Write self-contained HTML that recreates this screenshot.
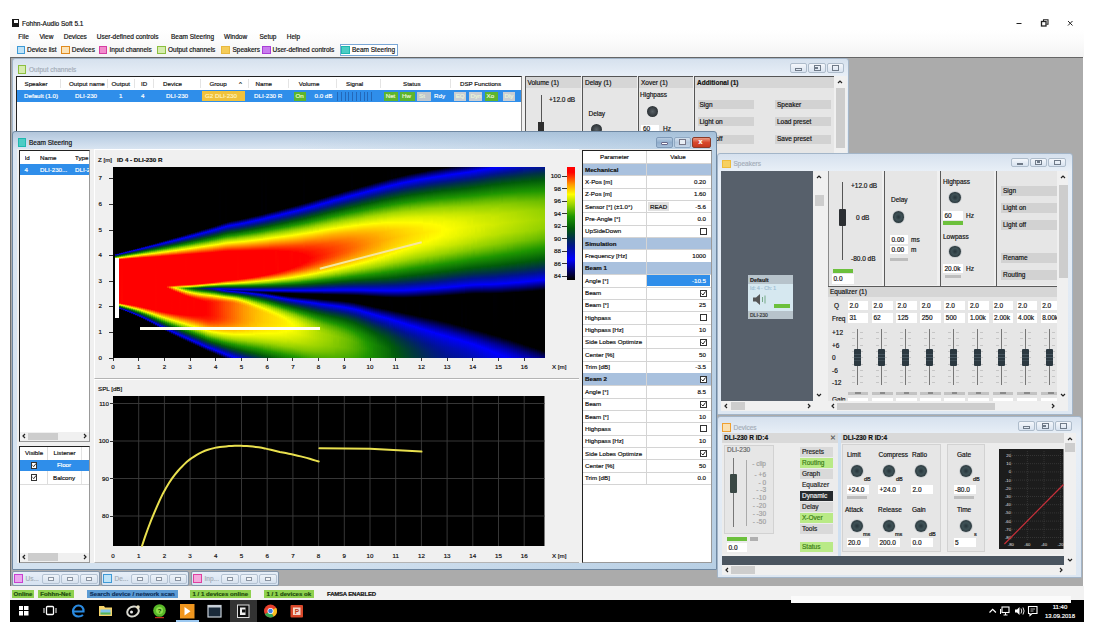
<!DOCTYPE html><html><head><meta charset="utf-8"><title>Fohhn-Audio Soft 5.1</title><style>
html,body{margin:0;padding:0;background:#fff;}
body{width:1099px;height:628px;position:relative;overflow:hidden;font-family:"Liberation Sans",sans-serif;font-size:6.5px;color:#111;-webkit-text-stroke:0.18px;}
div{position:absolute;box-sizing:border-box;}
.t{position:absolute;white-space:nowrap;line-height:10px;height:10px;}
.s{font-size:6.2px;}
.w{color:#fff;}
.g{color:#9aa3ad;}
svg{position:absolute;overflow:visible;}
.hs i{position:absolute;top:0;height:191px;display:block;}
</style></head><body><div style="left:10px;top:12px;width:1074px;height:588px;background:#fff;"></div><div style="left:11.5px;top:18.5px;width:7.5px;height:8.5px;background:#1a1a1a;"></div><div style="left:14px;top:20px;width:3.5px;height:3px;background:#fff;"></div><span class="t" style="left:22px;top:18.5px;color:#111;">Fohhn-Audio Soft 5.1</span><svg style="left:1010px;top:15px" width="70" height="16" viewBox="0 0 70 16"><g stroke="#222" stroke-width="1" fill="none"><path d="M6.5 8.5h5"/><rect x="31.500" y="6.500" width="4.500" height="4.500" stroke-width="1.300"/><path d="M33.500 6V4.800h4.500v4.500h-1.500" stroke-width="1.100"/><path d="M58 6l4.5 4.5M62.500 6l-4.500 4.500"/></g></svg><div style="left:10px;top:30px;width:1074px;height:27px;background:linear-gradient(#fff,#fcfcfc 35%,#f3f3f3);"></div><span class="t" style="left:18.3px;top:31.5px;color:#111;">File</span><span class="t" style="left:39.4px;top:31.5px;color:#111;">View</span><span class="t" style="left:63.7px;top:31.5px;color:#111;">Devices</span><span class="t" style="left:96.7px;top:31.5px;color:#111;">User-defined controls</span><span class="t" style="left:171px;top:31.5px;color:#111;">Beam Steering</span><span class="t" style="left:224px;top:31.5px;color:#111;">Window</span><span class="t" style="left:259.5px;top:31.5px;color:#111;">Setup</span><span class="t" style="left:286.7px;top:31.5px;color:#111;">Help</span><div style="left:339.5px;top:43.5px;width:58px;height:12.5px;border:1px solid #7aa7d6;background:#fff;"></div><div style="left:16.5px;top:45.5px;width:8.5px;height:8.5px;border:1.5px solid #3f9ad6;background:#bfe3f7;"></div><span class="t" style="left:27px;top:44.8px;color:#111;">Device list</span><div style="left:61.4px;top:45.5px;width:8.5px;height:8.5px;border:1.5px solid #e08a1e;background:#fbe3b8;"></div><span class="t" style="left:71.8px;top:44.8px;color:#111;">Devices</span><div style="left:98.5px;top:45.5px;width:8.5px;height:8.5px;border:1.5px solid #d63fa3;background:#f28ccc;"></div><span class="t" style="left:109.5px;top:44.8px;color:#111;">Input channels</span><div style="left:157px;top:45.5px;width:8.5px;height:8.5px;border:1.5px solid #8cbf3f;background:#d6ecae;"></div><span class="t" style="left:168px;top:44.8px;color:#111;">Output channels</span><div style="left:221px;top:45.5px;width:8.5px;height:8.5px;border:1.5px solid #e8b840;background:#f5cc58;"></div><span class="t" style="left:232.5px;top:44.8px;color:#111;">Speakers</span><div style="left:262px;top:45.5px;width:8.5px;height:8.5px;border:1.5px solid #a83fd6;background:#c97cee;"></div><span class="t" style="left:272.5px;top:44.8px;color:#111;">User-defined controls</span><div style="left:341px;top:45.5px;width:8.5px;height:8.5px;border:1.5px solid #1fb8b0;background:#4cccc4;"></div><span class="t" style="left:352px;top:44.8px;color:#111;">Beam Steering</span><div style="left:10px;top:57px;width:1073px;height:528.5px;background:#ababab;border-top:1px solid #666;border-left:1.5px solid #6e6e6e;"></div><div style="left:12px;top:58px;width:837px;height:110px;background:linear-gradient(#d6e1ee,#e8eff7 17px,#dde7f2);border:1px solid #a3b5c8;border-radius:3px 3px 1px 1px;"></div><div style="left:17.5px;top:65px;width:8.5px;height:8.5px;border:1.5px solid #8cbf3f;background:#d6ecae;"></div><span class="t" style="left:29px;top:64.5px;color:#a4adb8;">Output channels</span><div style="left:789.5px;top:63px;width:17.5px;height:9.5px;border:1px solid #aebccb;background:linear-gradient(#f4f7fb,#d8e3f0);border-radius:2px;"></div><div style="left:808px;top:63px;width:17.5px;height:9.5px;border:1px solid #aebccb;background:linear-gradient(#f4f7fb,#d8e3f0);border-radius:2px;"></div><div style="left:826.5px;top:63px;width:17.5px;height:9.5px;border:1px solid #aebccb;background:linear-gradient(#f4f7fb,#d8e3f0);border-radius:2px;"></div><div style="left:795px;top:68px;width:6.5px;height:2.5px;border:1px solid #6f7a88;"></div><div style="left:813.5px;top:65px;width:7px;height:5.5px;border:1px solid #6f7a88;"></div><div style="left:815px;top:66.5px;width:3px;height:2px;border:0.5px solid #6f7a88;"></div><div style="left:832px;top:65px;width:7px;height:5.5px;border:1px solid #6f7a88;"></div><div style="left:15px;top:76px;width:832px;height:90px;background:#f0f0f0;"></div><div style="left:16px;top:76px;width:505.5px;height:80px;background:#fff;border:1px solid #222;border-right-color:#888;"></div><span class="t s" style="left:24.5px;top:78.5px;">Speaker</span><span class="t s" style="left:69px;top:78.5px;">Output name</span><span class="t s" style="left:111.5px;top:78.5px;">Output</span><span class="t s" style="left:141px;top:78.5px;">ID</span><span class="t s" style="left:163px;top:78.5px;">Device</span><span class="t s" style="left:209.5px;top:78.5px;">Group</span><span class="t s" style="left:239px;top:78.5px;">^</span><span class="t s" style="left:255.5px;top:78.5px;">Name</span><span class="t s" style="left:298.7px;top:78.5px;">Volume</span><span class="t s" style="left:346px;top:78.5px;">Signal</span><span class="t s" style="left:403px;top:78.5px;">Status</span><span class="t s" style="left:460px;top:78.5px;">DSP Functions</span><div style="left:60px;top:79px;width:1px;height:9px;background:#e4e4e4;"></div><div style="left:107px;top:79px;width:1px;height:9px;background:#e4e4e4;"></div><div style="left:134px;top:79px;width:1px;height:9px;background:#e4e4e4;"></div><div style="left:153px;top:79px;width:1px;height:9px;background:#e4e4e4;"></div><div style="left:200px;top:79px;width:1px;height:9px;background:#e4e4e4;"></div><div style="left:248px;top:79px;width:1px;height:9px;background:#e4e4e4;"></div><div style="left:288px;top:79px;width:1px;height:9px;background:#e4e4e4;"></div><div style="left:336px;top:79px;width:1px;height:9px;background:#e4e4e4;"></div><div style="left:380px;top:79px;width:1px;height:9px;background:#e4e4e4;"></div><div style="left:450px;top:79px;width:1px;height:9px;background:#e4e4e4;"></div><div style="left:17px;top:90px;width:503.5px;height:12px;background:#2f8eea;"></div><span class="t s w" style="left:24px;top:91px;">Default (1.0)</span><span class="t s w" style="left:75px;top:91px;">DLI-230</span><span class="t s w" style="left:119px;top:91px;">1</span><span class="t s w" style="left:141px;top:91px;">4</span><span class="t s w" style="left:166px;top:91px;">DLI-230</span><span class="t s w" style="left:254px;top:91px;">DLI-230 R</span><span class="t s w" style="left:314.5px;top:91px;">0.0 dB</span><span class="t s w" style="left:434px;top:91px;">Rdy</span><div style="left:202px;top:91px;width:42.5px;height:10px;background:#f0c23c;"></div><span class="t s" style="left:205px;top:91px;color:#fff3c0;">G2 DLI-230</span><div style="left:293.7px;top:91.5px;width:12.5px;height:9.5px;background:#5db52e;"></div><span class="t s" style="left:295.5px;top:91px;color:#eaffc8;">On</span><div style="left:337px;top:92px;width:1px;height:8.5px;background:#2468b8;"></div><div style="left:340.8px;top:92px;width:1px;height:8.5px;background:#2468b8;"></div><div style="left:344.6px;top:92px;width:1px;height:8.5px;background:#2468b8;"></div><div style="left:348.4px;top:92px;width:1px;height:8.5px;background:#2468b8;"></div><div style="left:352.2px;top:92px;width:1px;height:8.5px;background:#2468b8;"></div><div style="left:356px;top:92px;width:1px;height:8.5px;background:#2468b8;"></div><div style="left:359.8px;top:92px;width:1px;height:8.5px;background:#2468b8;"></div><div style="left:363.6px;top:92px;width:1px;height:8.5px;background:#2468b8;"></div><div style="left:367.4px;top:92px;width:1px;height:8.5px;background:#2468b8;"></div><div style="left:371.2px;top:92px;width:1px;height:8.5px;background:#2468b8;"></div><div style="left:383.7px;top:91.5px;width:14px;height:9.5px;background:#5db52e;"></div><span class="t s" style="left:385.7px;top:91px;color:#e8f4d8;">Net</span><div style="left:400px;top:91.5px;width:14.5px;height:9.5px;background:#5db52e;"></div><span class="t s" style="left:402px;top:91px;color:#e8f4d8;">Hw</span><div style="left:417px;top:91.5px;width:14px;height:9.5px;background:#bfc6cc;"></div><span class="t s" style="left:419px;top:91px;color:#e8f4d8;">St</span><div style="left:453.7px;top:91.5px;width:12.5px;height:9.5px;background:#c9ced3;"></div><span class="t s" style="left:455.7px;top:91px;color:#e8f4d8;">EQ</span><div style="left:468.5px;top:91.5px;width:13.5px;height:9.5px;background:#c9ced3;"></div><span class="t s" style="left:470.5px;top:91px;color:#e8f4d8;">Dyn</span><div style="left:484.5px;top:91.5px;width:13px;height:9.5px;background:#5db52e;"></div><span class="t s" style="left:486.5px;top:91px;color:#e8f4d8;">Xo</span><div style="left:502.5px;top:91.5px;width:12.5px;height:9.5px;background:#c9ced3;"></div><span class="t s" style="left:504.5px;top:91px;color:#e8f4d8;">Dly</span><div style="left:525px;top:76px;width:55.5px;height:80px;background:#e6e6e6;"></div><div style="left:525px;top:76px;width:55.5px;height:12px;background:#d6d6d6;"></div><span class="t" style="left:527.5px;top:77.5px;">Volume (1)</span><div style="left:582.5px;top:76px;width:54px;height:80px;background:#e6e6e6;"></div><div style="left:582.5px;top:76px;width:54px;height:12px;background:#d6d6d6;"></div><span class="t" style="left:585px;top:77.5px;">Delay (1)</span><div style="left:638.5px;top:76px;width:54px;height:80px;background:#e6e6e6;"></div><div style="left:638.5px;top:76px;width:54px;height:12px;background:#d6d6d6;"></div><span class="t" style="left:641px;top:77.5px;">Xover (1)</span><div style="left:694.5px;top:76px;width:139px;height:80px;background:#e6e6e6;"></div><div style="left:694.5px;top:76px;width:139px;height:12px;background:#d6d6d6;"></div><span class="t" style="left:697px;top:77.5px;font-weight:bold;">Additional (1)</span><div style="left:524.5px;top:75.5px;width:56px;height:1px;background:#555;"></div><div style="left:524.5px;top:75.5px;width:1px;height:80px;background:#555;"></div><div style="left:581.5px;top:75.5px;width:55px;height:1px;background:#555;"></div><div style="left:581.5px;top:75.5px;width:1px;height:80px;background:#555;"></div><div style="left:637.5px;top:75.5px;width:55px;height:1px;background:#555;"></div><div style="left:637.5px;top:75.5px;width:1px;height:80px;background:#555;"></div><div style="left:693.5px;top:75.5px;width:140px;height:1px;background:#555;"></div><div style="left:693.5px;top:75.5px;width:1px;height:80px;background:#555;"></div><div style="left:540.5px;top:95px;width:1px;height:40px;background:#555;"></div><span class="t" style="left:549px;top:94.5px;">+12.0 dB</span><div style="left:537.5px;top:122px;width:6.5px;height:12px;background:#2e2e2e;"></div><span class="t" style="left:588.5px;top:109px;">Delay</span><div style="left:591px;top:124px;width:11px;height:11px;background:radial-gradient(#5a6268,#2c3236 70%);border-radius:50%;"></div><span class="t" style="left:640px;top:90px;">Highpass</span><div style="left:646.5px;top:105.5px;width:11px;height:11px;background:radial-gradient(#5a6268,#2c3236 70%);border-radius:50%;"></div><div style="left:641px;top:124.5px;width:18px;height:8px;background:#fff;"></div><span class="t" style="left:643px;top:124px;">60</span><span class="t" style="left:663px;top:124px;">Hz</span><div style="left:697.5px;top:99.7px;width:56px;height:9.3px;background:#d2d2d2;"></div><span class="t" style="left:699.5px;top:99.5px;">Sign</span><div style="left:697.5px;top:117px;width:56px;height:9.3px;background:#d2d2d2;"></div><span class="t" style="left:699.5px;top:116.8px;">Light on</span><div style="left:697.5px;top:134.5px;width:56px;height:9.3px;background:#d2d2d2;"></div><span class="t" style="left:699.5px;top:134.3px;">Light off</span><div style="left:775px;top:99.7px;width:56px;height:9.3px;background:#d2d2d2;"></div><span class="t" style="left:777px;top:99.5px;">Speaker</span><div style="left:775px;top:117px;width:56px;height:9.3px;background:#d2d2d2;"></div><span class="t" style="left:777px;top:116.8px;">Load preset</span><div style="left:775px;top:134.5px;width:56px;height:9.3px;background:#d2d2d2;"></div><span class="t" style="left:777px;top:134.3px;">Save preset</span><div style="left:835px;top:76px;width:10.5px;height:80px;background:#f0f0f0;"></div><div style="left:835.5px;top:88px;width:9.5px;height:60px;background:#cdcdcd;"></div><svg style="left:837px;top:79px" width="6" height="6"><path d="M1 4L3 2l2 2" stroke="#222" stroke-width="1.2" fill="none"/></svg><div style="left:716.5px;top:152.5px;width:356.5px;height:262.5px;background:linear-gradient(#d6e1ee,#e8eff7 17px,#dde7f2);border:1px solid #a3b5c8;border-radius:3px 3px 1px 1px;"></div><div style="left:722px;top:159.5px;width:8.5px;height:8.5px;border:1.5px solid #eebc3c;background:#f6d060;"></div><span class="t" style="left:733.5px;top:159px;color:#a4adb8;">Speakers</span><div style="left:1011px;top:157.5px;width:17.5px;height:9.5px;border:1px solid #aebccb;background:linear-gradient(#f4f7fb,#d8e3f0);border-radius:2px;"></div><div style="left:1029.5px;top:157.5px;width:17.5px;height:9.5px;border:1px solid #aebccb;background:linear-gradient(#f4f7fb,#d8e3f0);border-radius:2px;"></div><div style="left:1048px;top:157.5px;width:17.5px;height:9.5px;border:1px solid #aebccb;background:linear-gradient(#f4f7fb,#d8e3f0);border-radius:2px;"></div><div style="left:1016.5px;top:162.5px;width:6.5px;height:2.5px;border:1px solid #6f7a88;"></div><div style="left:1035px;top:159.5px;width:7px;height:5.5px;border:1px solid #6f7a88;"></div><div style="left:1036.5px;top:161px;width:3px;height:2px;border:0.5px solid #6f7a88;"></div><div style="left:1053.5px;top:159.5px;width:7px;height:5.5px;border:1px solid #6f7a88;"></div><div style="left:721px;top:171px;width:347px;height:240px;background:#f0f0f0;"></div><div style="left:721px;top:171px;width:92px;height:229.5px;background:#57606b;"></div><div style="left:748px;top:275px;width:45px;height:44px;background:#d6e8f0;"></div><div style="left:748px;top:275px;width:45px;height:8.5px;background:#b7c3cb;"></div><span class="t" style="left:750px;top:274.5px;font-weight:bold;font-size:5.5px;color:#222;">Default</span><span class="t" style="left:750px;top:283px;font-size:5px;color:#9fc0d4;">Id: 4 - Ch: 1</span><svg style="left:753px;top:293px" width="16" height="13" viewBox="0 0 16 13"><path d="M0 4.500h3l4-3.500v11l-4-3.500h-3z" fill="#555"/><path d="M9.500 4v5M12 2.500v8" stroke="#7a8" stroke-width="1" fill="none"/></svg><div style="left:774px;top:304px;width:16px;height:4px;background:#6cc03c;"></div><div style="left:748px;top:310.5px;width:45px;height:8.5px;background:#b7c3cb;"></div><span class="t" style="left:750px;top:310px;font-size:5px;color:#333;">DLI-230</span><div style="left:721px;top:401px;width:92px;height:10px;background:#f0f0f0;"></div><div style="left:731px;top:402px;width:14px;height:8px;background:#cdcdcd;"></div><svg style="left:723px;top:403px" width="6" height="6"><path d="M4 1L2 3l2 2" stroke="#222" stroke-width="1.2" fill="none"/></svg><svg style="left:806px;top:403px" width="6" height="6"><path d="M2 1l2 2l-2 2" stroke="#222" stroke-width="1.2" fill="none"/></svg><div style="left:814px;top:171px;width:10px;height:229.5px;background:#f0f0f0;"></div><div style="left:814.5px;top:195px;width:9px;height:11px;background:#cdcdcd;"></div><svg style="left:816px;top:174px" width="6" height="6"><path d="M1 4L3 2l2 2" stroke="#222" stroke-width="1.2" fill="none"/></svg><svg style="left:816px;top:392px" width="6" height="6"><path d="M1 2l2 2l2 -2" stroke="#222" stroke-width="1.2" fill="none"/></svg><div style="left:828px;top:171px;width:54px;height:114px;background:#e6e6e6;"></div><div style="left:885px;top:171px;width:52px;height:114px;background:#e6e6e6;"></div><div style="left:940px;top:171px;width:54px;height:114px;background:#e6e6e6;"></div><div style="left:997px;top:171px;width:60px;height:114px;background:#e6e6e6;"></div><div style="left:883.5px;top:171px;width:1px;height:115px;background:#5a5a5a;"></div><div style="left:939.5px;top:171px;width:1px;height:115px;background:#5a5a5a;"></div><div style="left:995.5px;top:171px;width:1px;height:115px;background:#5a5a5a;"></div><div style="left:828px;top:171px;width:1px;height:115px;background:#8a8a8a;"></div><div style="left:828px;top:285.5px;width:229px;height:1px;background:#5a5a5a;"></div><div style="left:842px;top:182px;width:1px;height:78px;background:#555;"></div><div style="left:839px;top:209px;width:7px;height:16.5px;background:#2c2f33;border-radius:1px;"></div><span class="t" style="left:851px;top:180.5px;">+12.0 dB</span><span class="t" style="left:856px;top:212.6px;">0 dB</span><span class="t" style="left:851px;top:254px;">-80.0 dB</span><div style="left:833px;top:268.5px;width:20px;height:4px;background:#6cc03c;"></div><div style="left:832px;top:274px;width:22px;height:9.5px;background:#fff;"></div><span class="t" style="left:833.5px;top:274.05px;">0.0</span><span class="t" style="left:891px;top:195px;">Delay</span><div style="left:892.8px;top:211.3px;width:11.4px;height:11.4px;background:radial-gradient(circle at 50% 50%,#26343a 0,#3f5257 40%,#2b383d 72%);border-radius:50%;box-shadow:0 0 0 0.8px #c4c8cb;"></div><div style="left:890px;top:235px;width:18px;height:8.5px;background:#fff;"></div><span class="t" style="left:891.5px;top:234.55px;">0.00</span><span class="t" style="left:911px;top:234.5px;">ms</span><div style="left:890px;top:245.5px;width:18px;height:8.5px;background:#fff;"></div><span class="t" style="left:891.5px;top:245.05px;">0.00</span><span class="t" style="left:911px;top:245px;">m</span><div style="left:890px;top:257.5px;width:18px;height:3px;background:#bdbdbd;"></div><span class="t" style="left:943px;top:176.5px;">Highpass</span><div style="left:949.3px;top:191.8px;width:11.4px;height:11.4px;background:radial-gradient(circle at 50% 50%,#26343a 0,#3f5257 40%,#2b383d 72%);border-radius:50%;box-shadow:0 0 0 0.8px #c4c8cb;"></div><div style="left:943px;top:211px;width:20px;height:8.5px;background:#fff;"></div><span class="t" style="left:944.5px;top:210.55px;">60</span><span class="t" style="left:966px;top:210.5px;">Hz</span><div style="left:943px;top:221px;width:20px;height:4px;background:#6cc03c;"></div><span class="t" style="left:943px;top:232px;">Lowpass</span><div style="left:949.3px;top:245.8px;width:11.4px;height:11.4px;background:radial-gradient(circle at 50% 50%,#26343a 0,#3f5257 40%,#2b383d 72%);border-radius:50%;box-shadow:0 0 0 0.8px #c4c8cb;"></div><div style="left:943px;top:264px;width:20px;height:9px;background:#fff;"></div><span class="t" style="left:944.5px;top:263.8px;">20.0k</span><span class="t" style="left:966px;top:263.5px;">Hz</span><div style="left:945px;top:275px;width:16px;height:3px;background:#bdbdbd;"></div><div style="left:1001px;top:186px;width:56px;height:9.5px;background:#d2d2d2;"></div><span class="t" style="left:1003px;top:186px;">Sign</span><div style="left:1001px;top:203.3px;width:56px;height:9.5px;background:#d2d2d2;"></div><span class="t" style="left:1003px;top:203.3px;">Light on</span><div style="left:1001px;top:220.2px;width:56px;height:9.5px;background:#d2d2d2;"></div><span class="t" style="left:1003px;top:220.2px;">Light off</span><div style="left:1001px;top:253.2px;width:56px;height:9.5px;background:#d2d2d2;"></div><span class="t" style="left:1003px;top:253.2px;">Rename</span><div style="left:1001px;top:270px;width:56px;height:9.5px;background:#d2d2d2;"></div><span class="t" style="left:1003px;top:270px;">Routing</span><div style="left:1058px;top:171px;width:10px;height:229.5px;background:#f0f0f0;"></div><div style="left:1058.5px;top:185px;width:9px;height:93px;background:#cdcdcd;"></div><svg style="left:1060px;top:174px" width="6" height="6"><path d="M1 4L3 2l2 2" stroke="#222" stroke-width="1.2" fill="none"/></svg><svg style="left:1060px;top:392px" width="6" height="6"><path d="M1 2l2 2l2 -2" stroke="#222" stroke-width="1.2" fill="none"/></svg><div style="left:828px;top:287px;width:229px;height:113.5px;background:#e6e6e6;"></div><div style="left:828px;top:287px;width:229px;height:10px;background:#d6d6d6;"></div><span class="t" style="left:830px;top:287px;">Equalizer (1)</span><span class="t" style="left:834px;top:301px;">Q</span><span class="t" style="left:832px;top:313.5px;">Freq</span><span class="t" style="left:832px;top:327.6px;">+12</span><span class="t" style="left:832px;top:340.6px;">+6</span><span class="t" style="left:832px;top:353px;">0</span><span class="t" style="left:832px;top:365.5px;">-6</span><span class="t" style="left:832px;top:378px;">-12</span><div style="left:847.9px;top:300.5px;width:20.6px;height:9.8px;background:#fff;overflow:hidden;"><span class="t" style="left:1.5px;top:0px">2.0</span></div><div style="left:847.9px;top:313px;width:20.6px;height:9.8px;background:#fff;overflow:hidden;"><span class="t" style="left:1.5px;top:0px">31</span></div><div style="left:856.6px;top:328.5px;width:1px;height:56px;background:#777;"></div><div style="left:851.6px;top:332px;width:3px;height:1px;background:#c6c6c6;"></div><div style="left:859.6px;top:332px;width:3px;height:1px;background:#c6c6c6;"></div><div style="left:851.6px;top:338.3px;width:3px;height:1px;background:#c6c6c6;"></div><div style="left:859.6px;top:338.3px;width:3px;height:1px;background:#c6c6c6;"></div><div style="left:851.6px;top:344.6px;width:3px;height:1px;background:#c6c6c6;"></div><div style="left:859.6px;top:344.6px;width:3px;height:1px;background:#c6c6c6;"></div><div style="left:851.6px;top:350.9px;width:3px;height:1px;background:#c6c6c6;"></div><div style="left:859.6px;top:350.9px;width:3px;height:1px;background:#c6c6c6;"></div><div style="left:851.6px;top:357.2px;width:3px;height:1px;background:#c6c6c6;"></div><div style="left:859.6px;top:357.2px;width:3px;height:1px;background:#c6c6c6;"></div><div style="left:851.6px;top:363.5px;width:3px;height:1px;background:#c6c6c6;"></div><div style="left:859.6px;top:363.5px;width:3px;height:1px;background:#c6c6c6;"></div><div style="left:851.6px;top:369.8px;width:3px;height:1px;background:#c6c6c6;"></div><div style="left:859.6px;top:369.8px;width:3px;height:1px;background:#c6c6c6;"></div><div style="left:851.6px;top:376.1px;width:3px;height:1px;background:#c6c6c6;"></div><div style="left:859.6px;top:376.1px;width:3px;height:1px;background:#c6c6c6;"></div><div style="left:851.6px;top:382.4px;width:3px;height:1px;background:#c6c6c6;"></div><div style="left:859.6px;top:382.4px;width:3px;height:1px;background:#c6c6c6;"></div><div style="left:853.6px;top:348.5px;width:7px;height:17.5px;background:linear-gradient(#2b3840,#2b3840 30%,#4a5a64 33%,#2b3840 36%,#2b3840 48%,#52646e 51%,#2b3840 54%,#2b3840 66%,#4a5a64 69%,#2b3840 72%);border-radius:1px;"></div><div style="left:847.9px;top:391.5px;width:20.6px;height:3.5px;background:#c2c2c2;"></div><div style="left:855.4px;top:392.3px;width:5.5px;height:2px;background:#8a8a8a;"></div><div style="left:847.9px;top:397.5px;width:20.6px;height:3px;background:#fff;"></div><div style="left:872px;top:300.5px;width:20.6px;height:9.8px;background:#fff;overflow:hidden;"><span class="t" style="left:1.5px;top:0px">2.0</span></div><div style="left:872px;top:313px;width:20.6px;height:9.8px;background:#fff;overflow:hidden;"><span class="t" style="left:1.5px;top:0px">62</span></div><div style="left:880.7px;top:328.5px;width:1px;height:56px;background:#777;"></div><div style="left:875.7px;top:332px;width:3px;height:1px;background:#c6c6c6;"></div><div style="left:883.7px;top:332px;width:3px;height:1px;background:#c6c6c6;"></div><div style="left:875.7px;top:338.3px;width:3px;height:1px;background:#c6c6c6;"></div><div style="left:883.7px;top:338.3px;width:3px;height:1px;background:#c6c6c6;"></div><div style="left:875.7px;top:344.6px;width:3px;height:1px;background:#c6c6c6;"></div><div style="left:883.7px;top:344.6px;width:3px;height:1px;background:#c6c6c6;"></div><div style="left:875.7px;top:350.9px;width:3px;height:1px;background:#c6c6c6;"></div><div style="left:883.7px;top:350.9px;width:3px;height:1px;background:#c6c6c6;"></div><div style="left:875.7px;top:357.2px;width:3px;height:1px;background:#c6c6c6;"></div><div style="left:883.7px;top:357.2px;width:3px;height:1px;background:#c6c6c6;"></div><div style="left:875.7px;top:363.5px;width:3px;height:1px;background:#c6c6c6;"></div><div style="left:883.7px;top:363.5px;width:3px;height:1px;background:#c6c6c6;"></div><div style="left:875.7px;top:369.8px;width:3px;height:1px;background:#c6c6c6;"></div><div style="left:883.7px;top:369.8px;width:3px;height:1px;background:#c6c6c6;"></div><div style="left:875.7px;top:376.1px;width:3px;height:1px;background:#c6c6c6;"></div><div style="left:883.7px;top:376.1px;width:3px;height:1px;background:#c6c6c6;"></div><div style="left:875.7px;top:382.4px;width:3px;height:1px;background:#c6c6c6;"></div><div style="left:883.7px;top:382.4px;width:3px;height:1px;background:#c6c6c6;"></div><div style="left:877.7px;top:348.5px;width:7px;height:17.5px;background:linear-gradient(#2b3840,#2b3840 30%,#4a5a64 33%,#2b3840 36%,#2b3840 48%,#52646e 51%,#2b3840 54%,#2b3840 66%,#4a5a64 69%,#2b3840 72%);border-radius:1px;"></div><div style="left:872px;top:391.5px;width:20.6px;height:3.5px;background:#c2c2c2;"></div><div style="left:879.5px;top:392.3px;width:5.5px;height:2px;background:#8a8a8a;"></div><div style="left:872px;top:397.5px;width:20.6px;height:3px;background:#fff;"></div><div style="left:896.1px;top:300.5px;width:20.6px;height:9.8px;background:#fff;overflow:hidden;"><span class="t" style="left:1.5px;top:0px">2.0</span></div><div style="left:896.1px;top:313px;width:20.6px;height:9.8px;background:#fff;overflow:hidden;"><span class="t" style="left:1.5px;top:0px">125</span></div><div style="left:904.8px;top:328.5px;width:1px;height:56px;background:#777;"></div><div style="left:899.8px;top:332px;width:3px;height:1px;background:#c6c6c6;"></div><div style="left:907.8px;top:332px;width:3px;height:1px;background:#c6c6c6;"></div><div style="left:899.8px;top:338.3px;width:3px;height:1px;background:#c6c6c6;"></div><div style="left:907.8px;top:338.3px;width:3px;height:1px;background:#c6c6c6;"></div><div style="left:899.8px;top:344.6px;width:3px;height:1px;background:#c6c6c6;"></div><div style="left:907.8px;top:344.6px;width:3px;height:1px;background:#c6c6c6;"></div><div style="left:899.8px;top:350.9px;width:3px;height:1px;background:#c6c6c6;"></div><div style="left:907.8px;top:350.9px;width:3px;height:1px;background:#c6c6c6;"></div><div style="left:899.8px;top:357.2px;width:3px;height:1px;background:#c6c6c6;"></div><div style="left:907.8px;top:357.2px;width:3px;height:1px;background:#c6c6c6;"></div><div style="left:899.8px;top:363.5px;width:3px;height:1px;background:#c6c6c6;"></div><div style="left:907.8px;top:363.5px;width:3px;height:1px;background:#c6c6c6;"></div><div style="left:899.8px;top:369.8px;width:3px;height:1px;background:#c6c6c6;"></div><div style="left:907.8px;top:369.8px;width:3px;height:1px;background:#c6c6c6;"></div><div style="left:899.8px;top:376.1px;width:3px;height:1px;background:#c6c6c6;"></div><div style="left:907.8px;top:376.1px;width:3px;height:1px;background:#c6c6c6;"></div><div style="left:899.8px;top:382.4px;width:3px;height:1px;background:#c6c6c6;"></div><div style="left:907.8px;top:382.4px;width:3px;height:1px;background:#c6c6c6;"></div><div style="left:901.8px;top:348.5px;width:7px;height:17.5px;background:linear-gradient(#2b3840,#2b3840 30%,#4a5a64 33%,#2b3840 36%,#2b3840 48%,#52646e 51%,#2b3840 54%,#2b3840 66%,#4a5a64 69%,#2b3840 72%);border-radius:1px;"></div><div style="left:896.1px;top:391.5px;width:20.6px;height:3.5px;background:#c2c2c2;"></div><div style="left:903.6px;top:392.3px;width:5.5px;height:2px;background:#8a8a8a;"></div><div style="left:896.1px;top:397.5px;width:20.6px;height:3px;background:#fff;"></div><div style="left:920.2px;top:300.5px;width:20.6px;height:9.8px;background:#fff;overflow:hidden;"><span class="t" style="left:1.5px;top:0px">2.0</span></div><div style="left:920.2px;top:313px;width:20.6px;height:9.8px;background:#fff;overflow:hidden;"><span class="t" style="left:1.5px;top:0px">250</span></div><div style="left:928.9px;top:328.5px;width:1px;height:56px;background:#777;"></div><div style="left:923.9px;top:332px;width:3px;height:1px;background:#c6c6c6;"></div><div style="left:931.9px;top:332px;width:3px;height:1px;background:#c6c6c6;"></div><div style="left:923.9px;top:338.3px;width:3px;height:1px;background:#c6c6c6;"></div><div style="left:931.9px;top:338.3px;width:3px;height:1px;background:#c6c6c6;"></div><div style="left:923.9px;top:344.6px;width:3px;height:1px;background:#c6c6c6;"></div><div style="left:931.9px;top:344.6px;width:3px;height:1px;background:#c6c6c6;"></div><div style="left:923.9px;top:350.9px;width:3px;height:1px;background:#c6c6c6;"></div><div style="left:931.9px;top:350.9px;width:3px;height:1px;background:#c6c6c6;"></div><div style="left:923.9px;top:357.2px;width:3px;height:1px;background:#c6c6c6;"></div><div style="left:931.9px;top:357.2px;width:3px;height:1px;background:#c6c6c6;"></div><div style="left:923.9px;top:363.5px;width:3px;height:1px;background:#c6c6c6;"></div><div style="left:931.9px;top:363.5px;width:3px;height:1px;background:#c6c6c6;"></div><div style="left:923.9px;top:369.8px;width:3px;height:1px;background:#c6c6c6;"></div><div style="left:931.9px;top:369.8px;width:3px;height:1px;background:#c6c6c6;"></div><div style="left:923.9px;top:376.1px;width:3px;height:1px;background:#c6c6c6;"></div><div style="left:931.9px;top:376.1px;width:3px;height:1px;background:#c6c6c6;"></div><div style="left:923.9px;top:382.4px;width:3px;height:1px;background:#c6c6c6;"></div><div style="left:931.9px;top:382.4px;width:3px;height:1px;background:#c6c6c6;"></div><div style="left:925.9px;top:348.5px;width:7px;height:17.5px;background:linear-gradient(#2b3840,#2b3840 30%,#4a5a64 33%,#2b3840 36%,#2b3840 48%,#52646e 51%,#2b3840 54%,#2b3840 66%,#4a5a64 69%,#2b3840 72%);border-radius:1px;"></div><div style="left:920.2px;top:391.5px;width:20.6px;height:3.5px;background:#c2c2c2;"></div><div style="left:927.7px;top:392.3px;width:5.5px;height:2px;background:#8a8a8a;"></div><div style="left:920.2px;top:397.5px;width:20.6px;height:3px;background:#fff;"></div><div style="left:944.3px;top:300.5px;width:20.6px;height:9.8px;background:#fff;overflow:hidden;"><span class="t" style="left:1.5px;top:0px">2.0</span></div><div style="left:944.3px;top:313px;width:20.6px;height:9.8px;background:#fff;overflow:hidden;"><span class="t" style="left:1.5px;top:0px">500</span></div><div style="left:953px;top:328.5px;width:1px;height:56px;background:#777;"></div><div style="left:948px;top:332px;width:3px;height:1px;background:#c6c6c6;"></div><div style="left:956px;top:332px;width:3px;height:1px;background:#c6c6c6;"></div><div style="left:948px;top:338.3px;width:3px;height:1px;background:#c6c6c6;"></div><div style="left:956px;top:338.3px;width:3px;height:1px;background:#c6c6c6;"></div><div style="left:948px;top:344.6px;width:3px;height:1px;background:#c6c6c6;"></div><div style="left:956px;top:344.6px;width:3px;height:1px;background:#c6c6c6;"></div><div style="left:948px;top:350.9px;width:3px;height:1px;background:#c6c6c6;"></div><div style="left:956px;top:350.9px;width:3px;height:1px;background:#c6c6c6;"></div><div style="left:948px;top:357.2px;width:3px;height:1px;background:#c6c6c6;"></div><div style="left:956px;top:357.2px;width:3px;height:1px;background:#c6c6c6;"></div><div style="left:948px;top:363.5px;width:3px;height:1px;background:#c6c6c6;"></div><div style="left:956px;top:363.5px;width:3px;height:1px;background:#c6c6c6;"></div><div style="left:948px;top:369.8px;width:3px;height:1px;background:#c6c6c6;"></div><div style="left:956px;top:369.8px;width:3px;height:1px;background:#c6c6c6;"></div><div style="left:948px;top:376.1px;width:3px;height:1px;background:#c6c6c6;"></div><div style="left:956px;top:376.1px;width:3px;height:1px;background:#c6c6c6;"></div><div style="left:948px;top:382.4px;width:3px;height:1px;background:#c6c6c6;"></div><div style="left:956px;top:382.4px;width:3px;height:1px;background:#c6c6c6;"></div><div style="left:950px;top:348.5px;width:7px;height:17.5px;background:linear-gradient(#2b3840,#2b3840 30%,#4a5a64 33%,#2b3840 36%,#2b3840 48%,#52646e 51%,#2b3840 54%,#2b3840 66%,#4a5a64 69%,#2b3840 72%);border-radius:1px;"></div><div style="left:944.3px;top:391.5px;width:20.6px;height:3.5px;background:#c2c2c2;"></div><div style="left:951.8px;top:392.3px;width:5.5px;height:2px;background:#8a8a8a;"></div><div style="left:944.3px;top:397.5px;width:20.6px;height:3px;background:#fff;"></div><div style="left:968.4px;top:300.5px;width:20.6px;height:9.8px;background:#fff;overflow:hidden;"><span class="t" style="left:1.5px;top:0px">2.0</span></div><div style="left:968.4px;top:313px;width:20.6px;height:9.8px;background:#fff;overflow:hidden;"><span class="t" style="left:1.5px;top:0px">1.00k</span></div><div style="left:977.1px;top:328.5px;width:1px;height:56px;background:#777;"></div><div style="left:972.1px;top:332px;width:3px;height:1px;background:#c6c6c6;"></div><div style="left:980.1px;top:332px;width:3px;height:1px;background:#c6c6c6;"></div><div style="left:972.1px;top:338.3px;width:3px;height:1px;background:#c6c6c6;"></div><div style="left:980.1px;top:338.3px;width:3px;height:1px;background:#c6c6c6;"></div><div style="left:972.1px;top:344.6px;width:3px;height:1px;background:#c6c6c6;"></div><div style="left:980.1px;top:344.6px;width:3px;height:1px;background:#c6c6c6;"></div><div style="left:972.1px;top:350.9px;width:3px;height:1px;background:#c6c6c6;"></div><div style="left:980.1px;top:350.9px;width:3px;height:1px;background:#c6c6c6;"></div><div style="left:972.1px;top:357.2px;width:3px;height:1px;background:#c6c6c6;"></div><div style="left:980.1px;top:357.2px;width:3px;height:1px;background:#c6c6c6;"></div><div style="left:972.1px;top:363.5px;width:3px;height:1px;background:#c6c6c6;"></div><div style="left:980.1px;top:363.5px;width:3px;height:1px;background:#c6c6c6;"></div><div style="left:972.1px;top:369.8px;width:3px;height:1px;background:#c6c6c6;"></div><div style="left:980.1px;top:369.8px;width:3px;height:1px;background:#c6c6c6;"></div><div style="left:972.1px;top:376.1px;width:3px;height:1px;background:#c6c6c6;"></div><div style="left:980.1px;top:376.1px;width:3px;height:1px;background:#c6c6c6;"></div><div style="left:972.1px;top:382.4px;width:3px;height:1px;background:#c6c6c6;"></div><div style="left:980.1px;top:382.4px;width:3px;height:1px;background:#c6c6c6;"></div><div style="left:974.1px;top:348.5px;width:7px;height:17.5px;background:linear-gradient(#2b3840,#2b3840 30%,#4a5a64 33%,#2b3840 36%,#2b3840 48%,#52646e 51%,#2b3840 54%,#2b3840 66%,#4a5a64 69%,#2b3840 72%);border-radius:1px;"></div><div style="left:968.4px;top:391.5px;width:20.6px;height:3.5px;background:#c2c2c2;"></div><div style="left:975.9px;top:392.3px;width:5.5px;height:2px;background:#8a8a8a;"></div><div style="left:968.4px;top:397.5px;width:20.6px;height:3px;background:#fff;"></div><div style="left:992.5px;top:300.5px;width:20.6px;height:9.8px;background:#fff;overflow:hidden;"><span class="t" style="left:1.5px;top:0px">2.0</span></div><div style="left:992.5px;top:313px;width:20.6px;height:9.8px;background:#fff;overflow:hidden;"><span class="t" style="left:1.5px;top:0px">2.00k</span></div><div style="left:1001.2px;top:328.5px;width:1px;height:56px;background:#777;"></div><div style="left:996.2px;top:332px;width:3px;height:1px;background:#c6c6c6;"></div><div style="left:1004.2px;top:332px;width:3px;height:1px;background:#c6c6c6;"></div><div style="left:996.2px;top:338.3px;width:3px;height:1px;background:#c6c6c6;"></div><div style="left:1004.2px;top:338.3px;width:3px;height:1px;background:#c6c6c6;"></div><div style="left:996.2px;top:344.6px;width:3px;height:1px;background:#c6c6c6;"></div><div style="left:1004.2px;top:344.6px;width:3px;height:1px;background:#c6c6c6;"></div><div style="left:996.2px;top:350.9px;width:3px;height:1px;background:#c6c6c6;"></div><div style="left:1004.2px;top:350.9px;width:3px;height:1px;background:#c6c6c6;"></div><div style="left:996.2px;top:357.2px;width:3px;height:1px;background:#c6c6c6;"></div><div style="left:1004.2px;top:357.2px;width:3px;height:1px;background:#c6c6c6;"></div><div style="left:996.2px;top:363.5px;width:3px;height:1px;background:#c6c6c6;"></div><div style="left:1004.2px;top:363.5px;width:3px;height:1px;background:#c6c6c6;"></div><div style="left:996.2px;top:369.8px;width:3px;height:1px;background:#c6c6c6;"></div><div style="left:1004.2px;top:369.8px;width:3px;height:1px;background:#c6c6c6;"></div><div style="left:996.2px;top:376.1px;width:3px;height:1px;background:#c6c6c6;"></div><div style="left:1004.2px;top:376.1px;width:3px;height:1px;background:#c6c6c6;"></div><div style="left:996.2px;top:382.4px;width:3px;height:1px;background:#c6c6c6;"></div><div style="left:1004.2px;top:382.4px;width:3px;height:1px;background:#c6c6c6;"></div><div style="left:998.2px;top:348.5px;width:7px;height:17.5px;background:linear-gradient(#2b3840,#2b3840 30%,#4a5a64 33%,#2b3840 36%,#2b3840 48%,#52646e 51%,#2b3840 54%,#2b3840 66%,#4a5a64 69%,#2b3840 72%);border-radius:1px;"></div><div style="left:992.5px;top:391.5px;width:20.6px;height:3.5px;background:#c2c2c2;"></div><div style="left:1000px;top:392.3px;width:5.5px;height:2px;background:#8a8a8a;"></div><div style="left:992.5px;top:397.5px;width:20.6px;height:3px;background:#fff;"></div><div style="left:1016.6px;top:300.5px;width:20.6px;height:9.8px;background:#fff;overflow:hidden;"><span class="t" style="left:1.5px;top:0px">2.0</span></div><div style="left:1016.6px;top:313px;width:20.6px;height:9.8px;background:#fff;overflow:hidden;"><span class="t" style="left:1.5px;top:0px">4.00k</span></div><div style="left:1025.3px;top:328.5px;width:1px;height:56px;background:#777;"></div><div style="left:1020.3px;top:332px;width:3px;height:1px;background:#c6c6c6;"></div><div style="left:1028.3px;top:332px;width:3px;height:1px;background:#c6c6c6;"></div><div style="left:1020.3px;top:338.3px;width:3px;height:1px;background:#c6c6c6;"></div><div style="left:1028.3px;top:338.3px;width:3px;height:1px;background:#c6c6c6;"></div><div style="left:1020.3px;top:344.6px;width:3px;height:1px;background:#c6c6c6;"></div><div style="left:1028.3px;top:344.6px;width:3px;height:1px;background:#c6c6c6;"></div><div style="left:1020.3px;top:350.9px;width:3px;height:1px;background:#c6c6c6;"></div><div style="left:1028.3px;top:350.9px;width:3px;height:1px;background:#c6c6c6;"></div><div style="left:1020.3px;top:357.2px;width:3px;height:1px;background:#c6c6c6;"></div><div style="left:1028.3px;top:357.2px;width:3px;height:1px;background:#c6c6c6;"></div><div style="left:1020.3px;top:363.5px;width:3px;height:1px;background:#c6c6c6;"></div><div style="left:1028.3px;top:363.5px;width:3px;height:1px;background:#c6c6c6;"></div><div style="left:1020.3px;top:369.8px;width:3px;height:1px;background:#c6c6c6;"></div><div style="left:1028.3px;top:369.8px;width:3px;height:1px;background:#c6c6c6;"></div><div style="left:1020.3px;top:376.1px;width:3px;height:1px;background:#c6c6c6;"></div><div style="left:1028.3px;top:376.1px;width:3px;height:1px;background:#c6c6c6;"></div><div style="left:1020.3px;top:382.4px;width:3px;height:1px;background:#c6c6c6;"></div><div style="left:1028.3px;top:382.4px;width:3px;height:1px;background:#c6c6c6;"></div><div style="left:1022.3px;top:348.5px;width:7px;height:17.5px;background:linear-gradient(#2b3840,#2b3840 30%,#4a5a64 33%,#2b3840 36%,#2b3840 48%,#52646e 51%,#2b3840 54%,#2b3840 66%,#4a5a64 69%,#2b3840 72%);border-radius:1px;"></div><div style="left:1016.6px;top:391.5px;width:20.6px;height:3.5px;background:#c2c2c2;"></div><div style="left:1024.1px;top:392.3px;width:5.5px;height:2px;background:#8a8a8a;"></div><div style="left:1016.6px;top:397.5px;width:20.6px;height:3px;background:#fff;"></div><div style="left:1040.7px;top:300.5px;width:16.6px;height:9.8px;background:#fff;overflow:hidden;"><span class="t" style="left:1.5px;top:0px">2.0</span></div><div style="left:1040.7px;top:313px;width:16.6px;height:9.8px;background:#fff;overflow:hidden;"><span class="t" style="left:1.5px;top:0px">8.00k</span></div><div style="left:1049.4px;top:328.5px;width:1px;height:56px;background:#777;"></div><div style="left:1044.4px;top:332px;width:3px;height:1px;background:#c6c6c6;"></div><div style="left:1052.4px;top:332px;width:3px;height:1px;background:#c6c6c6;"></div><div style="left:1044.4px;top:338.3px;width:3px;height:1px;background:#c6c6c6;"></div><div style="left:1052.4px;top:338.3px;width:3px;height:1px;background:#c6c6c6;"></div><div style="left:1044.4px;top:344.6px;width:3px;height:1px;background:#c6c6c6;"></div><div style="left:1052.4px;top:344.6px;width:3px;height:1px;background:#c6c6c6;"></div><div style="left:1044.4px;top:350.9px;width:3px;height:1px;background:#c6c6c6;"></div><div style="left:1052.4px;top:350.9px;width:3px;height:1px;background:#c6c6c6;"></div><div style="left:1044.4px;top:357.2px;width:3px;height:1px;background:#c6c6c6;"></div><div style="left:1052.4px;top:357.2px;width:3px;height:1px;background:#c6c6c6;"></div><div style="left:1044.4px;top:363.5px;width:3px;height:1px;background:#c6c6c6;"></div><div style="left:1052.4px;top:363.5px;width:3px;height:1px;background:#c6c6c6;"></div><div style="left:1044.4px;top:369.8px;width:3px;height:1px;background:#c6c6c6;"></div><div style="left:1052.4px;top:369.8px;width:3px;height:1px;background:#c6c6c6;"></div><div style="left:1044.4px;top:376.1px;width:3px;height:1px;background:#c6c6c6;"></div><div style="left:1052.4px;top:376.1px;width:3px;height:1px;background:#c6c6c6;"></div><div style="left:1044.4px;top:382.4px;width:3px;height:1px;background:#c6c6c6;"></div><div style="left:1052.4px;top:382.4px;width:3px;height:1px;background:#c6c6c6;"></div><div style="left:1046.4px;top:348.5px;width:7px;height:17.5px;background:linear-gradient(#2b3840,#2b3840 30%,#4a5a64 33%,#2b3840 36%,#2b3840 48%,#52646e 51%,#2b3840 54%,#2b3840 66%,#4a5a64 69%,#2b3840 72%);border-radius:1px;"></div><div style="left:1040.7px;top:391.5px;width:16.6px;height:3.5px;background:#c2c2c2;"></div><div style="left:1048.2px;top:392.3px;width:5.5px;height:2px;background:#8a8a8a;"></div><div style="left:1040.7px;top:397.5px;width:16.6px;height:3px;background:#fff;"></div><span class="t" style="left:832px;top:395px;clip-path:inset(0 0 4.500px 0);">Gain</span><div style="left:828px;top:401px;width:229px;height:10px;background:#f0f0f0;"></div><div style="left:836.5px;top:402.5px;width:158.5px;height:7.5px;background:#cdcdcd;"></div><svg style="left:830px;top:403px" width="6" height="6"><path d="M4 1L2 3l2 2" stroke="#222" stroke-width="1.2" fill="none"/></svg><svg style="left:1050px;top:403px" width="6" height="6"><path d="M2 1l2 2l-2 2" stroke="#222" stroke-width="1.2" fill="none"/></svg><div style="left:716.5px;top:416px;width:365.5px;height:162px;background:linear-gradient(#d6e1ee,#e8eff7 17px,#dde7f2);border:1px solid #a3b5c8;border-radius:3px 3px 1px 1px;"></div><div style="left:722px;top:423px;width:8.5px;height:8.5px;border:1.5px solid #f0a030;background:#fbe0b0;"></div><span class="t" style="left:733.5px;top:422.5px;color:#a4adb8;">Devices</span><div style="left:1017.5px;top:421px;width:17.5px;height:9.5px;border:1px solid #aebccb;background:linear-gradient(#f4f7fb,#d8e3f0);border-radius:2px;"></div><div style="left:1036px;top:421px;width:17.5px;height:9.5px;border:1px solid #aebccb;background:linear-gradient(#f4f7fb,#d8e3f0);border-radius:2px;"></div><div style="left:1054.5px;top:421px;width:17.5px;height:9.5px;border:1px solid #aebccb;background:linear-gradient(#f4f7fb,#d8e3f0);border-radius:2px;"></div><div style="left:1023px;top:426px;width:6.5px;height:2.5px;border:1px solid #6f7a88;"></div><div style="left:1041.5px;top:423px;width:7px;height:5.5px;border:1px solid #6f7a88;"></div><div style="left:1043px;top:424.5px;width:3px;height:2px;border:0.5px solid #6f7a88;"></div><div style="left:1060px;top:423px;width:7px;height:5.5px;border:1px solid #6f7a88;"></div><div style="left:722px;top:433px;width:354px;height:141px;background:#f0f0f0;"></div><div style="left:722px;top:433px;width:115.5px;height:120.5px;background:#ececec;"></div><div style="left:722px;top:433px;width:115.5px;height:9.5px;background:#d9d9d9;"></div><span class="t" style="left:724px;top:432.8px;font-weight:bold;color:#111;">DLI-230 R ID:4</span><span class="t" style="left:829.5px;top:432.5px;font-size:7px;color:#555;">✕</span><div style="left:724px;top:445px;width:49.5px;height:89px;background:#e6e6e6;border:1px solid #d2d2d2;"></div><span class="t" style="left:727px;top:444.5px;color:#666;">DLI-230</span><div style="left:733px;top:458px;width:1px;height:69px;background:#777;"></div><div style="left:729.5px;top:474px;width:7.5px;height:18.5px;background:#3a4845;border-radius:1px;"></div><div style="left:746px;top:460px;width:1px;height:66px;background:#aaa;"></div><span class="t" style="right:333px;top:459.4px;color:#a0a0a0;">- clip</span><span class="t" style="right:333px;top:469.5px;color:#a0a0a0;">- +6</span><span class="t" style="right:333px;top:477.5px;color:#a0a0a0;">-  0</span><span class="t" style="right:333px;top:485px;color:#a0a0a0;">-  -3</span><span class="t" style="right:333px;top:493px;color:#a0a0a0;">- -10</span><span class="t" style="right:333px;top:501px;color:#a0a0a0;">- -20</span><span class="t" style="right:333px;top:509px;color:#a0a0a0;">- -30</span><span class="t" style="right:333px;top:517px;color:#a0a0a0;">- -50</span><div style="left:727px;top:537px;width:20px;height:3.5px;background:#6cc03c;"></div><div style="left:750px;top:537px;width:8px;height:3.5px;background:#b0b0b0;"></div><div style="left:727px;top:543px;width:20px;height:9px;background:#fff;"></div><span class="t" style="left:728.5px;top:542.8px;">0.0</span><div style="left:800px;top:446.5px;width:32.5px;height:10px;background:#d9d9d9;"></div><span class="t" style="left:802px;top:446.5px;color:#222;">Presets</span><div style="left:800px;top:457.5px;width:32.5px;height:10px;background:#b9ea86;"></div><span class="t" style="left:802px;top:457.5px;color:#3b7d14;">Routing</span><div style="left:800px;top:468.5px;width:32.5px;height:10px;background:#d9d9d9;"></div><span class="t" style="left:802px;top:468.5px;color:#222;">Graph</span><div style="left:800px;top:479.5px;width:32.5px;height:10px;background:#ececec;"></div><span class="t" style="left:802px;top:479.5px;color:#222;">Equalizer</span><div style="left:800px;top:490.5px;width:32.5px;height:10px;background:#262a2e;"></div><span class="t" style="left:802px;top:490.5px;color:#f0f0f0;">Dynamic</span><div style="left:800px;top:501.5px;width:32.5px;height:10px;background:#d9d9d9;"></div><span class="t" style="left:802px;top:501.5px;color:#222;">Delay</span><div style="left:800px;top:512.5px;width:32.5px;height:10px;background:#b9ea86;"></div><span class="t" style="left:802px;top:512.5px;color:#3b7d14;">X-Over</span><div style="left:800px;top:523.5px;width:32.5px;height:10px;background:#d9d9d9;"></div><span class="t" style="left:802px;top:523.5px;color:#222;">Tools</span><div style="left:800px;top:541.5px;width:32.5px;height:10px;background:#b9ea86;"></div><span class="t" style="left:802px;top:541.5px;color:#3b7d14;">Status</span><div style="left:837.5px;top:433px;width:3.5px;height:131.5px;background:#cfe0f1;"></div><div style="left:841px;top:433px;width:223px;height:120.5px;background:#ececec;"></div><div style="left:841px;top:433px;width:223px;height:9.5px;background:#d9d9d9;"></div><span class="t" style="left:843px;top:432.8px;font-weight:bold;color:#111;">DLI-230 R ID:4</span><div style="left:841.5px;top:444px;width:99.5px;height:108px;background:#e6e6e6;border:1px solid #d2d2d2;"></div><div style="left:946.5px;top:444px;width:38px;height:108px;background:#e6e6e6;border:1px solid #d2d2d2;"></div><span class="t" style="left:847px;top:449.5px;">Limit</span><span class="t" style="left:878.5px;top:449.5px;">Compress</span><span class="t" style="left:912px;top:449.5px;">Ratio</span><span class="t" style="left:957px;top:449.5px;">Gate</span><span class="t" style="left:845px;top:505px;">Attack</span><span class="t" style="left:878px;top:505px;">Release</span><span class="t" style="left:912px;top:505px;">Gain</span><span class="t" style="left:957px;top:505px;">Time</span><div style="left:850.5px;top:465px;width:12px;height:12px;background:radial-gradient(circle at 50% 50%,#26343a 0,#3f5257 40%,#2b383d 72%);border-radius:50%;box-shadow:0 0 0 0.8px #c4c8cb;"></div><div style="left:850.5px;top:519.5px;width:12px;height:12px;background:radial-gradient(circle at 50% 50%,#26343a 0,#3f5257 40%,#2b383d 72%);border-radius:50%;box-shadow:0 0 0 0.8px #c4c8cb;"></div><div style="left:882.5px;top:465px;width:12px;height:12px;background:radial-gradient(circle at 50% 50%,#26343a 0,#3f5257 40%,#2b383d 72%);border-radius:50%;box-shadow:0 0 0 0.8px #c4c8cb;"></div><div style="left:882.5px;top:519.5px;width:12px;height:12px;background:radial-gradient(circle at 50% 50%,#26343a 0,#3f5257 40%,#2b383d 72%);border-radius:50%;box-shadow:0 0 0 0.8px #c4c8cb;"></div><div style="left:915px;top:465px;width:12px;height:12px;background:radial-gradient(circle at 50% 50%,#26343a 0,#3f5257 40%,#2b383d 72%);border-radius:50%;box-shadow:0 0 0 0.8px #c4c8cb;"></div><div style="left:915px;top:519.5px;width:12px;height:12px;background:radial-gradient(circle at 50% 50%,#26343a 0,#3f5257 40%,#2b383d 72%);border-radius:50%;box-shadow:0 0 0 0.8px #c4c8cb;"></div><div style="left:959.5px;top:465px;width:12px;height:12px;background:radial-gradient(circle at 50% 50%,#26343a 0,#3f5257 40%,#2b383d 72%);border-radius:50%;box-shadow:0 0 0 0.8px #c4c8cb;"></div><div style="left:959.5px;top:519.5px;width:12px;height:12px;background:radial-gradient(circle at 50% 50%,#26343a 0,#3f5257 40%,#2b383d 72%);border-radius:50%;box-shadow:0 0 0 0.8px #c4c8cb;"></div><span class="t" style="left:864px;top:474px;font-size:5.5px;">dB</span><span class="t" style="left:896px;top:474px;font-size:5.5px;">dB</span><span class="t" style="left:973px;top:474px;font-size:5.5px;">dB</span><span class="t" style="left:863px;top:528.5px;font-size:5.5px;">ms</span><span class="t" style="left:895px;top:528.5px;font-size:5.5px;">ms</span><span class="t" style="left:929px;top:528.5px;font-size:5.5px;">dB</span><span class="t" style="left:974px;top:528.5px;font-size:5.5px;">s</span><div style="left:846.5px;top:484.5px;width:22px;height:9.5px;background:#fff;"></div><span class="t" style="left:848px;top:484.55px;">+24.0</span><div style="left:878px;top:484.5px;width:22px;height:9.5px;background:#fff;"></div><span class="t" style="left:879.5px;top:484.55px;">+24.0</span><div style="left:911px;top:484.5px;width:22px;height:9.5px;background:#fff;"></div><span class="t" style="left:912.5px;top:484.55px;">2.0</span><div style="left:953.5px;top:484.5px;width:22px;height:9.5px;background:#fff;"></div><span class="t" style="left:955px;top:484.55px;">-80.0</span><div style="left:846.5px;top:537.5px;width:22px;height:9.5px;background:#fff;"></div><span class="t" style="left:848px;top:537.55px;">20.0</span><div style="left:878px;top:537.5px;width:22px;height:9.5px;background:#fff;"></div><span class="t" style="left:879.5px;top:537.55px;">200.0</span><div style="left:911px;top:537.5px;width:22px;height:9.5px;background:#fff;"></div><span class="t" style="left:912.5px;top:537.55px;">0.0</span><div style="left:953.5px;top:537.5px;width:22px;height:9.5px;background:#fff;"></div><span class="t" style="left:955px;top:537.55px;">5</span><div style="left:847px;top:495.5px;width:20px;height:3px;background:#bdbdbd;"></div><div style="left:954px;top:495.5px;width:20px;height:3px;background:#bdbdbd;"></div><svg style="left:999px;top:448.5px" width="64.5" height="100" viewBox="0 0 64.5 100"><rect width="64.5" height="100" fill="#1c1c1c"/><path d="M13 6.5H64.5" stroke="#444" stroke-width=".6" stroke-dasharray="1 1"/><text x="12" y="8" font-size="4.2" fill="#e8e8e8" text-anchor="end" font-family="Liberation Sans,sans-serif">20</text><path d="M13 14.7H64.5" stroke="#444" stroke-width=".6" stroke-dasharray="1 1"/><text x="12" y="16.2" font-size="4.2" fill="#e8e8e8" text-anchor="end" font-family="Liberation Sans,sans-serif">10</text><path d="M13 22.9H64.5" stroke="#444" stroke-width=".6" stroke-dasharray="1 1"/><text x="12" y="24.4" font-size="4.2" fill="#e8e8e8" text-anchor="end" font-family="Liberation Sans,sans-serif">0</text><path d="M13 31.1H64.5" stroke="#444" stroke-width=".6" stroke-dasharray="1 1"/><text x="12" y="32.6" font-size="4.2" fill="#e8e8e8" text-anchor="end" font-family="Liberation Sans,sans-serif">-10</text><path d="M13 39.3H64.5" stroke="#444" stroke-width=".6" stroke-dasharray="1 1"/><text x="12" y="40.8" font-size="4.2" fill="#e8e8e8" text-anchor="end" font-family="Liberation Sans,sans-serif">-20</text><path d="M13 47.5H64.5" stroke="#444" stroke-width=".6" stroke-dasharray="1 1"/><text x="12" y="49" font-size="4.2" fill="#e8e8e8" text-anchor="end" font-family="Liberation Sans,sans-serif">-30</text><path d="M13 55.7H64.5" stroke="#444" stroke-width=".6" stroke-dasharray="1 1"/><text x="12" y="57.2" font-size="4.2" fill="#e8e8e8" text-anchor="end" font-family="Liberation Sans,sans-serif">-40</text><path d="M13 63.9H64.5" stroke="#444" stroke-width=".6" stroke-dasharray="1 1"/><text x="12" y="65.4" font-size="4.2" fill="#e8e8e8" text-anchor="end" font-family="Liberation Sans,sans-serif">-50</text><path d="M13 72.1H64.5" stroke="#444" stroke-width=".6" stroke-dasharray="1 1"/><text x="12" y="73.6" font-size="4.2" fill="#e8e8e8" text-anchor="end" font-family="Liberation Sans,sans-serif">-60</text><path d="M13 80.3H64.5" stroke="#444" stroke-width=".6" stroke-dasharray="1 1"/><text x="12" y="81.8" font-size="4.2" fill="#e8e8e8" text-anchor="end" font-family="Liberation Sans,sans-serif">-70</text><path d="M13 88.5H64.5" stroke="#444" stroke-width=".6" stroke-dasharray="1 1"/><text x="12" y="90" font-size="4.2" fill="#e8e8e8" text-anchor="end" font-family="Liberation Sans,sans-serif">-80</text><path d="M11.8 2V92" stroke="#444" stroke-width=".6" stroke-dasharray="1 1"/><text x="11.8" y="96.500" font-size="4.200" fill="#e8e8e8" text-anchor="middle" font-family="Liberation Sans,sans-serif">-80</text><path d="M28.4 2V92" stroke="#444" stroke-width=".6" stroke-dasharray="1 1"/><text x="28.4" y="96.500" font-size="4.200" fill="#e8e8e8" text-anchor="middle" font-family="Liberation Sans,sans-serif">-60</text><path d="M45 2V92" stroke="#444" stroke-width=".6" stroke-dasharray="1 1"/><text x="45" y="96.500" font-size="4.200" fill="#e8e8e8" text-anchor="middle" font-family="Liberation Sans,sans-serif">-40</text><path d="M61.6 2V92" stroke="#444" stroke-width=".6" stroke-dasharray="1 1"/><text x="61.6" y="96.500" font-size="4.200" fill="#e8e8e8" text-anchor="middle" font-family="Liberation Sans,sans-serif">-20</text><path d="M5.400 95L64.500 35.500" stroke="#c8303a" stroke-width="1.2" fill="none"/></svg><div style="left:1064px;top:433px;width:11.5px;height:131.5px;background:#f0f0f0;"></div><div style="left:1065px;top:443px;width:9.5px;height:9px;background:#cdcdcd;"></div><svg style="left:1066.5px;top:435.5px" width="6" height="6"><path d="M1 4L3 2l2 2" stroke="#222" stroke-width="1.2" fill="none"/></svg><svg style="left:1066.5px;top:557px" width="6" height="6"><path d="M1 2l2 2l2 -2" stroke="#222" stroke-width="1.2" fill="none"/></svg><div style="left:722px;top:555.5px;width:342px;height:9px;background:#4a5560;"></div><div style="left:722px;top:565px;width:354px;height:9.5px;background:#f0f0f0;"></div><div style="left:731px;top:566px;width:24px;height:7.5px;background:#cdcdcd;"></div><svg style="left:724px;top:567px" width="6" height="6"><path d="M4 1L2 3l2 2" stroke="#222" stroke-width="1.2" fill="none"/></svg><svg style="left:1058px;top:567px" width="6" height="6"><path d="M2 1l2 2l-2 2" stroke="#222" stroke-width="1.2" fill="none"/></svg><div style="left:12px;top:131px;width:704.5px;height:438.5px;background:linear-gradient(90deg,rgba(150,185,215,0) 40%,rgba(150,185,215,.45)),linear-gradient(#b2c6db,#c6d7e9 9px,#dbe6f2 18px,#d3e1ef);border:1px solid #6f88a2;border-radius:3px 3px 1px 1px;"></div><div style="left:17.5px;top:138px;width:8.5px;height:8.5px;border:1.5px solid #1fb8b0;background:#4cccc4;"></div><span class="t" style="left:29px;top:137.5px;color:#111;">Beam Steering</span><div style="left:655.5px;top:136.5px;width:17px;height:11px;border:1px solid #7f9ab8;background:linear-gradient(#b9cde2,#8fadcc 50%,#a4bdd8);border-radius:2px;"></div><div style="left:660.5px;top:142px;width:7px;height:2.5px;border:0.5px solid #668;background:#fff;border-radius:1px;"></div><div style="left:673.5px;top:136.5px;width:17px;height:11px;border:1px solid #8fa8c2;background:linear-gradient(#d3e0ee,#b4c8de 50%,#c4d5e7);border-radius:2px;"></div><div style="left:678.5px;top:139px;width:7px;height:6px;border:1px solid #778;background:#e8eef5;"></div><div style="left:692px;top:136.5px;width:19px;height:11px;border:1px solid #8a3a28;background:linear-gradient(#e89a84,#d8482c 50%,#c63a20);border-radius:2px;"></div><span class="t" style="left:698.5px;top:137px;color:#fff;font-weight:bold;font-size:7px;">x</span><div style="left:17px;top:149px;width:694px;height:414px;background:#f0f0f0;"></div><div style="left:18.5px;top:150px;width:71px;height:291.5px;background:#fff;border:1px solid #222;border-right-color:#999;border-bottom-color:#999;"></div><div style="left:24.5px;top:152px;width:64.5px;height:10px;overflow:hidden;"><span class="t s" style="left:0;top:0.5px">Id</span></div><div style="left:40px;top:152px;width:49px;height:10px;overflow:hidden;"><span class="t s" style="left:0;top:0.5px">Name</span></div><div style="left:75px;top:152px;width:14px;height:10px;overflow:hidden;"><span class="t s" style="left:0;top:0.5px">Type</span></div><div style="left:19.5px;top:163.8px;width:69px;height:11.6px;background:#2f8eea;overflow:hidden;"><span class="t s w" style="left:5px;top:1px">4</span><span class="t s w" style="left:20.5px;top:1px">DLI-230...</span><span class="t s w" style="left:55.5px;top:1px">DLI-230</span></div><div style="left:19.5px;top:432px;width:69px;height:8.5px;background:#f0f0f0;"></div><div style="left:28px;top:432.5px;width:30px;height:7.5px;background:#cdcdcd;"></div><svg style="left:21px;top:433.3px" width="6" height="6"><path d="M4 1L2 3l2 2" stroke="#222" stroke-width="1.2" fill="none"/></svg><svg style="left:82px;top:433.3px" width="6" height="6"><path d="M2 1l2 2l-2 2" stroke="#222" stroke-width="1.2" fill="none"/></svg><div style="left:18.5px;top:446px;width:71px;height:116.5px;background:#fff;border:1px solid #222;border-right-color:#999;border-bottom-color:#999;"></div><span class="t s" style="left:25px;top:448.4px;">Visible</span><span class="t s" style="left:53.5px;top:448.4px;">Listener</span><div style="left:46.8px;top:447px;width:0.8px;height:37px;background:#ddd;"></div><div style="left:80.8px;top:447px;width:0.8px;height:37px;background:#e4e4e4;"></div><div style="left:19.5px;top:459.6px;width:69px;height:11.6px;background:#2f8eea;"></div><div style="left:19.5px;top:483.6px;width:69px;height:0.8px;background:#ddd;"></div><div style="left:30.5px;top:462px;width:6.5px;height:6.5px;background:#fff;border:1px solid #333;"></div><svg style="left:31.5px;top:463px" width="4.5" height="4.5" viewBox="0 0 5 5"><path d="M.5 2.500L2 4L4.500 .5" stroke="#222" stroke-width="1" fill="none"/></svg><div style="left:30.5px;top:474.3px;width:6.5px;height:6.5px;background:#fff;border:1px solid #333;"></div><svg style="left:31.5px;top:475.3px" width="4.5" height="4.5" viewBox="0 0 5 5"><path d="M.5 2.500L2 4L4.500 .5" stroke="#222" stroke-width="1" fill="none"/></svg><span class="t s w" style="left:57px;top:460.4px;">Floor</span><span class="t s" style="left:53px;top:472.7px;">Balcony</span><div style="left:19.5px;top:552.5px;width:69px;height:9px;background:#f0f0f0;"></div><div style="left:28px;top:553px;width:30px;height:7.5px;background:#cdcdcd;"></div><svg style="left:21px;top:554px" width="6" height="6"><path d="M4 1L2 3l2 2" stroke="#222" stroke-width="1.2" fill="none"/></svg><svg style="left:82px;top:554px" width="6" height="6"><path d="M2 1l2 2l-2 2" stroke="#222" stroke-width="1.2" fill="none"/></svg><div style="left:93.5px;top:149px;width:485px;height:229.5px;border:1px solid #fff;border-bottom-color:#b4b4b4;border-right:0;"></div><div style="left:93.5px;top:379px;width:485px;height:183.5px;border:1px solid #fff;border-bottom-color:#b4b4b4;border-right:0;"></div><span class="t s" style="left:98px;top:154.5px;">Z [m]</span><span class="t s" style="left:117px;top:154.5px;font-weight:bold;color:#111;">ID 4 - DLI-230 R</span><span class="t s" style="right:997px;top:352.5px;">0</span><div style="left:108.5px;top:357.5px;width:4.5px;height:1px;background:#333;"></div><span class="t s" style="right:997px;top:326.9px;">1</span><div style="left:108.5px;top:331.9px;width:4.5px;height:1px;background:#333;"></div><span class="t s" style="right:997px;top:301.3px;">2</span><div style="left:108.5px;top:306.3px;width:4.5px;height:1px;background:#333;"></div><span class="t s" style="right:997px;top:275.7px;">3</span><div style="left:108.5px;top:280.7px;width:4.5px;height:1px;background:#333;"></div><span class="t s" style="right:997px;top:250.1px;">4</span><div style="left:108.5px;top:255.1px;width:4.5px;height:1px;background:#333;"></div><span class="t s" style="right:997px;top:224.5px;">5</span><div style="left:108.5px;top:229.5px;width:4.5px;height:1px;background:#333;"></div><span class="t s" style="right:997px;top:198.9px;">6</span><div style="left:108.5px;top:203.9px;width:4.5px;height:1px;background:#333;"></div><span class="t s" style="right:997px;top:173.3px;">7</span><div style="left:108.5px;top:178.3px;width:4.5px;height:1px;background:#333;"></div><span class="t s" style="left:63px;width:100px;text-align:center;top:362px;">0</span><span class="t s" style="left:63px;width:100px;text-align:center;top:550.5px;">0</span><div style="left:112.5px;top:358px;width:1px;height:2.5px;background:#333;"></div><span class="t s" style="left:88.7px;width:100px;text-align:center;top:362px;">1</span><span class="t s" style="left:88.7px;width:100px;text-align:center;top:550.5px;">1</span><div style="left:138.2px;top:358px;width:1px;height:2.5px;background:#333;"></div><span class="t s" style="left:114.4px;width:100px;text-align:center;top:362px;">2</span><span class="t s" style="left:114.4px;width:100px;text-align:center;top:550.5px;">2</span><div style="left:163.9px;top:358px;width:1px;height:2.5px;background:#333;"></div><span class="t s" style="left:140.1px;width:100px;text-align:center;top:362px;">3</span><span class="t s" style="left:140.1px;width:100px;text-align:center;top:550.5px;">3</span><div style="left:189.6px;top:358px;width:1px;height:2.5px;background:#333;"></div><span class="t s" style="left:165.8px;width:100px;text-align:center;top:362px;">4</span><span class="t s" style="left:165.8px;width:100px;text-align:center;top:550.5px;">4</span><div style="left:215.3px;top:358px;width:1px;height:2.5px;background:#333;"></div><span class="t s" style="left:191.5px;width:100px;text-align:center;top:362px;">5</span><span class="t s" style="left:191.5px;width:100px;text-align:center;top:550.5px;">5</span><div style="left:241px;top:358px;width:1px;height:2.5px;background:#333;"></div><span class="t s" style="left:217.2px;width:100px;text-align:center;top:362px;">6</span><span class="t s" style="left:217.2px;width:100px;text-align:center;top:550.5px;">6</span><div style="left:266.7px;top:358px;width:1px;height:2.5px;background:#333;"></div><span class="t s" style="left:242.9px;width:100px;text-align:center;top:362px;">7</span><span class="t s" style="left:242.9px;width:100px;text-align:center;top:550.5px;">7</span><div style="left:292.4px;top:358px;width:1px;height:2.5px;background:#333;"></div><span class="t s" style="left:268.6px;width:100px;text-align:center;top:362px;">8</span><span class="t s" style="left:268.6px;width:100px;text-align:center;top:550.5px;">8</span><div style="left:318.1px;top:358px;width:1px;height:2.5px;background:#333;"></div><span class="t s" style="left:294.3px;width:100px;text-align:center;top:362px;">9</span><span class="t s" style="left:294.3px;width:100px;text-align:center;top:550.5px;">9</span><div style="left:343.8px;top:358px;width:1px;height:2.5px;background:#333;"></div><span class="t s" style="left:320px;width:100px;text-align:center;top:362px;">10</span><span class="t s" style="left:320px;width:100px;text-align:center;top:550.5px;">10</span><div style="left:369.5px;top:358px;width:1px;height:2.5px;background:#333;"></div><span class="t s" style="left:345.7px;width:100px;text-align:center;top:362px;">11</span><span class="t s" style="left:345.7px;width:100px;text-align:center;top:550.5px;">11</span><div style="left:395.2px;top:358px;width:1px;height:2.5px;background:#333;"></div><span class="t s" style="left:371.4px;width:100px;text-align:center;top:362px;">12</span><span class="t s" style="left:371.4px;width:100px;text-align:center;top:550.5px;">12</span><div style="left:420.9px;top:358px;width:1px;height:2.5px;background:#333;"></div><span class="t s" style="left:397.1px;width:100px;text-align:center;top:362px;">13</span><span class="t s" style="left:397.1px;width:100px;text-align:center;top:550.5px;">13</span><div style="left:446.6px;top:358px;width:1px;height:2.5px;background:#333;"></div><span class="t s" style="left:422.8px;width:100px;text-align:center;top:362px;">14</span><span class="t s" style="left:422.8px;width:100px;text-align:center;top:550.5px;">14</span><div style="left:472.3px;top:358px;width:1px;height:2.5px;background:#333;"></div><span class="t s" style="left:448.5px;width:100px;text-align:center;top:362px;">15</span><span class="t s" style="left:448.5px;width:100px;text-align:center;top:550.5px;">15</span><div style="left:498px;top:358px;width:1px;height:2.5px;background:#333;"></div><span class="t s" style="left:474.2px;width:100px;text-align:center;top:362px;">16</span><span class="t s" style="left:474.2px;width:100px;text-align:center;top:550.5px;">16</span><div style="left:523.7px;top:358px;width:1px;height:2.5px;background:#333;"></div><span class="t s" style="left:552px;top:362px;">X [m]</span><span class="t s" style="left:552px;top:550.5px;">X [m]</span><span class="t s" style="left:98px;top:384px;">SPL [dB]</span><div class="hs" style="left:113px;top:167px;width:431.5px;height:191px;background:#000;overflow:hidden;"><i style="left:0px;width:2.5px;background:linear-gradient(#000 0.3%,#000 99.7%)"></i><i style="left:2px;width:2.5px;background:linear-gradient(#000 0.3%,#000 45.3%,#0000a2 45.8%,#001a7f 46.3%,#0a6e07 46.9%,#8acc00 47.4%,#ffd000 47.9%,#ff2400 48.4%,#f00 49%,#ff0300 70.9%,#ffaf00 71.5%,#a8da00 72%,#0f7905 72.5%,#001d78 73%,#000095 73.6%,#000 74.1%,#000 99.7%)"></i><i style="left:4px;width:2.5px;background:linear-gradient(#000 0.3%,#000 44.8%,#000020 45.3%,#0006de 45.8%,#003b39 46.3%,#1b9001 46.9%,#bce200 47.4%,#ffac00 47.9%,#ff0a00 48.4%,#f00 49%,#f00 70.9%,#ff7100 71.5%,#edf700 72%,#41a700 72.5%,#004a22 73%,#0009cd 73.6%,#00001e 74.1%,#000 74.6%,#000 99.7%)"></i><i style="left:6px;width:2.5px;background:linear-gradient(#000 0.3%,#000 44.8%,#0000ac 45.3%,#00148f 45.8%,#005a0a 46.3%,#4dae00 46.9%,#e6f400 47.4%,#ff8b00 47.9%,#f00 48.4%,#f00 70.9%,#ff3600 71.5%,#ffd100 72%,#97d200 72.5%,#107a05 73%,#002760 73.6%,#0000de 74.1%,#000 74.6%,#000 99.7%)"></i><i style="left:8px;width:2.5px;background:linear-gradient(#000 0.3%,#000 44.2%,#000032 44.8%,#0004e6 45.3%,#002f4d 45.8%,#0f7905 46.3%,#80c700 46.9%,#fff400 47.4%,#ff6a00 47.9%,#f00 48.4%,#ff0500 71.5%,#ff9700 72%,#def100 72.5%,#45a900 73%,#005512 73.6%,#00119e 74.1%,#000089 74.6%,#000 75.1%,#000 99.7%)"></i><i style="left:10px;width:2.5px;background:linear-gradient(#000 0.3%,#000 44.2%,#00a 44.8%,#0011a0 45.3%,#004a21 45.8%,#1d9300 46.3%,#aadb00 46.9%,#ffd400 47.4%,#ff4e00 47.9%,#f00 48.4%,#f00 71.5%,#ff5900 72%,#ffe000 72.5%,#99d300 73%,#168503 73.6%,#00393c 74.1%,#0008d3 74.6%,#000045 75.1%,#000 75.7%,#000 99.7%)"></i><i style="left:12px;width:2.5px;background:linear-gradient(#000 0.3%,#000 43.7%,#00003a 44.2%,#0003f0 44.8%,#002564 45.3%,#056508 45.8%,#4aac00 46.3%,#ceea00 46.9%,#ffb700 47.4%,#ff3400 47.9%,#f00 48.4%,#f00 71.5%,#ff2600 72%,#ffa900 72.5%,#dbf000 73%,#54b100 73.6%,#066608 74.1%,#00226a 74.6%,#0000fc 75.1%,#00000e 75.7%,#000 76.2%,#000 99.7%)"></i><i style="left:14px;width:2.5px;background:linear-gradient(#000 0.3%,#000 43.7%,#0000a5 44.2%,#000eb0 44.8%,#003d35 45.3%,#127e04 45.8%,#75c200 46.3%,#eef800 46.9%,#ff9e00 47.4%,#ff1f00 47.9%,#f00 48.4%,#f00 72%,#ffe800 73%,#a0d600 73.6%,#1c9201 74.1%,#004d1e 74.6%,#001395 75.1%,#0000c4 75.7%,#000 76.2%,#000 99.7%)"></i><i style="left:16px;width:2.5px;background:linear-gradient(#000 0.3%,#000 43.2%,#00003d 43.7%,#0001fa 44.2%,#001c79 44.8%,#005413 45.3%,#1d9500 45.8%,#9bd400 46.3%,#fff300 46.9%,#ff0d00 47.9%,#f00 48.4%,#f00 72%,#ff4000 72.5%,#ffb300 73%,#def100 73.6%,#68bb00 74.1%,#0f7905 74.6%,#00393b 75.1%,#000cb9 75.7%,#000097 76.2%,#000 76.7%,#000 99.7%)"></i><i style="left:18px;width:2.5px;background:linear-gradient(#000 0.3%,#000 43.2%,#0000a0 43.7%,#000bbf 44.2%,#003247 44.8%,#096b07 45.3%,#46aa00 45.8%,#bbe200 46.3%,#ffd900 46.9%,#f00 47.9%,#f00 72%,#ff1600 72.5%,#ffe900 73.6%,#acdc00 74.1%,#34a100 74.6%,#046209 75.1%,#00295b 75.7%,#0007d9 76.2%,#000 77.2%,#000 99.7%)"></i><i style="left:20px;width:2.5px;background:linear-gradient(#000 0.3%,#000 42.7%,#000041 43.2%,#0000fb 43.7%,#00158a 44.2%,#004826 44.8%,#148203 45.3%,#6cbd00 45.8%,#d8ee00 46.3%,#ffc100 46.9%,#f50 47.4%,#f00 47.9%,#f00 72.5%,#ff5200 73%,#ffb800 73.6%,#e4f400 74.1%,#7dc500 74.6%,#188a02 75.1%,#004f1a 75.7%,#001b7b 76.2%,#0002f4 76.7%,#000051 77.2%,#000 77.7%,#000 99.7%)"></i><i style="left:22px;width:2.5px;background:linear-gradient(#000 0.3%,#000 42.7%,#00009d 43.2%,#0009ca 43.7%,#00295b 44.2%,#015c0a 44.8%,#1e9500 45.3%,#8fcf00 45.8%,#f2fa00 46.3%,#ffab00 46.9%,#ff4100 47.4%,#f00 47.9%,#f00 72.5%,#ff2800 73%,#ffe700 74.1%,#bae100 74.6%,#51b000 75.1%,#0f7705 75.7%,#004130 76.2%,#001295 76.7%,#0000ef 77.2%,#00003a 77.7%,#000 78.3%,#000 99.7%)"></i><i style="left:24px;width:2.5px;background:linear-gradient(#000 0.3%,#000 42.1%,#000046 42.7%,#0000f3 43.2%,#001298 43.7%,#003d35 44.2%,#0c7106 44.8%,#43a900 45.3%,#addc00 45.8%,#fff300 46.3%,#ff9700 46.9%,#ff2f00 47.4%,#f00 47.9%,#f00 72.5%,#ff0600 73%,#ffb900 74.1%,#eef800 74.6%,#93d100 75.1%,#2a9c00 75.7%,#066608 76.2%,#003444 76.7%,#000fac 77.2%,#0000d4 77.7%,#000027 78.3%,#000 78.8%,#000 99.7%)"></i><i style="left:26px;width:2.5px;background:linear-gradient(#000 0.3%,#000 42.1%,#00009d 42.7%,#0008d2 43.2%,#00226a 43.7%,#005018 44.2%,#158503 44.8%,#66ba00 45.3%,#c7e700 45.8%,#fd0 46.3%,#ff1f00 47.4%,#f00 47.9%,#f00 73%,#ff3500 73.6%,#ffe100 74.6%,#c9e800 75.1%,#188b02 76.2%,#00570e 76.7%,#00295a 77.2%,#000bbf 77.7%,#0000bd 78.3%,#000017 78.8%,#000 79.3%,#000 99.7%)"></i><i style="left:28px;width:2.5px;background:linear-gradient(#000 0.3%,#000 41.6%,#00004e 42.1%,#0000ef 42.7%,#0010a2 43.2%,#003542 43.7%,#056408 44.2%,#209700 44.8%,#86ca00 45.3%,#e0f200 45.8%,#ffc800 46.3%,#ff1200 47.4%,#f00 47.9%,#f00 73%,#ff1300 73.6%,#ffb500 74.6%,#fafd00 75.1%,#aada00 75.7%,#4eae00 76.2%,#127d04 76.7%,#004d1e 77.2%,#00226b 77.7%,#0009cd 78.3%,#0000af 78.8%,#001 79.3%,#000 79.8%,#000 99.7%)"></i><i style="left:30px;width:2.5px;background:linear-gradient(#000 0.3%,#000 41.1%,#000006 41.6%,#0000a0 42.1%,#0007d8 42.7%,#001d77 43.2%,#004726 43.7%,#0e7705 44.2%,#42a800 44.8%,#a2d700 45.3%,#f6fb00 45.8%,#ffb500 46.3%,#ff0600 47.4%,#f00 47.9%,#f00 73.6%,#ff3900 74.1%,#ffd400 75.1%,#def100 75.7%,#8fce00 76.2%,#34a100 76.7%,#0c7206 77.2%,#004529 77.7%,#001d77 78.3%,#0007d6 78.8%,#0000a8 79.3%,#001 79.8%,#000 80.4%,#000 99.7%)"></i><i style="left:32px;width:2.5px;background:linear-gradient(#000 0.3%,#000 41.1%,#000057 41.6%,#0000ed 42.1%,#000fab 42.7%,#002e4f 43.2%,#00580d 43.7%,#178802 44.2%,#62b800 44.8%,#bae100 45.3%,#fff400 45.8%,#f00 47.4%,#f00 73.6%,#ff1600 74.1%,#fff000 75.7%,#c5e600 76.2%,#1e9600 77.2%,#086907 77.7%,#003f32 78.3%,#001981 78.8%,#0006db 79.3%,#0000a5 79.8%,#000015 80.4%,#000 80.9%,#000 99.7%)"></i><i style="left:34px;width:2.5px;background:linear-gradient(#000 0.3%,#000 40.6%,#000014 41.1%,#0000a4 41.6%,#0006dc 42.1%,#001981 42.7%,#003f32 43.2%,#086b07 43.7%,#239800 44.2%,#d0eb00 45.3%,#ffe000 45.8%,#ff9500 46.3%,#ff3e00 46.9%,#f00 47.4%,#f00 74.1%,#ff3800 74.6%,#ffc500 75.7%,#f5fb00 76.2%,#afdd00 76.7%,#198d02 77.7%,#046109 78.3%,#003a3a 78.8%,#001688 79.3%,#0005e0 79.8%,#0000a4 80.4%,#00001a 80.9%,#000 81.4%,#000 99.7%)"></i><i style="left:36px;width:2.5px;background:linear-gradient(#000 0.3%,#000 40.6%,#00005f 41.1%,#0000ec 41.6%,#000eb1 42.1%,#00295b 42.7%,#005019 43.2%,#117c04 43.7%,#42a800 44.2%,#99d300 44.8%,#e5f400 45.3%,#ffce00 45.8%,#ff3000 46.9%,#f00 47.4%,#f00 74.1%,#ff1900 74.6%,#ffdf00 76.2%,#ddf100 76.7%,#99d300 77.2%,#4bac00 77.7%,#158403 78.3%,#005a0a 78.8%,#003542 79.3%,#001390 79.8%,#0005e5 80.4%,#0000a3 80.9%,#00001d 81.4%,#000 81.9%,#000 99.7%)"></i><i style="left:38px;width:2.5px;background:linear-gradient(#000 0.3%,#000 40.1%,#000021 40.6%,#0000a8 41.1%,#0005e0 41.6%,#00158a 42.1%,#00393c 42.7%,#036009 43.2%,#198b02 43.7%,#5eb600 44.2%,#afdd00 44.8%,#f8fc00 45.3%,#ffbe00 45.8%,#ff2400 46.9%,#f00 47.4%,#f00 74.6%,#ff3800 75.1%,#fff600 76.7%,#c9e800 77.2%,#38a300 78.3%,#117c04 78.8%,#005412 79.3%,#003149 79.8%,#001296 80.4%,#0004e7 80.9%,#0000a4 81.4%,#000023 81.9%,#000 82.5%,#000 99.7%)"></i><i style="left:40px;width:2.5px;background:linear-gradient(#000 0.3%,#000 40.1%,#000068 40.6%,#0000eb 41.1%,#000db7 41.6%,#002466 42.1%,#004824 42.7%,#0b7006 43.2%,#269a00 43.7%,#c4e600 44.8%,#fff400 45.3%,#ff1a00 46.9%,#f00 47.4%,#f00 74.6%,#ff1a00 75.1%,#ffce00 76.7%,#f4fa00 77.2%,#74c100 78.3%,#299c00 78.8%,#0e7605 79.3%,#005118 79.8%,#002e4e 80.4%,#001298 80.9%,#0004e7 81.4%,#0000a9 81.9%,#00002d 82.5%,#000 83%,#000 99.7%)"></i><i style="left:42px;width:2.5px;background:linear-gradient(#000 0.3%,#000 39.5%,#00002d 40.1%,#0000ac 40.6%,#0005e2 41.1%,#001391 41.6%,#003345 42.1%,#00570f 42.7%,#138004 43.2%,#42a800 43.7%,#d7ee00 44.8%,#ffe300 45.3%,#ff1000 46.9%,#f00 47.4%,#ff0200 75.1%,#ff3400 75.7%,#ffe100 77.2%,#e3f300 77.7%,#a8da00 78.3%,#1e9500 79.3%,#0c7106 79.8%,#004e1d 80.4%,#002d52 80.9%,#001299 81.4%,#0005e5 81.9%,#0000b0 82.5%,#000039 83%,#000 83.5%,#000 99.7%)"></i><i style="left:44px;width:2.5px;background:linear-gradient(#000 0.3%,#000 39.5%,#000070 40.1%,#0000ec 40.6%,#000cbc 41.1%,#00216f 41.6%,#00422e 42.1%,#066708 42.7%,#1a8e01 43.2%,#a6d900 44.2%,#e9f600 44.8%,#ffd300 45.3%,#ff0700 46.9%,#f00 47.4%,#f00 75.1%,#ff1b00 75.7%,#fff400 77.7%,#d3ec00 78.3%,#99d300 78.8%,#1b9001 79.8%,#096d07 80.4%,#004b21 80.9%,#002b56 81.4%,#00119b 81.9%,#0005e4 82.5%,#0000b6 83%,#000043 83.5%,#000 84%,#000 99.7%)"></i><i style="left:46px;width:2.5px;background:linear-gradient(#000 0.3%,#000 39%,#000039 39.5%,#0000b1 40.1%,#0005e4 40.6%,#001297 41.1%,#002e4f 41.6%,#005019 42.1%,#0e7605 42.7%,#299b00 43.2%,#75c100 43.7%,#fafd00 44.8%,#ffc400 45.3%,#f00 46.9%,#f00 75.1%,#ff0700 75.7%,#ff3400 76.2%,#ffd200 77.7%,#f7fc00 78.3%,#88cb00 79.3%,#47ab00 79.8%,#188902 80.4%,#076708 80.9%,#004726 81.4%,#00295b 81.9%,#00119e 82.5%,#0005e5 83%,#0000b9 83.5%,#000049 84%,#000 84.6%,#000 99.7%)"></i><i style="left:48px;width:2.5px;background:linear-gradient(#000 0.3%,#000 38.5%,#000005 39%,#0000ed 40.1%,#000bbf 40.6%,#001d76 41.1%,#003c36 41.6%,#025e09 42.1%,#158403 42.7%,#43a800 43.2%,#cce900 44.2%,#fff400 44.8%,#ff3200 46.3%,#f00 46.9%,#f00 75.7%,#ff1f00 76.2%,#ffe600 78.3%,#e5f400 78.8%,#77c200 79.8%,#38a300 80.4%,#148303 80.9%,#046109 81.4%,#00432d 81.9%,#002662 82.5%,#0010a3 83%,#0004e7 83.5%,#0000b9 84%,#00004c 84.6%,#000 85.1%,#000 99.7%)"></i><i style="left:50px;width:2.5px;background:linear-gradient(#000 0.3%,#000 38.5%,#000043 39%,#0000b5 39.5%,#0004e5 40.1%,#00119d 40.6%,#002b57 41.1%,#004a22 41.6%,#096d07 42.1%,#1b9101 42.7%,#a0d600 43.7%,#ddf100 44.2%,#ffe500 44.8%,#ff2800 46.3%,#f00 46.9%,#f00 75.7%,#ff0e00 76.2%,#fff900 78.8%,#a0d600 79.8%,#289b00 80.9%,#015c0a 81.9%,#003f33 82.5%,#002368 83%,#0004ea 84%,#0000b8 84.6%,#00004e 85.1%,#000 85.6%,#000 99.7%)"></i><i style="left:52px;width:2.5px;background:linear-gradient(#000 0.3%,#000 38%,#000012 38.5%,#0000ef 39.5%,#000bc2 40.1%,#001b7d 40.6%,#00383e 41.1%,#00570e 41.6%,#107a05 42.1%,#2c9d00 42.7%,#b2de00 43.7%,#edf700 44.2%,#ffd600 44.8%,#ff1f00 46.3%,#f00 46.9%,#f00 75.7%,#ff0100 76.2%,#ff2600 76.7%,#ffdc00 78.8%,#f3fa00 79.3%,#90cf00 80.4%,#1d9400 81.4%,#00570f 82.5%,#003b39 83%,#00216f 83.5%,#0003ed 84.6%,#0000b5 85.1%,#00004f 85.6%,#000 86.1%,#000 99.7%)"></i><i style="left:54px;width:2.5px;background:linear-gradient(#000 0.3%,#000 38%,#00004d 38.5%,#0000ba 39%,#0004e6 39.5%,#0010a1 40.1%,#00275f 40.6%,#00452a 41.1%,#056508 41.6%,#178702 42.1%,#44a900 42.7%,#87cb00 43.2%,#fcfe00 44.2%,#ffc800 44.8%,#ff1600 46.3%,#f00 46.9%,#f00 62%,#ff2800 62.6%,#ff3200 63.1%,#f00 63.6%,#f00 76.2%,#ff1700 76.7%,#ff3f00 77.2%,#ffef00 79.3%,#e1f200 79.8%,#7fc600 80.9%,#46aa00 81.4%,#198d02 81.9%,#0b6f06 82.5%,#005216 83%,#00373f 83.5%,#001d76 84%,#0002f1 85.1%,#0000b2 85.6%,#00004e 86.1%,#000 86.6%,#000 99.7%)"></i><i style="left:56px;width:2.5px;background:linear-gradient(#000 0.3%,#000 37.4%,#00001f 38%,#0000f1 39%,#000ac4 39.5%,#001882 40.1%,#034 40.6%,#005217 41.1%,#0c7206 41.6%,#1d9300 42.1%,#9bd400 43.2%,#d4ed00 43.7%,#fff200 44.2%,#ff0e00 46.3%,#f00 46.9%,#f00 62%,#ff5300 62.6%,#ff7900 63.1%,#ff3100 63.6%,#f00 64.1%,#f00 76.2%,#ff0b00 76.7%,#ff2e00 77.2%,#fcfe00 79.8%,#a2d700 80.9%,#36a200 81.9%,#168603 82.5%,#076908 83%,#004d1e 83.5%,#003246 84%,#001a7e 84.6%,#0001f6 85.6%,#0000ad 86.1%,#00004b 86.6%,#000 87.2%,#000 99.7%)"></i><i style="left:58px;width:2.5px;background:linear-gradient(#000 0.3%,#000 37.4%,#000057 38%,#0000bf 38.5%,#0004e6 39%,#002565 40.1%,#004130 40.6%,#025e09 41.1%,#137f04 41.6%,#319f00 42.1%,#e4f300 43.7%,#ffe400 44.2%,#ff0600 46.3%,#f00 46.9%,#f00 62%,#ff7400 62.6%,#ffb600 63.1%,#f70 63.6%,#ff2800 64.1%,#f00 64.7%,#ff0100 76.7%,#ff4600 77.7%,#ffe900 79.8%,#ebf600 80.4%,#92d000 81.4%,#279a00 82.5%,#046209 83.5%,#004825 84%,#002e4f 84.6%,#001786 85.1%,#0001fc 86.1%,#000048 87.2%,#000 87.7%,#000 99.7%)"></i><i style="left:60px;width:2.5px;background:linear-gradient(#000 0.3%,#000 36.9%,#00002a 37.4%,#0000f3 38.5%,#000ac6 39%,#001687 39.5%,#00304a 40.1%,#004d1e 40.6%,#096b07 41.1%,#198b02 41.6%,#47ab00 42.1%,#f3fa00 43.7%,#ffd600 44.2%,#f00 46.3%,#f00 62%,#ff8f00 62.6%,#ffe800 63.1%,#ffb700 63.6%,#ff1e00 64.7%,#f00 65.2%,#f00 76.7%,#ff1600 77.2%,#ff3600 77.7%,#fffa00 80.4%,#b0dd00 81.4%,#1d9300 83%,#015c0a 84%,#00432c 84.6%,#002b57 85.1%,#00148d 85.6%,#0000fb 86.6%,#004 87.7%,#000 88.2%,#000 99.7%)"></i><i style="left:62px;width:2.5px;background:linear-gradient(#000 0.3%,#000 36.9%,#0000c3 38%,#0004e6 38.5%,#00226b 39.5%,#003c36 40.1%,#00580d 40.6%,#1f9600 41.6%,#99d300 42.7%,#fffd00 43.7%,#ff9800 44.8%,#ff2700 45.8%,#f00 46.3%,#f00 61.5%,#ff0c00 62%,#ffa300 62.6%,#eef800 63.1%,#fff000 63.6%,#ff5800 64.7%,#ff1500 65.2%,#f00 65.7%,#f00 76.7%,#ff0d00 77.2%,#ff2a00 77.7%,#ffe300 80.4%,#f4fa00 80.9%,#a1d700 81.9%,#3fa700 83%,#198c02 83.5%,#00570f 84.6%,#00275f 85.6%,#001295 86.1%,#0009cd 86.6%,#0000f4 87.2%,#000040 88.2%,#000 88.7%,#000 99.7%)"></i><i style="left:64px;width:2.5px;background:linear-gradient(#000 0.3%,#000 36.4%,#000035 36.9%,#0000f5 38%,#000ac7 38.5%,#00158b 39%,#002d51 39.5%,#004824 40.1%,#056508 40.6%,#158303 41.1%,#35a200 41.6%,#ddf000 43.2%,#ffef00 43.7%,#ff1f00 45.8%,#f00 46.3%,#f00 61.5%,#ff1c00 62%,#ffb400 62.6%,#ceea00 63.1%,#d9ef00 63.6%,#ffda00 64.1%,#ff4800 65.2%,#ff0c00 65.7%,#f00 66.2%,#f00 76.7%,#ff0500 77.2%,#ff1f00 77.7%,#fff300 80.9%,#e5f400 81.4%,#93d000 82.5%,#319f00 83.5%,#168603 84%,#096c07 84.6%,#005216 85.1%,#003a3a 85.6%,#002468 86.1%,#0008d3 87.2%,#0000ec 87.7%,#00003b 88.7%,#000 89.3%,#000 99.7%)"></i><i style="left:66px;width:2.5px;background:linear-gradient(#000 0.3%,#000 35.9%,#00000b 36.4%,#0000c8 37.4%,#0004e6 38%,#002070 39%,#00393b 39.5%,#005413 40.1%,#1a8f01 41.1%,#85c900 42.1%,#ebf600 43.2%,#ffe200 43.7%,#ff1700 45.8%,#f00 46.3%,#f00 61.5%,#ff2d00 62%,#ffc400 62.6%,#b4df00 63.1%,#a8da00 63.6%,#f2f900 64.1%,#ffc200 64.7%,#ff3800 65.7%,#ff0200 66.2%,#f00 77.2%,#ff3200 78.3%,#fbfd00 81.4%,#84c900 83%,#239800 84%,#066608 85.1%,#004d1d 85.6%,#003640 86.1%,#0010a3 87.2%,#0007da 87.7%,#0000e3 88.2%,#000036 89.3%,#000 89.8%,#000 99.7%)"></i><i style="left:68px;width:2.5px;background:linear-gradient(#000 0.3%,#000 35.9%,#00003f 36.4%,#0000f8 37.4%,#000ac8 38%,#00148e 38.5%,#002b56 39%,#00452a 39.5%,#035f09 40.1%,#259a00 41.1%,#97d200 42.1%,#f9fc00 43.2%,#ffd500 43.7%,#ff0f00 45.8%,#f00 46.3%,#f00 61.5%,#ff3f00 62%,#ffd500 62.6%,#9fd600 63.1%,#77c200 63.6%,#c3e500 64.1%,#fff100 64.7%,#ff2900 66.2%,#f00 66.8%,#f00 77.2%,#ff1000 77.7%,#ff4500 78.8%,#ffed00 81.4%,#edf700 81.9%,#a1d700 83%,#1c9201 84.6%,#036009 85.6%,#003247 86.6%,#001d78 87.2%,#0005e0 88.2%,#0000db 88.7%,#000031 89.8%,#000 90.3%,#000 99.7%)"></i><i style="left:70px;width:2.5px;background:linear-gradient(#000 0.3%,#000 35.3%,#000018 35.9%,#00c 36.9%,#0004e5 37.4%,#001e74 38.5%,#003640 39%,#005019 39.5%,#096b07 40.1%,#178802 40.6%,#3aa400 41.1%,#a7d900 42.1%,#d7ee00 42.7%,#fff800 43.2%,#ff0800 45.8%,#f00 46.3%,#f00 61.5%,#ff4f00 62%,#ffe400 62.6%,#8bcd00 63.1%,#47ab00 63.6%,#e1f200 64.7%,#ffd600 65.2%,#ff5300 66.2%,#ff1c00 66.8%,#f00 67.3%,#f00 77.2%,#ff0a00 77.7%,#ff3a00 78.8%,#fffc00 81.9%,#93d100 83.5%,#39a300 84.6%,#198c02 85.1%,#005a0a 86.1%,#002e4f 87.2%,#001980 87.7%,#0004e7 88.7%,#0000d2 89.3%,#00002c 90.3%,#000 90.8%,#000 99.7%)"></i><i style="left:72px;width:2.5px;background:linear-gradient(#000 0.3%,#000 35.3%,#000049 35.9%,#0000fa 36.9%,#001390 38%,#00295b 38.5%,#005a0a 39.5%,#1c9201 40.6%,#85c900 41.6%,#e5f400 42.7%,#ffeb00 43.2%,#ff0100 45.8%,#f00 61.5%,#ff6000 62%,#fff200 62.6%,#79c300 63.1%,#1e9500 63.6%,#ff0 65.2%,#ff4100 66.8%,#f10 67.3%,#f00 67.8%,#f00 77.2%,#ff0500 77.7%,#ff4c00 79.3%,#ffe800 81.9%,#f4fa00 82.5%,#85ca00 84%,#2b9d00 85.1%,#168603 85.6%,#005610 86.6%,#002a58 87.7%,#001687 88.2%,#0003ed 89.3%,#0000ca 89.8%,#000026 90.8%,#000 91.4%,#000 99.7%)"></i><i style="left:74px;width:2.5px;background:linear-gradient(#000 0.3%,#000 34.8%,#000023 35.3%,#0000d1 36.4%,#0005e5 36.9%,#001d77 38%,#034 38.5%,#004c1f 39%,#066608 39.5%,#2b9d00 40.6%,#96d200 41.6%,#f2fa00 42.7%,#ffdf00 43.2%,#ff2400 45.3%,#f00 45.8%,#f00 61.5%,#ff7100 62%,#fcfe00 62.6%,#67ba00 63.1%,#158403 63.6%,#3aa400 64.1%,#91d000 64.7%,#dbf000 65.2%,#ffe000 65.7%,#ff6500 66.8%,#ff2f00 67.3%,#ff0600 67.8%,#f00 68.3%,#ff0200 77.7%,#ff4100 79.3%,#fff600 82.5%,#e7f500 83%,#a0d600 84%,#1f9600 85.6%,#076808 86.6%,#005117 87.2%,#002760 88.2%,#00148f 88.7%,#0002f3 89.8%,#0000c1 90.3%,#000020 91.4%,#000 91.9%,#000 99.7%)"></i><i style="left:76px;width:2.5px;background:linear-gradient(#000 0.3%,#000 34.8%,#0000fe 36.4%,#001393 37.4%,#00275f 38%,#00560f 39%,#198c02 40.1%,#40a700 40.6%,#a6d900 41.6%,#ff0 42.7%,#ffd300 43.2%,#ff1d00 45.3%,#f00 45.8%,#f00 61.5%,#ff8500 62%,#ecf700 62.6%,#53b000 63.1%,#0d7406 63.6%,#1c9101 64.1%,#bbe200 65.2%,#feff00 65.7%,#ff4d00 67.3%,#ff1e00 67.8%,#f00 68.3%,#f00 77.7%,#ff3800 79.3%,#ffe300 82.5%,#fbfd00 83%,#94d100 84.6%,#1b9001 86.1%,#046309 87.2%,#004d1e 87.7%,#002368 88.7%,#001296 89.3%,#0001fa 90.3%,#0000b9 90.8%,#00001a 91.9%,#000 92.4%,#000 99.7%)"></i><i style="left:78px;width:2.5px;background:linear-gradient(#000 0.3%,#000 34.3%,#00002f 34.8%,#0000d6 35.9%,#0005e3 36.4%,#001c7a 37.4%,#003148 38%,#004923 38.5%,#046109 39%,#1e9600 40.1%,#86ca00 41.1%,#e0f200 42.1%,#fff300 42.7%,#ff1600 45.3%,#f00 45.8%,#f00 61%,#ff0600 61.5%,#f90 62%,#daef00 62.6%,#3da500 63.1%,#066508 63.6%,#138104 64.1%,#4bad00 64.7%,#9ed500 65.2%,#e3f300 65.7%,#ffdb00 66.2%,#ff3500 67.8%,#ff0f00 68.3%,#f00 68.8%,#f00 77.7%,#ff1d00 78.8%,#ff4800 79.8%,#fff000 83%,#eef800 83.5%,#ceea00 84%,#87ca00 85.1%,#33a000 86.1%,#188b02 86.6%,#025d09 87.7%,#004824 88.2%,#034 88.7%,#00119e 89.8%,#0000fd 90.8%,#000014 92.4%,#000 92.9%,#000 99.7%)"></i><i style="left:80px;width:2.5px;background:linear-gradient(#000 0.3%,#000 33.8%,#00000b 34.3%,#0000fe 35.9%,#001394 36.9%,#002662 37.4%,#005314 38.5%,#168603 39.5%,#32a000 40.1%,#96d200 41.1%,#edf700 42.1%,#ffe700 42.7%,#ff0f00 45.3%,#f00 45.8%,#f00 61%,#ff1900 61.5%,#ffac00 62%,#c6e700 62.6%,#259a00 63.1%,#00580d 63.6%,#0c7106 64.1%,#2d9d00 64.7%,#81c800 65.2%,#cae800 65.7%,#fff400 66.2%,#ff4c00 67.8%,#f20 68.3%,#ff0300 68.8%,#f00 77.7%,#ff1900 78.8%,#ff3f00 79.8%,#fffd00 83.5%,#a0d600 85.1%,#269a00 86.6%,#00580d 88.2%,#002f4c 89.3%,#001d78 89.8%,#0007d5 90.8%,#0000f4 91.4%,#00000e 92.9%,#000 93.5%,#000 99.7%)"></i><i style="left:82px;width:2.5px;background:linear-gradient(#000 0.3%,#000 33.8%,#00003a 34.3%,#0000db 35.3%,#0005e2 35.9%,#001b7c 36.9%,#002f4c 37.4%,#025d09 38.5%,#1b9001 39.5%,#a5d800 41.1%,#f9fc00 42.1%,#ffdb00 42.7%,#ff0900 45.3%,#f00 45.8%,#f00 61%,#ff2e00 61.5%,#ffc100 62%,#b0dd00 62.6%,#1a8d01 63.1%,#004c1f 63.6%,#056308 64.1%,#1b9001 64.7%,#b2de00 65.7%,#f3fa00 66.2%,#ffce00 66.8%,#ff6200 67.8%,#ff3400 68.3%,#ff1200 68.8%,#f00 69.4%,#f00 77.7%,#ff1600 78.8%,#ff3800 79.8%,#f60 80.9%,#ffeb00 83.5%,#f5fb00 84%,#94d100 85.6%,#1d9400 87.2%,#086907 88.2%,#005413 88.7%,#002c54 89.8%,#001980 90.3%,#0006dc 91.4%,#0000ea 91.9%,#000007 93.5%,#000 94%,#000 99.7%)"></i><i style="left:84px;width:2.5px;background:linear-gradient(#000 0.3%,#000 33.2%,#000018 33.8%,#0000b7 34.8%,#0001fb 35.3%,#001295 36.4%,#003a3b 37.4%,#005019 38%,#076808 38.5%,#259a00 39.5%,#b3de00 41.1%,#fff900 42.1%,#ff0300 45.3%,#f00 45.8%,#f00 61%,#ff4700 61.5%,#ffd800 62%,#98d300 62.6%,#137f04 63.1%,#004031 63.6%,#00570e 64.1%,#158303 64.7%,#4eae00 65.2%,#9dd500 65.7%,#dff100 66.2%,#ffe200 66.8%,#ff4600 68.3%,#ff2100 68.8%,#ff0600 69.4%,#f00 69.9%,#f00 77.7%,#ff1300 78.8%,#ff4600 80.4%,#fff800 84%,#e9f600 84.6%,#aadb00 85.6%,#39a300 87.2%,#1a8f01 87.7%,#056408 88.7%,#004f1a 89.3%,#003c38 89.8%,#001687 90.8%,#0005e3 91.9%,#0000e0 92.4%,#000001 94%,#000 99.7%)"></i><i style="left:86px;width:2.5px;background:linear-gradient(#000 0.3%,#000 33.2%,#000045 33.8%,#0000e1 34.8%,#0005e0 35.3%,#001a7e 36.4%,#002e4f 36.9%,#005a0b 38%,#188b02 39%,#38a300 39.5%,#97d200 40.6%,#e9f500 41.6%,#fe0 42.1%,#ff2100 44.8%,#f00 45.3%,#f00 61%,#ff6400 61.5%,#fff200 62%,#7ac400 62.6%,#0b7006 63.1%,#034 63.6%,#004d1d 64.1%,#0f7805 64.7%,#38a300 65.2%,#89cb00 65.7%,#cdea00 66.2%,#fff400 66.8%,#ff5600 68.3%,#ff2e00 68.8%,#f10 69.4%,#f00 69.9%,#f00 77.7%,#ff1e00 79.3%,#ff3e00 80.4%,#ff6900 81.4%,#fbfd00 84.6%,#9fd600 86.1%,#2d9e00 87.7%,#188902 88.2%,#025f09 89.3%,#00373e 90.3%,#00138f 91.4%,#0004ea 92.4%,#0000d7 92.9%,#000 94.5%,#000 99.7%)"></i><i style="left:88px;width:2.5px;background:linear-gradient(#000 0.3%,#000 32.7%,#000025 33.2%,#0000bf 34.3%,#0001f7 34.8%,#001295 35.9%,#00383d 36.9%,#004e1d 37.4%,#056408 38%,#1d9400 39%,#a5d800 40.6%,#f4fa00 41.6%,#ffe200 42.1%,#ff1b00 44.8%,#f00 45.3%,#f00 61%,#ff8200 61.5%,#f2f900 62%,#5cb500 62.6%,#036109 63.1%,#00295b 63.6%,#00432c 64.1%,#0a6e07 64.7%,#239900 65.2%,#76c200 65.7%,#fbfd00 66.8%,#ff6500 68.3%,#ff3b00 68.8%,#ff1b00 69.4%,#ff0600 69.9%,#f00 70.4%,#f00 77.7%,#ff0f00 78.8%,#ff2700 79.8%,#ff5e00 81.4%,#fff100 84.6%,#f1f900 85.1%,#d4ed00 85.6%,#96d200 86.6%,#239900 88.2%,#005b0a 89.8%,#003443 90.8%,#001295 91.9%,#0003f0 92.9%,#0000cf 93.5%,#00003d 94.5%,#000 95%,#000 99.7%)"></i><i style="left:90px;width:2.5px;background:linear-gradient(#000 0.3%,#000 32.2%,#000007 32.7%,#0000e8 34.3%,#0006dd 34.8%,#001a7e 35.9%,#002d52 36.4%,#00570f 37.4%,#168603 38.5%,#2d9d00 39%,#89cb00 40.1%,#fffe00 41.6%,#ff1500 44.8%,#f00 45.3%,#f00 60.5%,#ff0f00 61%,#ff9d00 61.5%,#dbf000 62%,#44a900 62.6%,#005610 63.1%,#00216f 63.6%,#003a3a 64.1%,#056308 64.7%,#1a8f01 65.2%,#addc00 66.2%,#ecf700 66.8%,#ffd800 67.3%,#ff4600 68.8%,#ff2400 69.4%,#f00 70.4%,#ff0100 77.7%,#ff1700 79.3%,#ff4000 80.9%,#ff7e00 82.5%,#fff900 85.1%,#e9f600 85.6%,#aedc00 86.6%,#1d9400 88.7%,#00570e 90.3%,#003148 91.4%,#00119b 92.4%,#0002f4 93.5%,#0000c9 94%,#000038 95%,#000 95.5%,#000 99.7%)"></i><i style="left:92px;width:2.5px;background:linear-gradient(#000 0.3%,#000 32.2%,#000032 32.7%,#0000c6 33.8%,#0002f4 34.3%,#001295 35.3%,#00363f 36.4%,#036109 37.4%,#1b8f01 38.5%,#3fa600 39%,#bfe400 40.6%,#e5f400 41.1%,#fff300 41.6%,#ff0f00 44.8%,#f00 45.3%,#f00 60.5%,#ff2700 61%,#ffb200 61.5%,#c7e700 62%,#2f9f00 62.6%,#004e1c 63.1%,#001980 63.6%,#00304a 64.1%,#00590c 64.7%,#168503 65.2%,#50af00 65.7%,#9ed500 66.2%,#def100 66.8%,#ffe500 67.3%,#ff5100 68.8%,#ff2e00 69.4%,#ff0700 70.4%,#ff0100 70.9%,#ff0100 77.2%,#ff1500 79.3%,#ff3900 80.9%,#ff7200 82.5%,#fcfe00 85.6%,#84c900 87.7%,#1b9001 89.3%,#076808 90.3%,#005413 90.8%,#002f4e 91.9%,#0010a0 92.9%,#0001fa 94%,#0000c1 94.5%,#003 95.5%,#000 96.1%,#000 99.7%)"></i><i style="left:94px;width:2.5px;background:linear-gradient(#000 0.3%,#000 31.7%,#000014 32.2%,#00e 33.8%,#0006db 34.3%,#00197f 35.3%,#002c54 35.9%,#005512 36.9%,#229800 38.5%,#a5d900 40.1%,#f0f900 41.1%,#ffe900 41.6%,#ff0a00 44.8%,#f00 45.3%,#f00 60.5%,#ff4000 61%,#ffc600 61.5%,#b6e000 62%,#1e9600 62.6%,#004924 63.1%,#00138f 63.6%,#00285d 64.1%,#005019 64.7%,#117c04 65.2%,#3ea600 65.7%,#8ece00 66.2%,#d1eb00 66.8%,#fff200 67.3%,#ff5c00 68.8%,#ff3700 69.4%,#ff1d00 69.9%,#ff0d00 70.4%,#ff0600 71.5%,#ff0600 77.7%,#ff1d00 79.8%,#ff3400 80.9%,#ff6800 82.5%,#fff200 85.6%,#f1f900 86.1%,#b9e100 87.2%,#2e9e00 89.3%,#198b02 89.8%,#056308 90.8%,#005019 91.4%,#002b56 92.4%,#000fa8 93.5%,#0000fc 94.5%,#00002a 96.1%,#000 96.6%,#000 99.7%)"></i><i style="left:96px;width:2.5px;background:linear-gradient(#000 0.3%,#000 31.7%,#00003e 32.2%,#0000ce 33.2%,#0002f1 33.8%,#001295 34.8%,#003541 35.9%,#025e09 36.9%,#188b02 38%,#34a100 38.5%,#8bcc00 39.5%,#fbfd00 41.1%,#ffde00 41.6%,#ff0500 44.8%,#f00 45.3%,#f00 60.5%,#ff5900 61%,#ffd900 61.5%,#a5d900 62%,#1a8f01 62.6%,#00442b 63.1%,#00119c 63.6%,#002070 64.1%,#004726 64.7%,#0c7206 65.2%,#2c9d00 65.7%,#7dc600 66.2%,#ff0 67.3%,#ff6800 68.8%,#ff4100 69.4%,#ff2500 69.9%,#ff1400 70.4%,#ff0b00 71.5%,#ff0b00 77.7%,#ff1e00 79.8%,#f30 80.9%,#ff6300 82.5%,#feff00 86.1%,#8ccd00 88.2%,#1f9600 89.8%,#015c0a 91.4%,#00373e 92.4%,#00158a 93.5%,#0005e0 94.5%,#0000eb 95%,#00001b 96.6%,#000 97.1%,#000 99.7%)"></i><i style="left:98px;width:2.5px;background:linear-gradient(#000 0.3%,#000 31.2%,#002 31.7%,#0000f4 33.2%,#0007d8 33.8%,#001980 34.8%,#002b56 35.3%,#005216 36.4%,#076808 36.9%,#1d9300 38%,#99d300 39.5%,#e2f300 40.6%,#fff900 41.1%,#f00 44.8%,#f00 60.5%,#ffec00 61.5%,#96d200 62%,#178802 62.6%,#004031 63.1%,#000fa8 63.6%,#001686 64.1%,#003d35 64.7%,#076708 65.2%,#1c9301 65.7%,#b3df00 66.8%,#f1f900 67.3%,#ffd400 67.8%,#ff7400 68.8%,#ff4c00 69.4%,#ff2e00 69.9%,#ff1200 70.9%,#ff1200 77.7%,#ff2100 79.8%,#ff5000 81.9%,#ffb100 84.6%,#fff700 86.1%,#eef800 86.6%,#9bd400 88.2%,#33a000 89.8%,#1a8e01 90.3%,#076808 91.4%,#005412 91.9%,#00304a 92.9%,#001298 94%,#0003ed 95%,#0000d8 95.5%,#00000b 97.1%,#000 97.6%,#000 99.7%)"></i><i style="left:100px;width:2.5px;background:linear-gradient(#000 0.3%,#000 30.6%,#000006 31.2%,#0000d5 32.7%,#0003ed 33.2%,#001295 34.3%,#003443 35.3%,#005b0a 36.4%,#168703 37.4%,#2a9c00 38%,#a6d900 39.5%,#edf700 40.6%,#fe0 41.1%,#ff3c00 43.7%,#f00 44.8%,#f00 59.9%,#ff1000 60.5%,#ff0 61.5%,#85c900 62%,#148203 62.6%,#003b38 63.1%,#000db4 63.6%,#0010a2 64.1%,#003149 64.7%,#005a0a 65.2%,#168703 65.7%,#54b100 66.2%,#a1d700 66.8%,#e1f200 67.3%,#ffe300 67.8%,#ff5800 69.4%,#ff3800 69.9%,#ff2400 70.4%,#ff1900 71.5%,#ff1900 77.7%,#ff2500 79.8%,#ff4300 81.4%,#ff7200 83%,#ffef00 86.1%,#f7fc00 86.6%,#def100 87.2%,#8acc00 88.7%,#219800 90.3%,#036009 91.9%,#004e1c 92.4%,#002b57 93.5%,#0010a4 94.5%,#0001f8 95.5%,#0000c7 96.1%,#000 97.6%,#000 99.7%)"></i><i style="left:102px;width:2.5px;background:linear-gradient(#000 0.3%,#000 30.6%,#00002f 31.2%,#0000fc 32.7%,#00197f 34.3%,#002b57 34.8%,#005118 35.9%,#056508 36.4%,#1b8f01 37.4%,#3ba400 38%,#8dce00 39%,#f7fc00 40.6%,#ffe400 41.1%,#ff3500 43.7%,#ff1500 44.2%,#f00 44.8%,#f00 59.9%,#ff2700 60.5%,#ffa000 61%,#eef800 61.5%,#73c100 62%,#107b05 62.6%,#00373e 63.1%,#000bbf 63.6%,#000ac3 64.1%,#002467 64.7%,#004d1e 65.2%,#0f7905 65.7%,#3ba400 66.2%,#8ccd00 66.8%,#cfeb00 67.3%,#fff400 67.8%,#ffbe00 68.3%,#ff6400 69.4%,#ff4300 69.9%,#ff2d00 70.4%,#f20 70.9%,#ff2000 78.3%,#ff2b00 79.8%,#ff5300 81.9%,#fa0 84.6%,#feff00 86.6%,#97d300 88.7%,#34a100 90.3%,#1b8f01 90.8%,#00580d 92.4%,#003640 93.5%,#001688 94.5%,#0000fa 96.1%,#000036 97.6%,#000 98.2%,#000 99.7%)"></i><i style="left:104px;width:2.5px;background:linear-gradient(#000 0.3%,#000 30.1%,#000018 30.6%,#0000e1 32.2%,#0004e7 32.7%,#001392 33.8%,#003443 34.8%,#005a0a 35.9%,#239800 37.4%,#9cd500 39%,#fffb00 40.6%,#ff2e00 43.7%,#ff0f00 44.2%,#f00 44.8%,#f00 59.9%,#ff4000 60.5%,#ffb300 61%,#ddf000 61.5%,#64b900 62%,#0e7505 62.6%,#003443 63.1%,#000ac4 63.6%,#0004e7 64.1%,#00158a 64.7%,#003e35 65.2%,#086907 65.7%,#1e9600 66.2%,#73c000 66.8%,#bce200 67.3%,#f9fc00 67.8%,#ff7200 69.4%,#ff4f00 69.9%,#ff3700 70.4%,#ff2a00 70.9%,#ff2800 71.5%,#ff2800 78.3%,#ff3800 80.4%,#ff5600 81.9%,#ff7300 83%,#ffba00 85.1%,#fff900 86.6%,#eef800 87.2%,#a3d800 88.7%,#239900 90.8%,#056408 92.4%,#005216 92.9%,#00304a 94%,#001393 95%,#0005e2 96.1%,#0000ed 96.6%,#00002e 98.2%,#000 98.7%,#000 99.7%)"></i><i style="left:106px;width:2.5px;background:linear-gradient(#000 0.3%,#000003 30.1%,#0000c9 31.7%,#0001f7 32.2%,#0010a3 33.2%,#002c53 34.3%,#005118 35.3%,#056508 35.9%,#1a8e01 36.9%,#36a200 37.4%,#86ca00 38.5%,#eef800 40.1%,#ffef00 40.6%,#ff2600 43.7%,#ff0900 44.2%,#f00 44.8%,#f00 59.9%,#ff5900 60.5%,#ffc500 61%,#cfea00 61.5%,#58b300 62%,#0c7206 62.6%,#034 63.1%,#000ac3 63.6%,#0000f2 64.1%,#000eaf 64.7%,#002e4f 65.2%,#00590c 65.7%,#178702 66.2%,#58b300 66.8%,#a6d900 67.3%,#e7f500 67.8%,#ffde00 68.3%,#ff8000 69.4%,#ff5b00 69.9%,#ff4100 70.4%,#ff3400 70.9%,#ff3100 78.3%,#ff3f00 80.4%,#ff5b00 81.9%,#ffa700 84.6%,#fff300 86.6%,#f5fb00 87.2%,#addc00 88.7%,#1b9101 91.4%,#015c0a 92.9%,#002c55 94.5%,#00119d 95.5%,#0004ea 96.6%,#0000e2 97.1%,#000026 98.7%,#000 99.2%,#000 99.7%)"></i><i style="left:108px;width:2.5px;background:linear-gradient(#000 0.3%,#000 29.6%,#000030 30.1%,#0000f3 31.7%,#0006dd 32.2%,#00158b 33.2%,#003640 34.3%,#005a0a 35.3%,#209700 36.9%,#96d200 38.5%,#f9fd00 40.1%,#ffe400 40.6%,#ff0300 44.2%,#f00 44.8%,#f00 59.4%,#ff0b00 59.9%,#ffd600 61%,#c2e500 61.5%,#4eae00 62%,#0b6f06 62.6%,#003444 63.1%,#000bbe 63.6%,#0000d0 64.1%,#0007d6 64.7%,#001f72 65.2%,#004a22 65.7%,#0f7805 66.2%,#3da500 66.8%,#90cf00 67.3%,#d4ed00 67.8%,#fe0 68.3%,#ffba00 68.8%,#ff6700 69.9%,#ff4c00 70.4%,#ff3d00 70.9%,#ff3a00 78.3%,#ff4600 80.4%,#ff6000 81.9%,#ffa700 84.6%,#ffef00 86.6%,#fafd00 87.2%,#b6e000 88.7%,#81c800 89.8%,#249900 91.4%,#178902 91.9%,#005610 93.5%,#004627 94%,#003640 94.5%,#001882 95.5%,#0002f2 97.1%,#0000d7 97.6%,#000020 99.2%,#000 99.7%)"></i><i style="left:110px;width:2.5px;background:linear-gradient(#000 0.3%,#000 29.1%,#00001b 29.6%,#0000da 31.2%,#0003ee 31.7%,#00119c 32.7%,#002e4f 33.8%,#005217 34.8%,#056508 35.3%,#198c02 36.4%,#32a000 36.9%,#a3d800 38.5%,#e5f400 39.5%,#fffa00 40.1%,#ff3800 43.2%,#f00 44.2%,#f00 59.4%,#ff2000 59.9%,#ffe500 61%,#b7e000 61.5%,#46aa00 62%,#0a6e07 62.6%,#003542 63.1%,#000db7 63.6%,#0000c4 64.1%,#0000fd 64.7%,#001394 65.2%,#003b38 65.7%,#076908 66.2%,#209700 66.8%,#78c300 67.3%,#c1e400 67.8%,#feff00 68.3%,#ffc900 68.8%,#ff7400 69.9%,#ff5700 70.4%,#ff4700 70.9%,#f40 78.8%,#ff4d00 80.4%,#ff7000 82.5%,#ffb700 85.1%,#feff00 87.2%,#a6d900 89.3%,#1c9101 91.9%,#036009 93.5%,#005019 94%,#003148 95%,#00148c 96.1%,#0001fa 97.6%,#00c 98.2%,#000019 99.7%)"></i><i style="left:112px;width:2.5px;background:linear-gradient(#000 0.3%,#000002 29.1%,#0000fd 31.2%,#001688 32.7%,#002662 33.2%,#003640 33.8%,#005a0b 34.8%,#1d9400 36.4%,#8dcd00 38%,#eef800 39.5%,#fff000 40.1%,#ff3200 43.2%,#f00 44.2%,#f00 59.4%,#ff3500 59.9%,#fff300 61%,#addc00 61.5%,#40a700 62%,#096d07 62.6%,#003640 63.1%,#000eaf 63.6%,#0000c9 64.1%,#0000cf 64.7%,#000db5 65.2%,#002e50 65.7%,#005a0a 66.2%,#188a02 66.8%,#aedc00 67.8%,#eef800 68.3%,#ffd700 68.8%,#ff8100 69.9%,#ff6200 70.4%,#ff5100 70.9%,#ff4c00 78.8%,#f50 80.4%,#ff7500 82.5%,#ffb700 85.1%,#fffc00 87.2%,#daef00 88.2%,#96d200 89.8%,#239900 91.9%,#00590b 94%,#002c53 95.5%,#001296 96.6%,#0000fa 98.2%,#00004c 99.7%)"></i><i style="left:114px;width:2.5px;background:linear-gradient(#000 0.3%,#000 28.5%,#000023 29.1%,#0000de 30.6%,#0003ec 31.2%,#00119d 32.2%,#002d52 33.2%,#004f1a 34.3%,#046109 34.8%,#289b00 36.4%,#97d300 38%,#f6fb00 39.5%,#ffe900 40.1%,#ff2e00 43.2%,#ff1200 43.7%,#f00 44.2%,#f00 59.4%,#ff4800 59.9%,#ff0 61%,#a4d800 61.5%,#3aa400 62%,#096c07 62.6%,#00373e 63.1%,#000fa8 63.6%,#0000d6 64.1%,#0000a9 64.7%,#0008d1 65.2%,#002369 65.7%,#004f1b 66.2%,#127f04 66.8%,#4bac00 67.3%,#9dd500 67.8%,#dff100 68.3%,#ffe500 68.8%,#ff8e00 69.9%,#ff6e00 70.4%,#ff5b00 70.9%,#f50 71.5%,#f50 78.8%,#ff6100 80.9%,#ff7a00 82.5%,#ffb700 85.1%,#fff900 87.2%,#f2fa00 87.7%,#9ed600 89.8%,#1b9101 92.4%,#046209 94%,#005314 94.5%,#003641 95.5%,#001a7e 96.6%,#0004e6 98.2%,#00e 98.7%,#00007c 99.7%)"></i><i style="left:116px;width:2.5px;background:linear-gradient(#000 0.3%,#000 28.5%,#0000f5 30.6%,#0006dd 31.2%,#001390 32.2%,#003247 33.2%,#005413 34.3%,#066708 34.8%,#198d02 35.9%,#31a000 36.4%,#9ed600 38%,#fbfd00 39.5%,#ffe400 40.1%,#ff2c00 43.2%,#ff1000 43.7%,#f00 44.2%,#f00 58.9%,#ff0700 59.4%,#ffb400 60.5%,#f5fb00 61%,#9cd500 61.5%,#35a100 62%,#096b07 62.6%,#00383d 63.1%,#0010a2 63.6%,#0000e4 64.1%,#000093 64.7%,#0004e7 65.2%,#001a7d 65.7%,#004628 66.2%,#0e7505 66.8%,#38a300 67.3%,#8dcd00 67.8%,#d1eb00 68.3%,#fff300 68.8%,#ffc100 69.4%,#ff9a00 69.9%,#ff7900 70.4%,#ff6400 70.9%,#ff5d00 71.5%,#ff5d00 78.8%,#ff6800 80.9%,#ff7e00 82.5%,#ffb800 85.1%,#fff600 87.2%,#f6fb00 87.7%,#8fce00 90.3%,#219800 92.4%,#015b0a 94.5%,#004d1d 95%,#00304a 96.1%,#001589 97.1%,#0003ef 98.7%,#0000e0 99.2%,#0000a9 99.7%)"></i><i style="left:118px;width:2.5px;background:linear-gradient(#000 0.3%,#000 28%,#000017 28.5%,#0000cd 30.1%,#0001f8 30.6%,#001784 32.2%,#002760 32.7%,#00373f 33.2%,#00590c 34.3%,#1c9101 35.9%,#a4d800 38%,#ff0 39.5%,#ff2a00 43.2%,#ff1000 43.7%,#f00 44.2%,#f00 58.9%,#ff1800 59.4%,#ffc000 60.5%,#ebf700 61%,#95d100 61.5%,#2f9f00 62%,#086b07 62.6%,#00393b 63.1%,#00119d 63.6%,#0000f0 64.1%,#008 64.7%,#0001f9 65.2%,#00148e 65.7%,#003e34 66.2%,#096c07 66.8%,#269a00 67.3%,#7bc500 67.8%,#c2e500 68.3%,#fdfe00 68.8%,#ffa600 69.9%,#ff8500 70.4%,#ff6f00 70.9%,#f60 71.5%,#f60 79.3%,#ff6e00 80.9%,#ff8300 82.5%,#ffac00 84.6%,#fff400 87.2%,#f9fc00 87.7%,#acdc00 89.8%,#2e9e00 92.4%,#1b9001 92.9%,#056408 94.5%,#005512 95%,#002b56 96.6%,#001394 97.6%,#0001f9 99.2%,#0000d2 99.7%)"></i><i style="left:120px;width:2.5px;background:linear-gradient(#000 0.3%,#000 28%,#00002d 28.5%,#0000e2 30.1%,#0004eb 30.6%,#00119e 31.7%,#002b56 32.7%,#025e09 34.3%,#1e9500 35.9%,#aadb00 38%,#e7f500 39%,#fffa00 39.5%,#ff2900 43.2%,#ff0f00 43.7%,#f00 44.2%,#f00 58.9%,#ff2800 59.4%,#ffcb00 60.5%,#e2f300 61%,#8dcd00 61.5%,#2a9c00 62%,#086a07 62.6%,#003a3a 63.1%,#001298 63.6%,#0000fc 64.1%,#000083 64.7%,#0000ed 65.2%,#0010a1 65.7%,#003542 66.2%,#046109 66.8%,#1b8f01 67.3%,#b0dd00 68.3%,#ecf700 68.8%,#ffdf00 69.4%,#ffb400 69.9%,#ff9500 70.4%,#ff7b00 70.9%,#ff6f00 71.5%,#ff6e00 79.3%,#ff7500 80.9%,#f80 82.5%,#ffba00 85.1%,#fbfd00 87.7%,#9dd500 90.3%,#1e9600 92.9%,#015c0a 95%,#003345 96.6%,#00119f 98.2%,#0005e1 99.2%,#0000f8 99.7%)"></i><i style="left:122px;width:2.5px;background:linear-gradient(#000 0.3%,#000 27.5%,#000009 28%,#0000f7 30.1%,#0006dd 30.6%,#001392 31.7%,#00304b 32.7%,#005117 33.8%,#046309 34.3%,#269a00 35.9%,#b0dd00 38%,#ecf700 39%,#fff500 39.5%,#ff2800 43.2%,#ff0e00 43.7%,#f00 44.2%,#f00 58.9%,#ff3800 59.4%,#ffd600 60.5%,#d9ef00 61%,#85ca00 61.5%,#259a00 62%,#076908 62.6%,#003a3a 63.1%,#001394 63.6%,#0001fa 64.1%,#000084 64.7%,#0000d2 65.2%,#000db5 65.7%,#002c54 66.2%,#005610 66.8%,#158403 67.3%,#4eae00 67.8%,#9ad400 68.3%,#d8ee00 68.8%,#fff200 69.4%,#ffc600 69.9%,#ffa400 70.4%,#ff7a00 71.5%,#ff7600 79.3%,#ff8100 81.4%,#ff9e00 83.5%,#ffc800 85.6%,#fcfe00 87.7%,#a3d700 90.3%,#299b00 92.9%,#1a8e01 93.5%,#051 95.5%,#002d51 97.1%,#00148c 98.2%,#0003ec 99.7%)"></i><i style="left:124px;width:2.5px;background:linear-gradient(#000 0.3%,#000 27.5%,#000021 28%,#0000d2 29.6%,#0002f6 30.1%,#001786 31.7%,#003541 32.7%,#005610 33.8%,#198d02 35.3%,#2f9e00 35.9%,#98d300 37.4%,#f1f900 39%,#fff000 39.5%,#ff2600 43.2%,#ff0d00 43.7%,#f00 44.2%,#ff0300 58.9%,#ffe100 60.5%,#d1eb00 61%,#7ec600 61.5%,#219700 62%,#076808 62.6%,#003b39 63.1%,#001390 63.6%,#0002f3 64.1%,#008 64.7%,#0000b8 65.2%,#0009c9 65.7%,#002369 66.2%,#004b20 66.8%,#0e7705 67.3%,#34a100 67.8%,#81c700 68.3%,#c1e400 68.8%,#f6fb00 69.4%,#ffda00 69.9%,#ff9b00 70.9%,#ff8700 71.5%,#ff7f00 72%,#ff7f00 79.8%,#ff8d00 81.9%,#fa0 84%,#fdfe00 87.7%,#93d100 90.8%,#1d9300 93.5%,#015c0a 95.5%,#003542 97.1%,#001297 98.7%,#0007d6 99.7%)"></i><i style="left:126px;width:2.5px;background:linear-gradient(#000 0.3%,#000 27.5%,#0000e9 29.6%,#0004e8 30.1%,#00119d 31.2%,#002b57 32.2%,#015b0a 33.8%,#1c9101 35.3%,#9fd600 37.4%,#f6fb00 39%,#ffeb00 39.5%,#ff2500 43.2%,#ff0c00 43.7%,#f00 44.2%,#f00 58.4%,#ff1200 58.9%,#ffec00 60.5%,#c8e700 61%,#1d9500 62%,#066708 62.6%,#003b39 63.1%,#00148d 63.6%,#0003ed 64.1%,#00008f 64.7%,#0000a0 65.2%,#0006de 65.7%,#001a7f 66.2%,#004031 66.8%,#086907 67.3%,#1c9301 67.8%,#a8da00 68.8%,#def100 69.4%,#fff100 69.9%,#ffac00 70.9%,#ff8a00 72%,#ff8700 79.8%,#ff8f00 81.4%,#ffae00 84%,#ffcb00 85.6%,#feff00 87.7%,#98d300 90.8%,#229800 93.5%,#046309 95.5%,#051 96.1%,#002f4d 97.6%,#001785 98.7%,#000bc2 99.7%)"></i><i style="left:128px;width:2.5px;background:linear-gradient(#000 0.3%,#000 27%,#000017 27.5%,#00f 29.6%,#001390 31.2%,#00304b 32.2%,#005019 33.2%,#036109 33.8%,#1e9600 35.3%,#86ca00 36.9%,#fcfe00 39%,#ffe600 39.5%,#ff2300 43.2%,#ff0b00 43.7%,#f00 44.2%,#f00 58.4%,#ff2100 58.9%,#fff600 60.5%,#c0e400 61%,#1c9301 62%,#066508 62.6%,#003b38 63.1%,#00158a 63.6%,#0004e8 64.1%,#000098 64.7%,#00008a 65.2%,#0002f3 65.7%,#001295 66.2%,#003542 66.8%,#015b0a 67.3%,#158403 67.8%,#47ab00 68.3%,#8ccd00 68.8%,#f4fa00 69.9%,#ffe000 70.4%,#ffa700 71.5%,#ff8f00 72.5%,#ff8f00 79.3%,#ff9600 81.4%,#fa0 83.5%,#ffce00 85.6%,#feff00 87.7%,#9dd500 90.8%,#2c9d00 93.5%,#1b9001 94%,#015b0a 96.1%,#003640 97.6%,#000eaf 99.7%)"></i><i style="left:130px;width:2.5px;background:linear-gradient(#000 0.3%,#000 27%,#000030 27.5%,#00d 29.1%,#0003f0 29.6%,#001883 31.2%,#002661 31.7%,#003541 32.2%,#051 33.2%,#188a02 34.8%,#299b00 35.3%,#8fce00 36.9%,#fffd00 39%,#ff2100 43.2%,#ff0a00 43.7%,#f00 44.2%,#f00 58.4%,#ff3100 58.9%,#fefe00 60.5%,#b8e000 61%,#1b9001 62%,#056408 62.6%,#003b38 63.1%,#001688 63.6%,#0005e3 64.1%,#0000a0 64.7%,#007 65.2%,#0000f3 65.7%,#000eac 66.2%,#002a58 66.8%,#004f1b 67.3%,#0e7605 67.8%,#289b00 68.3%,#aadb00 69.4%,#dbf000 69.9%,#fff900 70.4%,#ffb900 71.5%,#ff9a00 72.5%,#ff9700 79.8%,#ff9f00 81.9%,#ffaf00 83.5%,#ffd000 85.6%,#fefe00 87.7%,#a0d600 90.8%,#1d9500 94%,#046209 96.1%,#005512 96.6%,#00304b 98.2%,#00119d 99.7%)"></i><i style="left:132px;width:2.5px;background:linear-gradient(#000 0.3%,#000 26.4%,#000010 27%,#0000f4 29.1%,#0005e1 29.6%,#001299 30.6%,#002c55 31.7%,#005b0a 33.2%,#1b8f01 34.8%,#33a000 35.3%,#97d200 36.9%,#ecf700 38.5%,#fff700 39%,#ff1f00 43.2%,#ff0900 43.7%,#f00 44.2%,#f00 57.9%,#ff0500 58.4%,#ff4100 58.9%,#ffc700 59.9%,#f4fa00 60.5%,#b0dd00 61%,#1a8e01 62%,#046309 62.6%,#003b38 63.1%,#001786 63.6%,#0006de 64.1%,#0000a9 64.7%,#000069 65.2%,#0000d6 65.7%,#000bc2 66.2%,#00206f 66.8%,#00432d 67.3%,#076708 67.8%,#198c02 68.3%,#8ece00 69.4%,#c1e400 69.9%,#ecf700 70.4%,#ffec00 70.9%,#ffb600 72%,#ff9e00 73%,#ff9e00 80.4%,#ffa400 81.9%,#ffba00 84%,#fdfe00 87.7%,#a4d800 90.8%,#249900 94%,#005b0a 96.6%,#00373f 98.2%,#00148c 99.7%)"></i><i style="left:134px;width:2.5px;background:linear-gradient(#000 0.3%,#000 26.4%,#000029 27%,#0000d3 28.5%,#0001f7 29.1%,#00148b 30.6%,#003149 31.7%,#005018 32.7%,#036109 33.2%,#1d9400 34.8%,#9fd600 36.9%,#d7ee00 38%,#f2f900 38.5%,#fff100 39%,#ff1e00 43.2%,#ff0800 43.7%,#f00 44.2%,#f00 57.9%,#ff1400 58.4%,#ffd200 59.9%,#ebf600 60.5%,#a8da00 61%,#5bb500 61.5%,#198c02 62%,#046209 62.6%,#003b39 63.1%,#001784 63.6%,#0006da 64.1%,#0000b2 64.7%,#000060 65.2%,#0000b9 65.7%,#0007d8 66.2%,#001687 66.8%,#00373f 67.3%,#00590c 67.8%,#127d04 68.3%,#309f00 68.8%,#a6d900 69.9%,#f9fd00 70.9%,#ffb500 72.5%,#ffa400 73.6%,#ffa300 79.8%,#fa0 81.9%,#ffb700 83.5%,#ffd500 85.6%,#fdfe00 87.7%,#96d200 91.4%,#1c9201 94.5%,#036109 96.6%,#005412 97.1%,#003149 98.7%,#001b7c 99.7%)"></i><i style="left:136px;width:2.5px;background:linear-gradient(#000 0.3%,#000 25.9%,#00000b 26.4%,#0000eb 28.5%,#0004e8 29.1%,#0010a0 30.1%,#00285d 31.2%,#005610 32.7%,#259a00 34.8%,#88cb00 36.4%,#f8fc00 38.5%,#ffeb00 39%,#ff1c00 43.2%,#ff0600 43.7%,#f00 44.2%,#f00 57.9%,#ff2300 58.4%,#fd0 59.9%,#e2f300 60.5%,#a0d600 61%,#54b100 61.5%,#188902 62%,#036009 62.6%,#003b39 63.1%,#001883 63.6%,#0007d7 64.1%,#0000ba 64.7%,#00005b 65.2%,#00009e 65.7%,#0003ed 66.2%,#00119d 66.8%,#002c54 67.3%,#004d1e 67.8%,#0a6f07 68.3%,#1b9001 68.8%,#89cc00 69.9%,#b9e100 70.4%,#e1f200 70.9%,#fffb00 71.5%,#ffc600 72.5%,#ffad00 73.6%,#ffa900 79.8%,#ffbc00 83.5%,#fcfe00 87.7%,#99d300 91.4%,#1e9600 94.5%,#005a0b 97.1%,#00373e 98.7%,#00216d 99.7%)"></i><i style="left:138px;width:2.5px;background:linear-gradient(#000 0.3%,#000 25.9%,#000025 26.4%,#00c 28%,#0000fc 28.5%,#001392 30.1%,#002e50 31.2%,#015b0a 32.7%,#1a8e01 34.3%,#309f00 34.8%,#91d000 36.4%,#fefe00 38.5%,#ffe600 39%,#ff3100 42.7%,#ff0500 43.7%,#f00 44.2%,#f00 57.9%,#ff3200 58.4%,#ffe700 59.9%,#d9ef00 60.5%,#4eae00 61.5%,#168703 62%,#025f09 62.6%,#003a3a 63.1%,#001882 63.6%,#0008d3 64.1%,#0000c2 64.7%,#00005a 65.2%,#000085 65.7%,#0000fb 66.2%,#00226b 67.3%,#004130 67.8%,#036009 68.3%,#148103 68.8%,#32a000 69.4%,#9fd600 70.4%,#ecf700 71.5%,#fff300 72%,#ffc600 73%,#ffb100 74.1%,#ffaf00 80.4%,#ffc500 84%,#fbfd00 87.7%,#9cd500 91.4%,#259a00 94.5%,#035f09 97.1%,#003d35 98.7%,#00275f 99.7%)"></i><i style="left:140px;width:2.5px;background:linear-gradient(#000 0.3%,#000 25.4%,#000007 25.9%,#0000e4 28%,#0003ed 28.5%,#001785 30.1%,#034 31.2%,#005216 32.2%,#046209 32.7%,#1d9400 34.3%,#9ad400 36.4%,#eaf600 38%,#fffa00 38.5%,#ff2f00 42.7%,#ff0500 43.7%,#f00 44.2%,#f00 57.3%,#ff0d00 57.9%,#ff4100 58.4%,#fff200 59.9%,#d0eb00 60.5%,#47aa00 61.5%,#158403 62%,#025d09 62.6%,#003a3b 63.1%,#001981 63.6%,#0008d0 64.1%,#0000c9 64.7%,#00005b 65.2%,#00006d 65.7%,#00d 66.2%,#0009c9 66.8%,#001882 67.3%,#003541 67.8%,#005314 68.3%,#0d7306 68.8%,#1c9201 69.4%,#b0dd00 70.9%,#f5fb00 72%,#ffed00 72.5%,#ffc600 73.6%,#ffb600 74.6%,#ffb500 80.4%,#ffc400 83.5%,#fff900 87.2%,#fbfd00 87.7%,#afdd00 90.8%,#7dc500 92.4%,#1c9301 95%,#00590c 97.6%,#002d52 99.7%)"></i><i style="left:142px;width:2.5px;background:linear-gradient(#000 0.3%,#000 25.4%,#002 25.9%,#0000fc 28%,#001298 29.6%,#002b57 30.6%,#00570e 32.2%,#259900 34.3%,#bde300 36.9%,#f1f900 38%,#fff400 38.5%,#ff2d00 42.7%,#ff0400 43.7%,#f00 44.2%,#f00 57.3%,#ff1c00 57.9%,#fffc00 59.9%,#88cb00 61%,#40a700 61.5%,#148203 62%,#015c0a 62.6%,#00393b 63.1%,#001980 63.6%,#0009ce 64.1%,#0000cf 64.7%,#00005f 65.2%,#000059 65.7%,#0000c0 66.2%,#0006de 66.8%,#001297 67.3%,#002b56 67.8%,#004825 68.3%,#066608 68.8%,#158403 69.4%,#33a000 69.9%,#97d200 70.9%,#bee300 71.5%,#fdfe00 72.5%,#ffc700 74.1%,#ffba00 75.1%,#ffc000 82.5%,#ffd200 84.6%,#fffa00 87.2%,#e4f400 88.7%,#a2d700 91.4%,#6fbf00 92.9%,#1f9600 95%,#025f09 97.6%,#003345 99.7%)"></i><i style="left:144px;width:2.5px;background:linear-gradient(#000 0.3%,#000 24.9%,#000005 25.4%,#0000df 27.5%,#0002f1 28%,#00158a 29.6%,#00304a 30.6%,#025d09 32.2%,#1a8f01 33.8%,#309f00 34.3%,#8ece00 35.9%,#f7fc00 38%,#fe0 38.5%,#ff2b00 42.7%,#ff0300 43.7%,#f00 44.2%,#f00 57.3%,#ff2a00 57.9%,#ff9a00 58.9%,#f8fc00 59.9%,#80c700 61%,#39a400 61.5%,#137f04 62%,#005a0a 62.6%,#00383c 63.1%,#001980 63.6%,#0009cc 64.1%,#0000d5 64.7%,#000063 65.2%,#000049 65.7%,#0000a5 66.2%,#0002f2 66.8%,#00226c 67.8%,#003d35 68.3%,#00590c 68.8%,#1c9301 69.9%,#a7d900 71.5%,#e9f600 72.5%,#fffb00 73%,#ffd400 74.1%,#ffc100 75.1%,#ffbf00 80.4%,#ffd000 84%,#fffb00 87.2%,#e5f400 88.7%,#a5d900 91.4%,#74c100 92.9%,#279a00 95%,#1b9001 95.5%,#00590c 98.2%,#00393c 99.7%)"></i><i style="left:146px;width:2.5px;background:linear-gradient(#000 0.3%,#000 24.9%,#000020 25.4%,#0000f7 27.5%,#0005e1 28%,#001b7c 29.6%,#003640 30.6%,#005413 31.7%,#056408 32.2%,#1d9400 33.8%,#96d200 35.9%,#fdfe00 38%,#ffe800 38.5%,#ff2900 42.7%,#ff0300 43.7%,#f00 44.2%,#f00 56.8%,#ff0d00 57.3%,#ff3a00 57.9%,#ffd900 59.4%,#eef800 59.9%,#78c300 61%,#32a000 61.5%,#117d04 62%,#00580c 62.6%,#00383d 63.1%,#001980 63.6%,#0009ca 64.1%,#0000db 64.7%,#000068 65.2%,#00003b 65.7%,#00008a 66.2%,#0000f5 66.8%,#000bc1 67.3%,#001980 67.8%,#003345 68.3%,#004e1c 68.8%,#086a07 69.4%,#168603 69.9%,#34a100 70.4%,#91d000 71.5%,#d6ed00 72.5%,#f1f900 73%,#fff500 73.6%,#ffd300 74.6%,#ffc500 75.7%,#ffc400 80.9%,#ffd300 84%,#fffc00 87.2%,#daef00 89.3%,#a8da00 91.4%,#79c400 92.9%,#1d9400 95.5%,#025e09 98.2%,#003f32 99.7%)"></i><i style="left:148px;width:2.5px;background:linear-gradient(#000 0.3%,#000005 24.9%,#0000db 27%,#0002f4 27.5%,#00148f 29.1%,#002e50 30.1%,#00590b 31.7%,#259a00 33.8%,#9fd600 35.9%,#fffb00 38%,#ff2800 42.7%,#ff0200 43.7%,#f00 44.2%,#f00 56.8%,#ff1b00 57.3%,#ffe400 59.4%,#e5f400 59.9%,#addc00 60.5%,#2c9d00 61.5%,#107a05 62%,#00570f 62.6%,#00373f 63.1%,#001980 63.6%,#0009c8 64.1%,#0000e0 64.7%,#00006e 65.2%,#000031 65.7%,#000070 66.2%,#0000d8 66.8%,#0007d6 67.3%,#001295 67.8%,#002a5a 68.3%,#00442b 68.8%,#025e09 69.4%,#1d9400 70.4%,#a1d700 72%,#f8fc00 73.6%,#fff000 74.1%,#ffd300 75.1%,#ffc800 76.2%,#ffc800 80.9%,#ffd600 84%,#fffd00 87.2%,#dbf000 89.3%,#9dd500 91.9%,#229800 95.5%,#00590b 98.7%,#00452a 99.7%)"></i><i style="left:150px;width:2.5px;background:linear-gradient(#000 0.3%,#000 24.3%,#00001f 24.9%,#0000f3 27%,#0005e4 27.5%,#001981 29.1%,#003444 30.1%,#036009 31.7%,#1b9001 33.2%,#319f00 33.8%,#a7d900 35.9%,#f1f900 37.4%,#fff500 38%,#ff2600 42.7%,#ff0200 43.7%,#f00 44.2%,#ff0200 56.8%,#ff2900 57.3%,#ffef00 59.4%,#dbf000 59.9%,#a5d800 60.5%,#259900 61.5%,#051 62.6%,#003640 63.1%,#001980 63.6%,#000ac7 64.1%,#0000e4 64.7%,#000074 65.2%,#000029 65.7%,#000056 66.2%,#0000b9 66.8%,#0004eb 67.3%,#002070 68.3%,#00393c 68.8%,#005315 69.4%,#0a6d07 69.9%,#178802 70.4%,#33a000 70.9%,#8bcc00 72%,#aedc00 72.5%,#fdfe00 74.1%,#ffed00 74.6%,#ffce00 76.2%,#ffcd00 81.4%,#fd0 84.6%,#fffe00 87.2%,#dcf000 89.3%,#a1d700 91.9%,#1c9301 96.1%,#025f09 98.7%,#004b21 99.7%)"></i><i style="left:152px;width:2.5px;background:linear-gradient(#000 0.3%,#000005 24.3%,#0000d8 26.4%,#0001f7 27%,#001393 28.5%,#002c54 29.6%,#00560f 31.2%,#1e9500 33.2%,#94d100 35.3%,#f7fc00 37.4%,#ffef00 38%,#ff2500 42.7%,#ff0200 43.7%,#f00 44.2%,#f00 56.3%,#ff1000 56.8%,#ff3900 57.3%,#fffa00 59.4%,#9cd500 60.5%,#1e9600 61.5%,#005413 62.6%,#003541 63.1%,#001981 63.6%,#000ac6 64.1%,#0000e8 64.7%,#00007a 65.2%,#000025 65.7%,#00003d 66.2%,#0000fc 67.3%,#001786 68.3%,#002e4f 68.8%,#004726 69.4%,#036009 69.9%,#1d9300 70.9%,#99d300 72.5%,#d5ed00 73.6%,#fffd00 74.6%,#ffde00 75.7%,#ffd100 76.7%,#ffd000 80.9%,#ffdb00 84%,#fffe00 87.2%,#ddf000 89.3%,#a4d800 91.9%,#67bb00 94%,#1f9600 96.1%,#005a0b 99.2%,#005019 99.7%)"></i><i style="left:154px;width:2.5px;background:linear-gradient(#000 0.3%,#000 23.8%,#00001f 24.3%,#0000f1 26.4%,#0004e7 27%,#001785 28.5%,#003148 29.6%,#015c0a 31.2%,#198c02 32.7%,#279b00 33.2%,#9dd500 35.3%,#fdfe00 37.4%,#ffe900 38%,#ff2400 42.7%,#ff0200 43.7%,#f00 44.2%,#f00 56.3%,#ff1e00 56.8%,#ff4800 57.3%,#fafd00 59.4%,#94d100 60.5%,#1c9301 61.5%,#0c7306 62%,#005216 62.6%,#003443 63.1%,#001882 63.6%,#000ac5 64.1%,#0000ec 64.7%,#00007f 65.2%,#000024 65.7%,#000025 66.2%,#00007a 66.8%,#0000db 67.3%,#0007d8 67.8%,#002565 68.8%,#003c37 69.4%,#005413 69.9%,#168603 70.9%,#2d9e00 71.5%,#81c800 72.5%,#dcf000 74.1%,#fffa00 75.1%,#ffdf00 76.2%,#ffd400 77.2%,#ffd300 81.4%,#ffde00 84%,#ff0 87.2%,#d4ed00 89.8%,#a7d900 91.9%,#1c9101 96.6%,#035f09 99.2%,#051 99.7%)"></i><i style="left:156px;width:2.5px;background:linear-gradient(#000 0.3%,#000 23.3%,#000006 23.8%,#0000d6 25.9%,#0001f8 26.4%,#001296 28%,#002a59 29.1%,#005413 30.6%,#046309 31.2%,#1c9101 32.7%,#a5d800 35.3%,#edf700 36.9%,#fffb00 37.4%,#ff3600 42.1%,#ff0300 43.7%,#f00 44.2%,#f00 55.8%,#ff0900 56.3%,#ff2d00 56.8%,#ffde00 58.9%,#f0f900 59.4%,#8bcc00 60.5%,#1b9001 61.5%,#0b7006 62%,#005018 62.6%,#003345 63.1%,#001882 63.6%,#000ac5 64.1%,#0000ef 64.7%,#000084 65.2%,#000025 65.7%,#001 66.2%,#00005b 66.8%,#0000ba 67.3%,#0003ef 67.8%,#001b7c 68.8%,#003148 69.4%,#004924 69.9%,#036109 70.4%,#1b9101 71.5%,#8ece00 73%,#e1f200 74.6%,#f5fb00 75.1%,#fff800 75.7%,#ffd900 77.2%,#ffd700 81.4%,#ffe000 84%,#feff00 87.2%,#d5ed00 89.8%,#9dd500 92.4%,#1d9500 96.6%,#005a0a 99.7%)"></i><i style="left:158px;width:2.5px;background:linear-gradient(#000 0.3%,#000 23.3%,#000020 23.8%,#00e 25.9%,#0004e9 26.4%,#001688 28%,#00304c 29.1%,#00590b 30.6%,#1f9600 32.7%,#acdc00 35.3%,#f3fa00 36.9%,#fff500 37.4%,#ff3500 42.1%,#ff0300 43.7%,#f00 44.2%,#f00 55.8%,#ff1700 56.3%,#ff3c00 56.8%,#ffe900 58.9%,#e7f500 59.4%,#82c800 60.5%,#47ab00 61%,#198c02 61.5%,#0a6d07 62%,#004f1b 62.6%,#003246 63.1%,#001883 63.6%,#000ac4 64.1%,#0000f2 64.7%,#000028 65.7%,#000 66.2%,#00003e 66.8%,#0000f5 67.8%,#0009cb 68.3%,#001393 68.8%,#00275f 69.4%,#005412 70.4%,#096d07 70.9%,#269a00 72%,#99d300 73.6%,#e5f400 75.1%,#f8fc00 75.7%,#fff600 76.2%,#ffdb00 77.7%,#ffda00 81.4%,#ffe200 84%,#fefe00 87.2%,#d6ee00 89.8%,#a0d600 92.4%,#67bb00 94.5%,#249900 96.6%,#036009 99.7%)"></i><i style="left:160px;width:2.5px;background:linear-gradient(#000 0.3%,#000 22.8%,#000007 23.3%,#0000d4 25.4%,#0001fa 25.9%,#001299 27.5%,#003541 29.1%,#036009 30.6%,#1a8d01 32.2%,#2a9c00 32.7%,#9bd400 34.8%,#f9fc00 36.9%,#ffef00 37.4%,#ff3400 42.1%,#ff0400 43.7%,#f00 44.2%,#f00 55.2%,#ff0600 55.8%,#ff4b00 56.8%,#fff400 58.9%,#ddf000 59.4%,#aedc00 59.9%,#40a700 61%,#188902 61.5%,#086b07 62%,#004d1d 62.6%,#003148 63.1%,#001784 63.6%,#000ac4 64.1%,#0000f5 64.7%,#00002c 65.7%,#000 66.2%,#000023 66.8%,#0000d4 67.8%,#0005e2 68.3%,#001d76 69.4%,#003245 69.9%,#036009 70.9%,#1a8d01 72%,#37a200 72.5%,#a2d700 74.1%,#e9f500 75.7%,#fafd00 76.2%,#fff600 76.7%,#ffde00 78.3%,#fd0 81.9%,#ffe800 84.6%,#fdfe00 87.2%,#d7ee00 89.8%,#a3d800 92.4%,#6dbd00 94.5%,#1d9400 97.1%,#066508 99.7%)"></i><i style="left:162px;width:2.5px;background:linear-gradient(#000 0.3%,#000 22.8%,#000021 23.3%,#0000ed 25.4%,#0004ea 25.9%,#00158b 27.5%,#002e4f 28.5%,#00570f 30.1%,#1c9301 32.2%,#a3d800 34.8%,#feff00 36.9%,#ffea00 37.4%,#ff4500 41.6%,#ff0400 43.7%,#f00 55.2%,#ff1300 55.8%,#f30 56.3%,#ff0 58.9%,#a5d800 59.9%,#38a300 61%,#168603 61.5%,#076808 62%,#004b20 62.6%,#00304b 63.1%,#001785 63.6%,#000ac4 64.1%,#0000f7 64.7%,#000031 65.7%,#000 66.2%,#000009 66.8%,#0000b3 67.8%,#0001f8 68.3%,#00148c 69.4%,#00295b 69.9%,#005413 70.9%,#086b07 71.5%,#1e9600 72.5%,#8dcd00 74.1%,#d9ef00 75.7%,#fbfd00 76.7%,#fff500 77.2%,#ffe000 78.8%,#ffe000 81.9%,#ffe700 84%,#fcfe00 87.2%,#d8ee00 89.8%,#a6d900 92.4%,#71c000 94.5%,#219700 97.1%,#086a07 99.7%)"></i><i style="left:164px;width:2.5px;background:linear-gradient(#000 0.3%,#000 22.3%,#000009 22.8%,#0000d3 24.9%,#0001fb 25.4%,#00119c 27%,#003444 28.5%,#015d0a 30.1%,#229800 32.2%,#92d000 34.3%,#eff800 36.4%,#fffa00 36.9%,#ff3200 42.1%,#ff0500 43.7%,#f00 44.2%,#ff0500 55.2%,#ff4200 56.3%,#ffdf00 58.4%,#f5fb00 58.9%,#9cd500 59.9%,#309f00 61%,#148303 61.5%,#066508 62%,#004a22 62.6%,#002f4d 63.1%,#001687 63.6%,#0000f9 64.7%,#000036 65.7%,#000 66.2%,#000 66.8%,#00003e 67.3%,#0000ea 68.3%,#0007d6 68.8%,#0010a2 69.4%,#003444 70.4%,#025e09 71.5%,#188a02 72.5%,#2d9e00 73%,#96d200 74.6%,#c8e700 75.7%,#eef800 76.7%,#fcfe00 77.2%,#fff500 77.7%,#ffe300 79.3%,#ffe300 81.9%,#fcfe00 87.2%,#d0eb00 90.3%,#91d000 93.5%,#1c9301 97.6%,#0b6f06 99.7%)"></i><i style="left:166px;width:2.5px;background:linear-gradient(#000 0.3%,#000 22.3%,#000023 22.8%,#0000eb 24.9%,#0003ec 25.4%,#00148d 27%,#002c53 28%,#005512 29.6%,#056308 30.1%,#1b8f01 31.7%,#2d9d00 32.2%,#9ad400 34.3%,#f4fa00 36.4%,#fff400 36.9%,#ff4300 41.6%,#ff1300 43.2%,#f00 44.2%,#f00 54.7%,#ff1200 55.2%,#ff2e00 55.8%,#ffe900 58.4%,#ebf700 58.9%,#93d100 59.9%,#299b00 61%,#138004 61.5%,#046309 62%,#004825 62.6%,#002e50 63.1%,#001688 63.6%,#0000fb 64.7%,#00003b 65.7%,#000 66.2%,#000 66.8%,#000024 67.3%,#0000cb 68.3%,#0003eb 68.8%,#001786 69.9%,#002a58 70.4%,#005314 71.5%,#076908 72%,#1c9201 73%,#9ed500 75.1%,#cce900 76.2%,#eff800 77.2%,#fdfe00 77.7%,#fff600 78.3%,#ffe600 79.8%,#ffe600 81.9%,#fe0 84.6%,#fffe00 86.6%,#f5fb00 87.7%,#c8e800 90.8%,#95d100 93.5%,#1f9600 97.6%,#0d7406 99.7%)"></i><i style="left:168px;width:2.5px;background:linear-gradient(#000 0.3%,#000 21.7%,#00000b 22.3%,#0000d2 24.3%,#0000fc 24.9%,#00119e 26.4%,#003247 28%,#005a0a 29.6%,#1d9400 31.7%,#89cc00 33.8%,#e5f400 35.9%,#fafd00 36.4%,#ffef00 36.9%,#ff4200 41.6%,#ff1400 43.2%,#f00 44.2%,#f00 54.2%,#ff0600 54.7%,#ff3d00 55.8%,#fff400 58.4%,#e2f300 58.9%,#b8e000 59.4%,#219800 61%,#036009 62%,#004628 62.6%,#002d52 63.1%,#001589 63.6%,#0000fd 64.7%,#000040 65.7%,#000 66.2%,#000 66.8%,#00000c 67.3%,#00f 68.8%,#00129a 69.9%,#003542 70.9%,#015d0a 72%,#259900 73.6%,#6bbc00 74.6%,#a4d800 75.7%,#e2f200 77.2%,#fdfe00 78.3%,#fff700 78.8%,#ffeb00 79.8%,#ffe900 81.9%,#feff00 86.6%,#eef800 88.2%,#c9e800 90.8%,#98d300 93.5%,#269a00 97.6%,#0f7805 99.7%)"></i><i style="left:170px;width:2.5px;background:linear-gradient(#000 0.3%,#000 21.7%,#000024 22.3%,#0000ea 24.3%,#0003ed 24.9%,#001390 26.4%,#002b56 27.5%,#005215 29.1%,#036009 29.6%,#259a00 31.7%,#92d000 33.8%,#ff0 36.4%,#ff4100 41.6%,#ff1500 43.2%,#f00 44.2%,#f00 54.2%,#ff1200 54.7%,#ff4b00 55.8%,#ff0 58.4%,#afdd00 59.4%,#1d9400 61%,#025e09 62%,#002c54 63.1%,#00158a 63.6%,#00f 64.7%,#000046 65.7%,#000 66.2%,#000 67.3%,#000043 67.8%,#0000e3 68.8%,#0006de 69.4%,#00197f 70.4%,#002c54 70.9%,#005315 72%,#076708 72.5%,#1a8e01 73.6%,#33a100 74.1%,#92d000 75.7%,#c0e400 76.7%,#e4f300 77.7%,#fdfe00 78.8%,#fff800 79.3%,#fe0 80.4%,#ffed00 82.5%,#fffd00 86.1%,#edf700 88.2%,#c1e500 91.4%,#8fce00 94%,#1e9500 98.2%,#117d04 99.7%)"></i><i style="left:172px;width:2.5px;background:linear-gradient(#000 0.3%,#000 21.2%,#00000c 21.7%,#0000fd 24.3%,#001883 26.4%,#00304a 27.5%,#00580d 29.1%,#1b9101 31.2%,#9ad400 33.8%,#f0f900 35.9%,#fff900 36.4%,#ff5000 41.1%,#f20 42.7%,#f00 44.2%,#f00 53.7%,#ff0800 54.2%,#ff5800 55.8%,#ffe300 57.9%,#f6fb00 58.4%,#cfea00 58.9%,#79c300 59.9%,#1b9101 61%,#015b0a 62%,#002b57 63.1%,#00148c 63.6%,#0000fe 64.7%,#00004b 65.7%,#000 66.2%,#000 67.3%,#00002d 67.8%,#0000ca 68.8%,#0003f0 69.4%,#001391 70.4%,#00373f 71.5%,#015c0a 72.5%,#1e9600 74.1%,#61b700 75.1%,#99d300 76.2%,#e5f400 78.3%,#fcfe00 79.3%,#fffa00 79.8%,#fff100 80.9%,#fff000 82.5%,#ff0 86.1%,#e7f500 88.7%,#c2e500 91.4%,#91d000 94%,#239800 98.2%,#138104 99.7%)"></i><i style="left:174px;width:2.5px;background:linear-gradient(#000 0.3%,#000 21.2%,#000026 21.7%,#0000e9 23.8%,#0003ee 24.3%,#001393 25.9%,#003640 27.5%,#025e09 29.1%,#1e9600 31.2%,#a1d700 33.8%,#f6fb00 35.9%,#fff400 36.4%,#ff3f00 41.6%,#ff0b00 43.7%,#f00 44.2%,#f00 44.8%,#f00 53.7%,#ff4700 55.2%,#ffed00 57.9%,#ecf700 58.4%,#c6e700 58.9%,#3fa700 60.5%,#1a8d01 61%,#0d7406 61.5%,#00590b 62%,#00412f 62.6%,#002a59 63.1%,#00148d 63.6%,#0000fd 64.7%,#000 66.2%,#000 67.3%,#00001a 67.8%,#0000fd 69.4%,#0010a3 70.4%,#002e4e 71.5%,#005314 72.5%,#066708 73%,#198c02 74.1%,#2c9d00 74.6%,#6cbd00 75.7%,#a0d600 76.7%,#e6f400 78.8%,#fffc00 80.4%,#fff400 82.5%,#fffe00 85.6%,#dff100 89.3%,#94d100 94%,#1d9400 98.7%,#158403 99.7%)"></i><i style="left:176px;width:2.5px;background:linear-gradient(#000 0.3%,#000 20.7%,#00000e 21.2%,#00f 23.8%,#001785 25.9%,#002f4d 27%,#005611 28.5%,#1a8e01 30.6%,#299b00 31.2%,#91d000 33.2%,#fbfd00 35.9%,#ffef00 36.4%,#ff4e00 41.1%,#f20 42.7%,#ff0200 44.2%,#f00 53.1%,#ff0b00 53.7%,#ff3800 54.7%,#fff700 57.9%,#e3f300 58.4%,#bde300 58.9%,#37a300 60.5%,#188a02 61%,#0b7106 61.5%,#00570e 62%,#004031 62.6%,#00148e 63.6%,#0000fc 64.7%,#000 66.2%,#000 67.3%,#000009 67.8%,#0000e7 69.4%,#0005e0 69.9%,#001687 70.9%,#00285e 71.5%,#00393b 72%,#025d09 73%,#1d9300 74.6%,#8fcf00 76.7%,#daef00 78.8%,#fffe00 80.9%,#fff800 82.5%,#fdfe00 85.6%,#d8ee00 89.8%,#96d200 94%,#209700 98.7%,#178802 99.7%)"></i><i style="left:178px;width:2.5px;background:linear-gradient(#000 0.3%,#000 20.7%,#000027 21.2%,#0000e8 23.3%,#0003ef 23.8%,#001295 25.4%,#003443 27%,#005b0a 28.5%,#1c9301 30.6%,#99d300 33.2%,#fffe00 35.9%,#ff4d00 41.1%,#ff2300 42.7%,#ff0400 44.2%,#f00 52.6%,#ff0500 53.1%,#ff4500 54.7%,#fdfe00 57.9%,#8ccd00 59.4%,#309f00 60.5%,#168703 61%,#0a6e07 61.5%,#005512 62%,#003e34 62.6%,#001390 63.6%,#0001fb 64.7%,#0000b0 65.2%,#000006 66.2%,#000 67.8%,#0000d3 69.4%,#0003ee 69.9%,#001296 70.9%,#003247 72%,#005512 73%,#076708 73.6%,#279a00 75.1%,#96d200 77.2%,#bde300 78.3%,#e6f400 79.8%,#fffe00 81.9%,#f7fc00 86.1%,#d1eb00 90.3%,#98d300 94%,#269a00 98.7%,#198b02 99.7%)"></i><i style="left:180px;width:2.5px;background:linear-gradient(#000 0.3%,#000 20.2%,#000010 20.7%,#00f 23.3%,#001687 25.4%,#002e50 26.4%,#005413 28%,#046109 28.5%,#229800 30.6%,#a1d700 33.2%,#f3fa00 35.3%,#fff800 35.9%,#ff4b00 41.1%,#ff1800 43.2%,#f00 44.8%,#f00 52.6%,#f20 53.7%,#ff5200 54.7%,#ffe900 57.3%,#f3fa00 57.9%,#d0eb00 58.4%,#83c900 59.4%,#289b00 60.5%,#096b07 61.5%,#005315 62%,#003c36 62.6%,#001391 63.6%,#0001fb 64.7%,#0000b2 65.2%,#00000b 66.2%,#000 66.8%,#000 67.8%,#000032 68.3%,#0000c0 69.4%,#0001fb 69.9%,#0010a4 70.9%,#002b56 72%,#004d1d 73%,#025e09 73.6%,#1c9101 75.1%,#85ca00 77.2%,#ceea00 79.3%,#eef800 80.9%,#fcfe00 83%,#edf700 87.2%,#c3e500 91.4%,#90cf00 94.5%,#1e9600 99.2%,#1a8f01 99.7%)"></i><i style="left:182px;width:2.5px;background:linear-gradient(#000 0.3%,#000 20.2%,#0000e8 22.8%,#0003f0 23.3%,#001296 24.9%,#034 26.4%,#00590b 28%,#1b9001 30.1%,#2d9d00 30.6%,#92d000 32.7%,#bde300 33.8%,#f8fc00 35.3%,#fff300 35.9%,#ff4a00 41.1%,#ff2300 42.7%,#ff0700 44.2%,#f00 44.8%,#f00 52.1%,#ff1a00 53.1%,#ff4500 54.2%,#fff300 57.3%,#eaf600 57.9%,#a3d700 58.9%,#209700 60.5%,#076808 61.5%,#005118 62%,#003b39 62.6%,#001393 63.6%,#0001fb 64.7%,#0000b4 65.2%,#001 66.2%,#000 66.8%,#000 67.8%,#000024 68.3%,#0000f2 69.9%,#0006dc 70.4%,#00158a 71.5%,#003542 72.5%,#005610 73.6%,#219800 75.7%,#74c100 77.2%,#9fd600 78.3%,#c1e400 79.3%,#e4f300 80.9%,#f6fb00 83%,#eaf600 87.2%,#c2e500 91.4%,#87cb00 95%,#1c9201 99.7%)"></i><i style="left:184px;width:2.5px;background:linear-gradient(#000 0.3%,#000 19.6%,#000014 20.2%,#00f 22.8%,#001589 24.9%,#002d52 25.9%,#005216 27.5%,#035f09 28%,#1e9500 30.1%,#9ad400 32.7%,#ebf700 34.8%,#feff00 35.3%,#ffed00 35.9%,#ff4900 41.1%,#ff2400 42.7%,#ff0800 44.2%,#f00 45.3%,#f00 51.6%,#ff1500 52.6%,#ff3a00 53.7%,#ff6c00 54.7%,#fffe00 57.3%,#9ad400 58.9%,#1d9300 60.5%,#066508 61.5%,#004f1b 62%,#00393c 62.6%,#001295 63.6%,#0001fb 64.7%,#0000b6 65.2%,#000015 66.2%,#000 66.8%,#000 67.8%,#000018 68.3%,#0000e1 69.9%,#0004e8 70.4%,#001297 71.5%,#002e4e 72.5%,#004f1b 73.6%,#025f09 74.1%,#1a8f01 75.7%,#2d9d00 76.2%,#90cf00 78.3%,#c1e400 79.8%,#e8f500 81.9%,#f1f900 83.5%,#e3f300 87.7%,#bbe200 91.9%,#80c700 95.5%,#1e9600 99.7%)"></i><i style="left:186px;width:2.5px;background:linear-gradient(#000 0.3%,#000 19.6%,#0000e9 22.3%,#0003ef 22.8%,#001297 24.3%,#003246 25.9%,#00580d 27.5%,#1a8e01 29.6%,#289b00 30.1%,#a2d700 32.7%,#f1f900 34.8%,#fffa00 35.3%,#ff4800 41.1%,#ff1b00 43.2%,#f00 45.3%,#ff0400 51.6%,#ff1f00 52.6%,#ff4600 53.7%,#ffe800 56.8%,#f6fb00 57.3%,#b5df00 58.4%,#1b9001 60.5%,#046209 61.5%,#004c1f 62%,#00373e 62.6%,#001297 63.6%,#0001fb 64.7%,#0000b7 65.2%,#00001a 66.2%,#000 66.8%,#000 67.8%,#00000c 68.3%,#0000d0 69.9%,#0002f4 70.4%,#0010a4 71.5%,#00295c 72.5%,#00570f 74.1%,#1d9500 76.2%,#93d100 78.8%,#cce900 80.9%,#e4f300 82.5%,#eaf600 83.5%,#e0f200 87.7%,#bae200 91.9%,#82c800 95.5%,#259900 99.7%)"></i><i style="left:188px;width:2.5px;background:linear-gradient(#000 0.3%,#000 19.1%,#000019 19.6%,#0000fd 22.3%,#001589 24.3%,#002c53 25.4%,#025e09 27.5%,#1d9300 29.6%,#aada00 32.7%,#f7fc00 34.8%,#fff500 35.3%,#ff4700 41.1%,#ff1c00 43.2%,#f00 45.3%,#f00 50.5%,#ff0e00 51.6%,#ff2a00 52.6%,#ff5300 53.7%,#fff300 56.8%,#edf700 57.3%,#cdea00 57.9%,#87cb00 58.9%,#35a100 59.9%,#198c02 60.5%,#025f09 61.5%,#003541 62.6%,#001299 63.6%,#0001fb 64.7%,#0000b8 65.2%,#00001d 66.2%,#000 66.8%,#000001 68.3%,#00f 70.4%,#00148c 72%,#003148 73%,#025f09 74.6%,#269a00 76.7%,#6fbe00 78.3%,#96d200 79.3%,#cae800 81.4%,#daef00 82.5%,#e5f400 84%,#d9ef00 88.2%,#b3de00 92.4%,#7bc400 96.1%,#2b9d00 99.7%)"></i><i style="left:190px;width:2.5px;background:linear-gradient(#000 0.3%,#000005 19.1%,#0000ec 21.7%,#0003ed 22.3%,#001297 23.8%,#003246 25.4%,#00570f 27%,#239900 29.6%,#9dd500 32.2%,#ebf600 34.3%,#fdfe00 34.8%,#ffef00 35.3%,#ff6100 40.1%,#ff1d00 43.2%,#f00 45.8%,#f00 50%,#ff0c00 51%,#ff3600 52.6%,#ff7800 54.2%,#fffd00 56.8%,#a2d700 58.4%,#2c9d00 59.9%,#178802 60.5%,#015c0a 61.5%,#034 62.6%,#00119c 63.6%,#0001fc 64.7%,#0000b9 65.2%,#000021 66.2%,#000 66.8%,#000 68.3%,#000035 68.8%,#0000ef 70.4%,#0005e3 70.9%,#001298 72%,#002c55 73%,#00570e 74.6%,#1c9101 76.7%,#98d300 79.8%,#d0eb00 82.5%,#dff100 84.6%,#d5ed00 88.2%,#b2de00 92.4%,#7dc600 96.1%,#31a000 99.7%)"></i><i style="left:192px;width:2.5px;background:linear-gradient(#000 0.3%,#000 18.6%,#00001f 19.1%,#0000d8 21.2%,#0001fb 21.7%,#001688 23.8%,#002c53 24.9%,#015d0a 27%,#1c9201 29.1%,#8fcf00 31.7%,#dff100 33.8%,#fffb00 34.8%,#ff6d00 39.5%,#ff3a00 41.6%,#ff1000 44.2%,#f00 46.3%,#ff0300 50%,#ff2100 51.6%,#ff6c00 53.7%,#ffeb00 56.3%,#f7fb00 56.8%,#bae100 57.9%,#74c100 58.9%,#249900 59.9%,#0b6f06 61%,#00590b 61.5%,#003147 62.6%,#00119e 63.6%,#0000fc 64.7%,#0000ba 65.2%,#000025 66.2%,#000 66.8%,#000 68.3%,#000029 68.8%,#0000df 70.4%,#0003ee 70.9%,#001882 72.5%,#003443 73.6%,#025f09 75.1%,#1e9600 77.2%,#63b900 78.8%,#89cb00 79.8%,#bce200 81.9%,#d8ee00 84.6%,#d1eb00 88.2%,#b1dd00 92.4%,#7fc600 96.1%,#37a200 99.7%)"></i><i style="left:194px;width:2.5px;background:linear-gradient(#000 0.3%,#000 18.1%,#00000b 18.6%,#0000f0 21.2%,#0003eb 21.7%,#001296 23.3%,#003247 24.9%,#005610 26.4%,#209700 29.1%,#acdc00 32.2%,#f7fb00 34.3%,#fff600 34.8%,#ff7900 39%,#ff3a00 41.6%,#ff1200 44.2%,#f00 46.9%,#ff0500 49.5%,#ff2b00 51.6%,#ff6200 53.1%,#fff500 56.3%,#edf700 56.8%,#b1de00 57.9%,#1d9500 59.9%,#096c07 61%,#00560f 61.5%,#00304b 62.6%,#0010a1 63.6%,#0000fd 64.7%,#000028 66.2%,#000 66.8%,#000 68.3%,#00001e 68.8%,#0000d0 70.4%,#0001f8 70.9%,#00148e 72.5%,#002e4f 73.6%,#00570e 75.1%,#066608 75.7%,#269a00 77.7%,#8acc00 80.4%,#bae100 82.5%,#d2ec00 85.1%,#cae800 88.7%,#aada00 92.9%,#80c700 96.1%,#3ba500 99.7%)"></i><i style="left:196px;width:2.5px;background:linear-gradient(#000 0.3%,#000 18.1%,#000026 18.6%,#0000dc 20.7%,#0001f9 21.2%,#001687 23.3%,#002c53 24.3%,#015c0a 26.4%,#1b9001 28.5%,#2b9d00 29.1%,#8bcc00 31.2%,#c7e700 32.7%,#fdfe00 34.3%,#fff000 34.8%,#ff6900 39.5%,#ff3000 42.1%,#ff0f00 44.8%,#ff0200 47.9%,#ff1400 50%,#ff3600 51.6%,#ff6e00 53.1%,#ff0 56.3%,#a8da00 57.9%,#1b9101 59.9%,#076808 61%,#005413 61.5%,#002e4f 62.6%,#0010a3 63.6%,#0000fe 64.7%,#00002b 66.2%,#000 66.8%,#000 68.3%,#000014 68.8%,#0000fa 70.9%,#00129a 72.5%,#003640 74.1%,#025e09 75.7%,#1c9201 77.7%,#8bcd00 80.9%,#b7e000 83%,#cae800 85.1%,#c5e600 88.7%,#a8da00 92.9%,#81c700 96.1%,#3fa700 99.7%)"></i><i style="left:198px;width:2.5px;background:linear-gradient(#000 0.3%,#000 17.5%,#000013 18.1%,#0000f5 20.7%,#0004e9 21.2%,#001394 22.8%,#003246 24.3%,#005610 25.9%,#1e9600 28.5%,#94d100 31.2%,#fffc00 34.3%,#ff7400 39%,#ff3a00 41.6%,#ff1600 44.2%,#ff0700 47.4%,#ff1400 49.5%,#ff3200 51%,#ff6500 52.6%,#fe0 55.8%,#f5fb00 56.3%,#9fd600 57.9%,#33a000 59.4%,#198d02 59.9%,#056508 61%,#005117 61.5%,#002c53 62.6%,#0010a6 63.6%,#00f 64.7%,#00002d 66.2%,#000 66.8%,#000 68.3%,#00000a 68.8%,#0000eb 70.9%,#0004e9 71.5%,#001785 73%,#00304a 74.1%,#00570e 75.7%,#056508 76.2%,#1e9600 78.3%,#5cb500 79.8%,#8ccd00 81.4%,#b4df00 83.5%,#c5e600 85.6%,#bfe300 89.3%,#a6d900 92.9%,#81c800 96.1%,#43a800 99.7%)"></i><i style="left:200px;width:2.5px;background:linear-gradient(#000 0.3%,#000 17.5%,#0000e1 20.2%,#0002f6 20.7%,#001786 22.8%,#002d52 23.8%,#015c0a 25.9%,#1b8f01 28%,#299b00 28.5%,#b0dd00 31.7%,#f7fc00 33.8%,#fff600 34.3%,#ff7200 39%,#ff3a00 41.6%,#ff1900 44.2%,#ff0c00 47.4%,#ff1c00 49.5%,#ff3d00 51%,#ff7100 52.6%,#fff900 55.8%,#ebf700 56.3%,#95d200 57.9%,#2a9c00 59.4%,#188902 59.9%,#046209 61%,#004f1b 61.5%,#002b57 62.6%,#001a7f 63.1%,#0000fe 64.7%,#000030 66.2%,#000 66.8%,#000 68.8%,#00d 70.9%,#0002f3 71.5%,#001390 73%,#002b56 74.1%,#00452a 75.1%,#025e09 76.2%,#259a00 78.8%,#7fc600 81.4%,#aadb00 83.5%,#bfe400 86.1%,#b8e100 89.8%,#9fd600 93.5%,#7ac400 96.6%,#46aa00 99.7%)"></i><i style="left:202px;width:2.5px;background:linear-gradient(#000 0.3%,#000 17%,#00001b 17.5%,#0000fa 20.2%,#0004e6 20.7%,#001392 22.3%,#003246 23.8%,#005610 25.4%,#1d9500 28%,#90cf00 30.6%,#c9e800 32.2%,#fdfe00 33.8%,#fff000 34.3%,#ff7d00 38.5%,#f40 41.1%,#ff2000 43.7%,#f10 46.9%,#ff1d00 49%,#ff4800 51%,#ff7d00 52.6%,#fbfd00 55.8%,#8ccd00 57.9%,#229800 59.4%,#025e09 61%,#003a39 62%,#00295b 62.6%,#001882 63.1%,#0000fd 64.7%,#000032 66.2%,#000 66.8%,#000 68.8%,#00002d 69.4%,#0000cf 70.9%,#0000fd 71.5%,#00119b 73%,#003246 74.6%,#00570e 76.2%,#056408 76.7%,#1c9301 78.8%,#7fc700 81.9%,#a7d900 84%,#b8e100 86.1%,#b4df00 89.8%,#9dd500 93.5%,#7ac400 96.6%,#48ab00 99.7%)"></i><i style="left:204px;width:2.5px;background:linear-gradient(#000 0.3%,#000 16.5%,#000008 17%,#0000e7 19.6%,#0002f2 20.2%,#001784 22.3%,#002d51 23.3%,#015c0a 25.4%,#269a00 28%,#98d300 30.6%,#fffb00 33.8%,#ffb000 36.4%,#ff4d00 40.6%,#ff2700 43.2%,#ff1600 46.3%,#ff1e00 48.4%,#f40 50.5%,#ff7500 52.1%,#fff400 55.2%,#f2f900 55.8%,#a2d700 57.3%,#1d9400 59.4%,#015b0a 61%,#00383d 62%,#00275f 62.6%,#001785 63.1%,#0000fb 64.7%,#000034 66.2%,#000 66.8%,#000 68.8%,#002 69.4%,#0000f4 71.5%,#0005e5 72%,#001688 73.6%,#002d51 74.6%,#025d09 76.7%,#1e9600 79.3%,#73c100 81.9%,#9ed500 84%,#b3df00 86.6%,#afdd00 89.8%,#9bd400 93.5%,#79c300 96.6%,#4aac00 99.7%)"></i><i style="left:206px;width:2.5px;background:linear-gradient(#000 0.3%,#000 16.5%,#000023 17%,#00f 19.6%,#001390 21.7%,#003345 23.3%,#005610 24.9%,#1d9400 27.5%,#a0d600 30.6%,#f8fc00 33.2%,#fff600 33.8%,#ffad00 36.4%,#ff4d00 40.6%,#ff2900 43.2%,#ff1a00 46.3%,#ff2500 48.4%,#ff4e00 50.5%,#ffba00 53.7%,#fffe00 55.2%,#99d300 57.3%,#35a200 58.9%,#1b9001 59.4%,#096b07 60.5%,#00580c 61%,#003640 62%,#001688 63.1%,#0000fa 64.7%,#000036 66.2%,#000 66.8%,#000 68.8%,#000017 69.4%,#0000e6 71.5%,#0003ef 72%,#001393 73.6%,#003443 75.1%,#00570e 76.7%,#056308 77.2%,#259900 79.8%,#67bb00 81.9%,#95d100 84%,#addc00 86.6%,#abdb00 89.8%,#98d300 93.5%,#78c300 96.6%,#4bac00 99.7%)"></i><i style="left:208px;width:2.5px;background:linear-gradient(#000 0.3%,#000 16%,#001 16.5%,#0000ed 19.1%,#0003ef 19.6%,#001882 21.7%,#002e50 22.8%,#015c0a 24.9%,#249900 27.5%,#80c700 29.6%,#bae200 31.2%,#fdfe00 33.2%,#fff100 33.8%,#ff8400 38%,#ff4d00 40.6%,#ff2700 43.7%,#ff1f00 46.3%,#ff2700 47.9%,#ff4b00 50%,#ff7900 51.6%,#fff000 54.7%,#f7fc00 55.2%,#dff100 55.8%,#90cf00 57.3%,#2d9d00 58.9%,#198c02 59.4%,#076808 60.5%,#005610 61%,#003443 62%,#00148b 63.1%,#0006da 64.1%,#0000f8 64.7%,#000038 66.2%,#000 66.8%,#000 68.8%,#00000d 69.4%,#0000d9 71.5%,#0001f8 72%,#00119d 73.6%,#002f4c 75.1%,#025d09 77.2%,#1d9300 79.8%,#69bc00 82.5%,#93d100 84.6%,#a9da00 87.2%,#a6d900 90.3%,#96d200 93.5%,#77c300 96.6%,#4cad00 99.7%)"></i><i style="left:210px;width:2.5px;background:linear-gradient(#000 0.3%,#000 16%,#0000da 18.6%,#0001fb 19.1%,#00148e 21.2%,#034 22.8%,#005610 24.3%,#1c9301 27%,#9dd500 30.1%,#f3fa00 32.7%,#fffb00 33.2%,#ffb300 35.9%,#ff5600 40.1%,#ff2e00 43.2%,#ff2300 45.8%,#ff2f00 47.9%,#f50 50%,#ffa800 52.6%,#fff900 54.7%,#eef800 55.2%,#a3d800 56.8%,#259900 58.9%,#056508 60.5%,#005314 61%,#003246 62%,#00148e 63.1%,#0006dc 64.1%,#0000f7 64.7%,#000 66.8%,#000 68.8%,#000004 69.4%,#0000fd 72%,#00158a 74.1%,#003640 75.7%,#00580d 77.2%,#056308 77.7%,#1f9700 80.4%,#5fb600 82.5%,#92d000 85.1%,#a3d800 87.2%,#a2d700 90.3%,#93d000 93.5%,#76c200 96.6%,#4cad00 99.7%)"></i><i style="left:212px;width:2.5px;background:linear-gradient(#000 0.3%,#000 15.4%,#000019 16%,#0000f2 18.6%,#0003eb 19.1%,#001980 21.2%,#00393b 22.8%,#015b0a 24.3%,#229800 27%,#a4d800 30.1%,#f9fc00 32.7%,#fff600 33.2%,#ffb000 35.9%,#ff5700 40.1%,#ff3100 43.2%,#ff2800 45.8%,#ff3000 47.4%,#ff5300 49.5%,#ff7e00 51%,#fbfd00 54.7%,#9ad400 56.8%,#1e9500 58.9%,#046209 60.5%,#005118 61%,#00304a 62%,#001391 63.1%,#0006dd 64.1%,#0000f6 64.7%,#000 66.8%,#000 69.4%,#0000f0 72%,#0004ea 72.5%,#001393 74.1%,#003247 75.7%,#025e09 77.7%,#1c9101 80.4%,#62b800 83%,#91cf00 85.6%,#a0d600 87.7%,#9ed600 90.3%,#90cf00 93.5%,#75c100 96.6%,#4dad00 99.7%)"></i><i style="left:214px;width:2.5px;background:linear-gradient(#000 0.3%,#000 14.9%,#000007 15.4%,#0000e0 18.1%,#0001f8 18.6%,#00148c 20.7%,#00295b 21.7%,#005610 23.8%,#1c9201 26.4%,#99d300 29.6%,#ceea00 31.2%,#fefe00 32.7%,#fff100 33.2%,#ffad00 35.9%,#ff5700 40.1%,#ff3800 42.7%,#ff2d00 45.3%,#ff3800 47.4%,#ff5c00 49.5%,#fa0 52.1%,#fff600 54.2%,#f2fa00 54.7%,#acdb00 56.3%,#1c9201 58.9%,#025f09 60.5%,#002f4e 62%,#001394 63.1%,#0006df 64.1%,#0000f4 64.7%,#000002 66.8%,#000 69.4%,#000023 69.9%,#0000e4 72%,#0002f2 72.5%,#00119c 74.1%,#002e50 75.7%,#00590c 77.7%,#1d9500 80.9%,#58b300 83%,#89cc00 85.6%,#9bd400 87.7%,#9ad400 90.3%,#8ece00 93.5%,#74c100 96.6%,#4dae00 99.7%)"></i><i style="left:216px;width:2.5px;background:linear-gradient(#000 0.3%,#000 14.9%,#000021 15.4%,#0000f8 18.1%,#0004e8 18.6%,#001298 20.2%,#002f4e 21.7%,#015b0a 23.8%,#209700 26.4%,#a1d700 29.6%,#f4fa00 32.2%,#fffb00 32.7%,#ffb600 35.3%,#ff6000 39.5%,#ff3b00 42.7%,#ff3200 45.3%,#ff4000 47.4%,#f60 49.5%,#ffb300 52.1%,#ff0 54.2%,#a4d800 56.3%,#2e9e00 58.4%,#1a8e01 58.9%,#015c0a 60.5%,#002d52 62%,#001297 63.1%,#0005e1 64.1%,#0000f3 64.7%,#000005 66.8%,#000 69.4%,#00001a 69.9%,#0000d9 72%,#0001fa 72.5%,#00158a 74.6%,#003442 76.2%,#025f09 78.3%,#229800 81.4%,#5bb400 83.5%,#88cb00 86.1%,#97d300 88.2%,#96d200 90.8%,#88cb00 94%,#72c000 96.6%,#4eae00 99.7%)"></i><i style="left:218px;width:2.5px;background:linear-gradient(#000 0.3%,#000 14.4%,#00000f 14.9%,#0000e6 17.5%,#0002f4 18.1%,#00158a 20.2%,#002a59 21.2%,#005610 23.3%,#1b9101 25.9%,#2b9c00 26.4%,#96d200 29.1%,#f9fc00 32.2%,#fff600 32.7%,#ffb300 35.3%,#ff6000 39.5%,#ff4100 42.1%,#ff3600 44.8%,#ff4100 46.9%,#ff6400 49%,#ffac00 51.6%,#fff400 53.7%,#f6fb00 54.2%,#b4df00 55.8%,#80c700 56.8%,#269a00 58.4%,#086a07 59.9%,#00590c 60.5%,#003a39 61.5%,#001299 63.1%,#0005e2 64.1%,#0000f2 64.7%,#000008 66.8%,#000 67.3%,#000 69.4%,#000012 69.9%,#0000fb 72.5%,#001392 74.6%,#00304a 76.2%,#005a0b 78.3%,#1d9300 81.4%,#52b000 83.5%,#7ac400 85.6%,#92d000 88.2%,#92d000 90.8%,#85ca00 94%,#71c000 96.6%,#4eae00 99.7%)"></i><i style="left:220px;width:2.5px;background:linear-gradient(#000 0.3%,#000 14.4%,#0000fd 17.5%,#001296 19.6%,#002f4d 21.2%,#015b0a 23.3%,#1e9600 25.9%,#76c200 28%,#afdd00 29.6%,#fefe00 32.2%,#fff100 32.7%,#ffb100 35.3%,#ff6000 39.5%,#f40 42.1%,#ff3b00 44.8%,#ff4800 46.9%,#ff6d00 49%,#ffb400 51.6%,#fffd00 53.7%,#93d100 56.3%,#1e9600 58.4%,#066708 59.9%,#00560f 60.5%,#00383c 61.5%,#00119c 63.1%,#0005e3 64.1%,#0000f1 64.7%,#00000a 66.8%,#000 67.3%,#000 69.4%,#000009 69.9%,#0000f0 72.5%,#0003ec 73%,#001981 75.1%,#00373f 76.7%,#051 78.3%,#035f09 78.8%,#1e9600 81.9%,#55b100 84%,#80c700 86.6%,#8ece00 88.7%,#82c800 94%,#6fbf00 96.6%,#4eae00 99.7%)"></i><i style="left:222px;width:2.5px;background:linear-gradient(#000 0.3%,#000 13.9%,#000017 14.4%,#0000eb 17%,#0002f1 17.5%,#001589 19.6%,#002a58 20.7%,#005611 22.8%,#1b9001 25.4%,#289b00 25.9%,#a4d800 29.1%,#fffc00 32.2%,#ffba00 34.8%,#ff6900 39%,#ff4b00 41.6%,#ff4000 44.2%,#ff4a00 46.3%,#ff6b00 48.4%,#ffae00 51%,#fff200 53.1%,#f9fc00 53.7%,#bae200 55.2%,#1c9301 58.4%,#056408 59.9%,#005413 60.5%,#00363f 61.5%,#001b7d 62.6%,#0005e5 64.1%,#0000f0 64.7%,#00000d 66.8%,#000 67.3%,#000001 69.9%,#0000e5 72.5%,#0002f4 73%,#00158a 75.1%,#003345 76.7%,#005b0a 78.8%,#1c9101 81.9%,#4cad00 84%,#72c000 86.1%,#89cc00 88.7%,#80c700 94%,#4dae00 99.7%)"></i><i style="left:224px;width:2.5px;background:linear-gradient(#000 0.3%,#000 13.4%,#000005 13.9%,#0000fd 17%,#001394 19.1%,#002f4c 20.7%,#005b0a 22.8%,#1d9500 25.4%,#abdb00 29.1%,#f9fc00 31.7%,#fff700 32.2%,#ffb700 34.8%,#ff6900 39%,#ff4d00 41.6%,#ff4500 44.2%,#ff5100 46.3%,#ff7400 48.4%,#ffb600 51%,#fffa00 53.1%,#f1f900 53.7%,#9cd400 55.8%,#2e9e00 57.9%,#1b8f01 58.4%,#036109 59.9%,#005216 60.5%,#003542 61.5%,#00197f 62.6%,#0004e6 64.1%,#0000ef 64.7%,#000010 66.8%,#000 67.3%,#000 69.9%,#000026 70.4%,#0000da 72.5%,#0001fc 73%,#001392 75.1%,#002f4d 76.7%,#005610 78.8%,#036009 79.3%,#1d9400 82.5%,#43a800 84%,#6abc00 86.1%,#84c900 88.7%,#86ca00 90.8%,#7cc500 94%,#4dad00 99.7%)"></i><i style="left:226px;width:2.5px;background:linear-gradient(#000 0.3%,#000 13.4%,#00001e 13.9%,#0000ef 16.5%,#0003ef 17%,#001687 19.1%,#003542 20.7%,#051 22.3%,#036109 22.8%,#269a00 25.4%,#7ac400 27.5%,#b1de00 29.1%,#fdfe00 31.7%,#fff300 32.2%,#ffb500 34.8%,#ff7200 38.5%,#ff5400 41.1%,#ff4a00 43.7%,#ff5300 45.8%,#ff7200 47.9%,#ffb000 50.5%,#fbfd00 53.1%,#94d100 55.8%,#279a00 57.9%,#025e09 59.9%,#003345 61.5%,#001882 62.6%,#0004e7 64.1%,#00e 64.7%,#000013 66.8%,#000 67.3%,#000 69.9%,#00001d 70.4%,#0000f9 73%,#0004e8 73.6%,#00129a 75.1%,#002b55 76.7%,#005b0a 79.3%,#1f9700 83%,#45aa00 84.6%,#6abc00 86.6%,#80c700 89.3%,#77c200 94.5%,#4cad00 99.7%)"></i><i style="left:228px;width:2.5px;background:linear-gradient(#000 0.3%,#000 12.8%,#00000c 13.4%,#00d 16%,#0001fb 16.5%,#001393 18.6%,#002f4c 20.2%,#005a0a 22.3%,#1d9400 24.9%,#95d200 28%,#fffd00 31.7%,#ffb300 34.8%,#ff7300 38.5%,#ff5700 41.1%,#ff4e00 43.7%,#f50 45.3%,#ff7100 47.4%,#ffb800 50.5%,#fff900 52.6%,#f3fa00 53.1%,#a3d800 55.2%,#1f9700 57.9%,#015b0a 59.9%,#003148 61.5%,#001785 62.6%,#0004e8 64.1%,#0000ed 64.7%,#000015 66.8%,#000 67.3%,#000 69.9%,#000013 70.4%,#0000ed 73%,#0003f0 73.6%,#00158b 75.7%,#003149 77.2%,#00570f 79.3%,#036009 79.8%,#1c9201 83%,#3ca500 84.6%,#69bb00 87.2%,#7ac400 89.3%,#73c100 94.5%,#4aac00 99.7%)"></i><i style="left:230px;width:2.5px;background:linear-gradient(#000 0.3%,#000 12.8%,#0000f3 16%,#0003ec 16.5%,#001687 18.6%,#003442 20.2%,#005512 21.7%,#036009 22.3%,#239800 24.9%,#9cd400 28%,#f8fc00 31.2%,#fff900 31.7%,#ffbc00 34.3%,#ff7b00 38%,#ff5e00 40.6%,#ff5300 43.2%,#ff5c00 45.3%,#ff7900 47.4%,#ffb300 50%,#fdfe00 52.6%,#9bd400 55.2%,#1d9300 57.9%,#076808 59.4%,#00590c 59.9%,#00304b 61.5%,#001687 62.6%,#0004e9 64.1%,#0000ec 64.7%,#000018 66.8%,#000 67.3%,#000 69.9%,#00000a 70.4%,#0000e1 73%,#0001f8 73.6%,#001394 75.7%,#002d52 77.2%,#005b0a 79.8%,#1d9400 83.5%,#3ea600 85.1%,#61b700 87.2%,#76c200 89.8%,#70bf00 94.5%,#49ab00 99.7%)"></i><i style="left:232px;width:2.5px;background:linear-gradient(#000 0.3%,#000 12.3%,#000012 12.8%,#0000e0 15.4%,#0001f9 16%,#001393 18.1%,#002f4d 19.6%,#005a0b 21.7%,#1c9201 24.3%,#b2de00 28.5%,#fbfd00 31.2%,#fff500 31.7%,#ffba00 34.3%,#ff7c00 38%,#ff6000 40.6%,#ff5800 43.2%,#ff5e00 44.8%,#ff7800 46.9%,#fb0 50%,#fff800 52.1%,#f5fb00 52.6%,#a9da00 54.7%,#1b9001 57.9%,#066608 59.4%,#00570f 59.9%,#003c37 61%,#001589 62.6%,#0004ea 64.1%,#0000ec 64.7%,#00001b 66.8%,#000 67.3%,#000 70.4%,#0000fc 73.6%,#001786 76.2%,#003247 77.7%,#005610 79.8%,#025f09 80.4%,#1e9500 84%,#34a100 85.1%,#5fb700 87.7%,#70bf00 89.8%,#6cbd00 94.5%,#47aa00 99.7%)"></i><i style="left:234px;width:2.5px;background:linear-gradient(#000 0.3%,#000 12.3%,#0000f5 15.4%,#0003eb 16%,#001687 18.1%,#003443 19.6%,#025f09 21.7%,#1f9600 24.3%,#97d200 27.5%,#ff0 31.2%,#ffb800 34.3%,#ff8400 37.4%,#ff6700 40.1%,#ff5d00 42.7%,#ff6500 44.8%,#ff8000 46.9%,#ffb600 49.5%,#feff00 52.1%,#a2d700 54.7%,#279b00 57.3%,#046309 59.4%,#005512 59.9%,#002d51 61.5%,#00148c 62.6%,#0004eb 64.1%,#0000ec 64.7%,#00001e 66.8%,#000 67.3%,#000 70.4%,#000020 70.9%,#0000ef 73.6%,#0003f0 74.1%,#00138f 76.2%,#002e50 77.7%,#00590b 80.4%,#1e9600 84.6%,#35a100 85.6%,#5db500 88.2%,#6bbd00 90.3%,#65ba00 95%,#44a900 99.7%)"></i><i style="left:236px;width:2.5px;background:linear-gradient(#000 0.3%,#000 11.8%,#000016 12.3%,#0000e2 14.9%,#0001f8 15.4%,#001393 17.5%,#002f4d 19.1%,#00590c 21.2%,#1b9001 23.8%,#289b00 24.3%,#9dd500 27.5%,#daef00 29.6%,#fffc00 31.2%,#ffb700 34.3%,#ff8500 37.4%,#ff6a00 40.1%,#ff6100 42.7%,#ff6700 44.2%,#ff8000 46.3%,#ffb100 49%,#fff700 51.6%,#f7fc00 52.1%,#9bd400 54.7%,#219700 57.3%,#036009 59.4%,#005315 59.9%,#002c54 61.5%,#00148e 62.6%,#0003eb 64.1%,#0000eb 64.7%,#000021 66.8%,#000 67.3%,#000 70.4%,#000015 70.9%,#0000e1 73.6%,#0001f9 74.1%,#001883 76.7%,#003247 78.3%,#015d0a 80.9%,#1f9600 85.1%,#34a100 86.1%,#59b400 88.7%,#66ba00 90.8%,#61b700 95%,#41a800 99.7%)"></i><i style="left:238px;width:2.5px;background:linear-gradient(#000 0.3%,#000004 11.8%,#0000f7 14.9%,#0004ea 15.4%,#001687 17.5%,#034 19.1%,#025e09 21.2%,#1d9400 23.8%,#a2d700 27.5%,#f9fc00 30.6%,#fff900 31.2%,#ffb600 34.3%,#ff8700 37.4%,#ff7100 39.5%,#f60 42.1%,#ff6e00 44.2%,#f80 46.3%,#ffb900 49%,#ff0 51.6%,#94d100 54.7%,#1d9400 57.3%,#025e09 59.4%,#00442b 60.5%,#002b57 61.5%,#00138f 62.6%,#0003ec 64.1%,#0000ec 64.7%,#000024 66.8%,#000 67.3%,#000 70.4%,#000008 70.9%,#0000f9 74.1%,#0004ea 74.6%,#00148e 76.7%,#002d52 78.3%,#004f1a 80.4%,#035f09 81.4%,#1f9600 85.6%,#299c00 86.1%,#50af00 88.7%,#5fb700 90.8%,#5cb500 95%,#3ea600 99.7%)"></i><i style="left:240px;width:2.5px;background:linear-gradient(#000 0.3%,#000 11.3%,#00001a 11.8%,#0000e4 14.4%,#0001f7 14.9%,#001393 17%,#002e4f 18.6%,#00580e 20.7%,#239900 23.8%,#a8da00 27.5%,#fcfe00 30.6%,#fff600 31.2%,#ffb500 34.3%,#f80 37.4%,#ff7100 40.1%,#ff6b00 42.1%,#ff7500 44.2%,#ff8700 45.8%,#ffb500 48.4%,#fff600 51%,#f8fc00 51.6%,#b5df00 53.7%,#1c9101 57.3%,#015c0a 59.4%,#002a59 61.5%,#001391 62.6%,#0003ec 64.1%,#0000ec 64.7%,#000028 66.8%,#000 67.3%,#000 70.9%,#0000e8 74.1%,#0002f5 74.6%,#001784 77.2%,#00304a 78.8%,#00590c 81.4%,#1e9600 86.1%,#279b00 86.6%,#46aa00 88.7%,#59b300 91.4%,#54b100 95.5%,#3aa400 99.7%)"></i><i style="left:242px;width:2.5px;background:linear-gradient(#000 0.3%,#000 10.7%,#000008 11.3%,#0000f9 14.4%,#0004e9 14.9%,#001687 17%,#003345 18.6%,#015c0a 20.7%,#1c9301 23.3%,#addc00 27.5%,#ff0 30.6%,#fff300 31.2%,#ffb500 34.3%,#ff8a00 37.4%,#ff7400 40.1%,#ff7000 42.1%,#ff7b00 44.2%,#ff9f00 46.9%,#ffc800 49%,#fffe00 51%,#9bd400 54.2%,#289b00 56.8%,#1a8f01 57.3%,#005a0a 59.4%,#003542 61%,#001392 62.6%,#0003ec 64.1%,#0000ed 64.7%,#000 67.3%,#000 70.9%,#000015 71.5%,#0000fc 74.6%,#001390 77.2%,#003345 79.3%,#005a0a 81.9%,#259900 87.2%,#47aa00 89.8%,#52b000 91.9%,#4eae00 95.5%,#36a200 99.7%)"></i><i style="left:244px;width:2.5px;background:linear-gradient(#000 0.3%,#000 10.7%,#00001f 11.3%,#0000e7 13.9%,#0002f6 14.4%,#001393 16.5%,#002e4f 18.1%,#00570f 20.2%,#209700 23.3%,#a3d700 27%,#fffc00 30.6%,#ffc600 33.2%,#ff9e00 35.9%,#ff7e00 39%,#ff7500 41.6%,#ff7e00 43.7%,#ff9e00 46.3%,#ffc400 48.4%,#fff700 50.5%,#f9fc00 51%,#a7d900 53.7%,#229800 56.8%,#066508 58.9%,#00580d 59.4%,#034 61%,#001393 62.6%,#0003eb 64.1%,#0000ef 64.7%,#000001 67.3%,#000 70.9%,#000006 71.5%,#0000ea 74.6%,#0002f5 75.1%,#001589 77.7%,#002d51 79.3%,#015b0a 82.5%,#1d9300 87.2%,#3ca500 89.8%,#4aac00 91.9%,#48ab00 95.5%,#31a000 99.7%)"></i><i style="left:246px;width:2.5px;background:linear-gradient(#000 0.3%,#000 10.2%,#00000d 10.7%,#0000fb 13.9%,#001687 16.5%,#003345 18.1%,#015b0a 20.2%,#1b9101 22.8%,#289b00 23.3%,#a8da00 27%,#f9fc00 30.1%,#fff900 30.6%,#ffc500 33.2%,#ff9f00 35.9%,#ff8400 38.5%,#ff7a00 41.1%,#ff8000 43.2%,#ff9d00 45.8%,#ffc000 47.9%,#fffe00 50.5%,#a0d600 53.7%,#1e9500 56.8%,#056308 58.9%,#00570f 59.4%,#003245 61%,#001394 62.6%,#0004eb 64.1%,#0000f1 64.7%,#000007 67.3%,#000 67.8%,#000 71.5%,#00001d 72%,#0000fb 75.1%,#001296 77.7%,#002f4c 79.8%,#015c0a 83%,#178802 86.6%,#1e9500 88.2%,#3ba400 90.8%,#44a900 94.5%,#2d9d00 99.7%)"></i><i style="left:248px;width:2.5px;background:linear-gradient(#000 0.3%,#000 10.2%,#0000e9 13.4%,#0002f4 13.9%,#001393 16%,#002e50 17.5%,#005610 19.6%,#1d9500 22.8%,#addc00 27%,#fcfe00 30.1%,#fff700 30.6%,#ffc400 33.2%,#ffa000 35.9%,#ff8700 38.5%,#ff7f00 41.1%,#ff8700 43.2%,#ffa400 45.8%,#ffc700 47.9%,#fff800 50%,#f9fc00 50.5%,#acdb00 53.1%,#1c9301 56.8%,#046109 58.9%,#005512 59.4%,#003247 61%,#001295 62.6%,#0004ea 64.1%,#0000f2 64.7%,#00000d 67.3%,#000 67.8%,#000 71.5%,#00000c 72%,#0000e8 75.1%,#0001f8 75.7%,#00138f 78.3%,#003148 80.4%,#015c0a 83.5%,#168703 87.2%,#1f9700 89.3%,#34a100 91.4%,#3ba500 95%,#279b00 99.7%)"></i><i style="left:250px;width:2.5px;background:linear-gradient(#000 0.3%,#000 9.7%,#000012 10.2%,#0000fd 13.4%,#001687 16%,#003246 17.5%,#005a0a 19.6%,#249900 22.8%,#71bf00 24.9%,#b1de00 27%,#feff00 30.1%,#fff400 30.6%,#ffc300 33.2%,#ffa100 35.9%,#ff8a00 38.5%,#ff8400 41.1%,#ff8e00 43.2%,#ffab00 45.8%,#ffcf00 47.9%,#ff0 50%,#93d100 53.7%,#299b00 56.3%,#1b9001 56.8%,#035f09 58.9%,#005414 59.4%,#003149 61%,#001295 62.6%,#0004e9 64.1%,#0000f4 64.7%,#000013 67.3%,#000 67.8%,#000 72%,#0000f6 75.7%,#0003ef 76.2%,#00158a 78.8%,#003245 80.9%,#015c0a 84%,#158503 87.7%,#299c00 91.4%,#34a100 95%,#229800 99.7%)"></i><i style="left:252px;width:2.5px;background:linear-gradient(#000 0.3%,#000001 9.7%,#0000ec 12.8%,#0002f3 13.4%,#001393 15.4%,#002d51 17%,#005512 19.1%,#035f09 19.6%,#1d9300 22.3%,#99d300 25.9%,#d1eb00 28%,#fffd00 30.1%,#ffcb00 32.7%,#ffa700 35.3%,#ff8e00 38.5%,#f80 40.6%,#ff9000 42.7%,#fa0 45.3%,#fc0 47.4%,#fff900 49.5%,#f8fc00 50%,#9fd600 53.1%,#239900 56.3%,#025e09 58.9%,#00304b 61%,#001296 62.6%,#0004e8 64.1%,#0000f7 64.7%,#000018 67.3%,#000 67.8%,#000 72%,#000010 72.5%,#0000e3 75.7%,#0001fc 76.2%,#001297 78.8%,#002d52 80.9%,#00422e 82.5%,#015c0a 84.6%,#148303 88.2%,#229800 91.9%,#2c9d00 95%,#1d9500 99.7%)"></i><i style="left:254px;width:2.5px;background:linear-gradient(#000 0.3%,#000 9.2%,#000017 9.7%,#00f 12.8%,#001687 15.4%,#003246 17%,#00590b 19.1%,#209700 22.3%,#9ed500 25.9%,#e1f200 28.5%,#fffb00 30.1%,#ffd300 32.2%,#ffae00 34.8%,#ff9700 37.4%,#ff8d00 40.1%,#ff9300 42.1%,#fa0 44.8%,#ffc900 46.9%,#feff00 49.5%,#98d300 53.1%,#1e9600 56.3%,#015c0a 58.9%,#002f4c 61%,#001296 62.6%,#0004e7 64.1%,#0000f9 64.7%,#00001e 67.3%,#000 67.8%,#000 72.5%,#0000f1 76.2%,#0002f3 76.7%,#001392 79.3%,#002e50 81.4%,#015b0a 85.1%,#117c04 88.2%,#1c9301 91.9%,#239900 95%,#1c9201 99.7%)"></i><i style="left:256px;width:2.5px;background:linear-gradient(#000 0.3%,#000 8.6%,#000006 9.2%,#00e 12.3%,#0002f2 12.8%,#001393 14.9%,#002d51 16.5%,#025e09 19.1%,#1c9101 21.7%,#a3d700 25.9%,#fafd00 29.6%,#fff900 30.1%,#ffca00 32.7%,#ffaf00 34.8%,#ff9a00 37.4%,#ff9200 40.1%,#ff9c00 42.7%,#ffb000 44.8%,#ffd000 46.9%,#fffb00 49%,#def100 50.5%,#a3d700 52.6%,#1d9300 56.3%,#005a0a 58.9%,#002f4e 61%,#001297 62.6%,#0000fb 64.7%,#000024 67.3%,#000 67.8%,#000 72.5%,#000013 73%,#0000fe 76.7%,#00148d 79.8%,#002f4d 81.9%,#005b0a 85.6%,#127e04 89.3%,#1b8f01 92.4%,#1d9400 95.5%,#1a8f01 99.7%)"></i><i style="left:258px;width:2.5px;background:linear-gradient(#000 0.3%,#000 8.6%,#00001c 9.2%,#0000fd 12.3%,#001687 14.9%,#003147 16.5%,#00580c 18.6%,#1e9500 21.7%,#a7d900 25.9%,#fdfe00 29.6%,#fff700 30.1%,#ffca00 32.7%,#ffab00 35.3%,#ff9a00 38%,#ff9700 40.1%,#ff9e00 42.1%,#ffb000 44.2%,#ffce00 46.3%,#fcfe00 49%,#9dd500 52.6%,#299b00 55.8%,#1b9101 56.3%,#056408 58.4%,#00590c 58.9%,#002e50 61%,#001297 62.6%,#0000fd 64.7%,#000 67.8%,#000003 73%,#0000eb 76.7%,#0001f8 77.2%,#001589 80.4%,#00304b 82.5%,#005a0a 86.1%,#0f7805 89.3%,#188a02 92.4%,#1b9001 95.5%,#198c02 99.7%)"></i><i style="left:260px;width:2.5px;background:linear-gradient(#000 0.3%,#000 8.1%,#00000b 8.6%,#0000f0 11.8%,#0003f0 12.3%,#001393 14.4%,#002d52 16%,#015d0a 18.6%,#249900 21.7%,#6dbe00 23.8%,#abdb00 25.9%,#ff0 29.6%,#fff500 30.1%,#ffd100 32.2%,#ffb100 34.8%,#ff9f00 37.4%,#ff9b00 39.5%,#ffa300 42.1%,#ffb600 44.2%,#ffd400 46.3%,#fffd00 48.4%,#d1eb00 50.5%,#96d200 52.6%,#249900 55.8%,#046209 58.4%,#00570e 58.9%,#002d51 61%,#001298 62.6%,#00f 64.7%,#000005 67.8%,#000 68.3%,#000 73%,#000016 73.6%,#0000f8 77.2%,#0003f0 77.7%,#001295 80.4%,#00304a 83%,#00590b 86.6%,#0e7605 89.8%,#168703 92.9%,#178802 99.7%)"></i><i style="left:262px;width:2.5px;background:linear-gradient(#000 0.3%,#000 8.1%,#000020 8.6%,#0000de 11.3%,#0001fc 11.8%,#001688 14.4%,#003148 16%,#00570e 18.1%,#1d9300 21.2%,#a2d700 25.4%,#fffe00 29.6%,#ffd100 32.2%,#ffb700 34.3%,#ffa400 36.9%,#ff9f00 39%,#ffa300 41.1%,#ffb100 43.2%,#ffca00 45.3%,#fbfd00 48.4%,#a0d600 52.1%,#1e9600 55.8%,#036009 58.4%,#005611 58.9%,#002c53 61%,#001298 62.6%,#0000fe 64.7%,#00000b 67.8%,#000 68.3%,#000 73%,#000007 73.6%,#0000c8 76.7%,#0001fc 77.7%,#001391 80.9%,#003148 83.5%,#00580c 87.2%,#0d7306 90.3%,#158303 93.5%,#158503 99.7%)"></i><i style="left:264px;width:2.5px;background:linear-gradient(#000 0.3%,#000 7.6%,#00000f 8.1%,#0000f2 11.3%,#0003f0 11.8%,#001393 13.9%,#003641 16%,#015c0a 18.1%,#209700 21.2%,#98d300 24.9%,#d8ee00 27.5%,#fffc00 29.6%,#ffd800 31.7%,#ffb900 34.3%,#ffa700 36.9%,#ffa200 39%,#ffa800 41.1%,#ffb700 43.2%,#ffd100 45.3%,#ff0 47.9%,#9ad400 52.1%,#1d9400 55.8%,#025f09 58.4%,#004a22 59.4%,#002c55 61%,#001299 62.6%,#0000fd 64.7%,#0000db 65.2%,#000010 67.8%,#000 68.3%,#000 73.6%,#0000f4 77.7%,#0002f3 78.3%,#00148c 81.4%,#003246 84%,#00580e 87.7%,#127e04 93.5%,#148103 99.7%)"></i><i style="left:266px;width:2.5px;background:linear-gradient(#000 0.3%,#000 7.6%,#0000e0 10.7%,#0001fb 11.3%,#001688 13.9%,#00304a 15.4%,#00560f 17.5%,#1c9101 20.7%,#aadb00 25.4%,#e6f400 28%,#fffa00 29.6%,#ffd800 31.7%,#ffba00 34.3%,#ffa600 38.5%,#ffad00 41.1%,#ffbd00 43.2%,#fffb00 47.4%,#e3f300 49%,#a3d700 51.6%,#1c9101 55.8%,#015d0a 58.4%,#002b56 61%,#00129a 62.6%,#0001fc 64.7%,#00d 65.2%,#000015 67.8%,#000 68.3%,#000 73.6%,#00000e 74.1%,#00a 76.7%,#0000fe 78.3%,#001297 81.4%,#002e50 84%,#00570f 88.2%,#117b04 94%,#127e04 99.7%)"></i><i style="left:268px;width:2.5px;background:linear-gradient(#000 0.3%,#000 7.1%,#000012 7.6%,#0000f3 10.7%,#0003ef 11.3%,#001393 13.4%,#003542 15.4%,#005a0a 17.5%,#1d9500 20.7%,#a1d700 24.9%,#e8f500 28%,#fcfe00 29.1%,#fff900 29.6%,#ffd800 31.7%,#fb0 34.3%,#fa0 38.5%,#ffbd00 42.7%,#fcfe00 47.4%,#9dd500 51.6%,#239800 55.2%,#015b0a 58.4%,#003444 60.5%,#001884 62%,#0001fb 64.7%,#0000de 65.2%,#00001a 67.8%,#000 68.3%,#000001 74.1%,#0000f2 78.3%,#0002f5 78.8%,#001392 81.9%,#002e4e 84.6%,#005610 88.7%,#0e7605 94%,#107a05 99.7%)"></i><i style="left:270px;width:2.5px;background:linear-gradient(#000 0.3%,#000001 7.1%,#0000e1 10.2%,#0001fb 10.7%,#001589 13.4%,#00304b 14.9%,#051 17%,#025f09 17.5%,#239800 20.7%,#69bb00 22.8%,#a5d800 24.9%,#fdfe00 29.1%,#fff800 29.6%,#ffd200 32.2%,#ffbd00 34.3%,#ffae00 38.5%,#ffc300 42.7%,#fffe00 46.9%,#d7ee00 49%,#97d200 51.6%,#1e9600 55.2%,#00590b 58.4%,#003345 60.5%,#001785 62%,#0001fb 64.7%,#0000e0 65.2%,#00001e 67.8%,#000 68.3%,#000 74.1%,#000015 74.6%,#00f 78.8%,#00119c 81.9%,#002a59 84.6%,#003442 85.6%,#005117 88.7%,#015d0a 90.3%,#0d7306 94.5%,#0e7605 99.7%)"></i><i style="left:272px;width:2.5px;background:linear-gradient(#000 0.3%,#000 6.5%,#000015 7.1%,#0000f3 10.2%,#0003ef 10.7%,#001394 12.8%,#003443 14.9%,#00590c 17%,#1c9301 20.2%,#a8da00 24.9%,#feff00 29.1%,#fff700 29.6%,#ffc300 33.8%,#ffb100 38%,#ffc400 42.1%,#fffb00 46.3%,#dcf000 48.4%,#9fd600 51%,#1d9300 55.2%,#046209 57.9%,#00580d 58.4%,#003247 60.5%,#001786 62%,#0001fa 64.7%,#0000e1 65.2%,#000 68.3%,#000 74.1%,#000009 74.6%,#0000f0 78.8%,#0001f7 79.3%,#000fa7 81.9%,#002663 84.6%,#003542 86.1%,#004c1f 88.7%,#005b0a 90.8%,#0b6f06 95%,#0c7206 99.7%)"></i><i style="left:274px;width:2.5px;background:linear-gradient(#000 0.3%,#000003 6.5%,#0000e1 9.7%,#0001fb 10.2%,#00158a 12.8%,#002f4d 14.4%,#025d09 17%,#1e9600 20.2%,#9fd600 24.3%,#d9ef00 27%,#ff0 29.1%,#ffd900 31.7%,#ffc400 33.8%,#ffb500 38%,#ffc900 42.1%,#fdfe00 46.3%,#cbe900 49%,#99d300 51%,#269a00 54.7%,#036009 57.9%,#005610 58.4%,#003149 60.5%,#001687 62%,#0001fa 64.7%,#0000e2 65.2%,#000 68.3%,#000 74.6%,#0000fb 79.3%,#001394 83%,#002661 85.1%,#003542 86.6%,#004726 88.7%,#015c0a 91.9%,#096c07 95.5%,#0a6d07 99.7%)"></i><i style="left:276px;width:2.5px;background:linear-gradient(#000 0.3%,#000 6%,#000017 6.5%,#0000f3 9.7%,#0003f0 10.2%,#001981 12.8%,#003345 14.4%,#00570e 16.5%,#249900 20.2%,#a2d700 24.3%,#dbf000 27%,#fffe00 29.1%,#ffca00 33.2%,#ffb800 37.4%,#ffca00 41.6%,#fffe00 45.8%,#dbef00 47.9%,#a1d700 50.5%,#219700 54.7%,#025e09 57.9%,#00304c 60.5%,#001589 62%,#0001fa 64.7%,#0000e2 65.2%,#000003 68.3%,#000 74.6%,#00000f 75.1%,#0000ed 79.3%,#0001fa 79.8%,#001d78 84.6%,#00304b 86.6%,#00422e 88.7%,#005a0b 92.4%,#076808 96.1%,#086907 99.7%)"></i><i style="left:278px;width:2.5px;background:linear-gradient(#000 0.3%,#000005 6%,#0000e0 9.2%,#0001fc 9.7%,#00148c 12.3%,#002e50 13.9%,#015b0a 16.5%,#1d9300 19.6%,#a6d900 24.3%,#ddf100 27%,#fffd00 29.1%,#fc0 33.2%,#ffbc00 37.4%,#ffcf00 41.6%,#fffb00 45.3%,#dff100 47.4%,#a8da00 50%,#70bf00 52.1%,#1d9500 54.7%,#015c0a 57.9%,#002f4e 60.5%,#00158b 62%,#0001fb 64.7%,#0000e2 65.2%,#000006 68.3%,#000 68.8%,#000003 75.1%,#0000f7 79.8%,#0002f4 80.4%,#000fa9 83%,#00226b 85.6%,#003d35 88.7%,#005a0b 93.5%,#056508 99.7%)"></i><i style="left:280px;width:2.5px;background:linear-gradient(#000 0.3%,#000 5.5%,#000017 6%,#0000f1 9.2%,#0002f1 9.7%,#001298 11.8%,#003147 13.9%,#005610 16%,#035f09 16.5%,#1f9600 19.6%,#9cd500 23.8%,#d5ed00 26.4%,#fffd00 29.1%,#ffd100 32.7%,#ffbf00 36.9%,#ffcf00 41.1%,#fdfe00 45.3%,#a2d700 50%,#1c9201 54.7%,#005a0a 57.9%,#002e50 60.5%,#00148c 62%,#0001fb 64.7%,#0000e2 65.2%,#000008 68.3%,#000 68.8%,#000 75.1%,#000013 75.7%,#0000b6 78.8%,#0000fe 80.4%,#00148c 84.6%,#003443 88.2%,#004a21 91.4%,#00590c 94.5%,#036009 99.7%)"></i><i style="left:282px;width:2.5px;background:linear-gradient(#000 0.3%,#000005 5.5%,#0000fd 9.2%,#00148f 11.8%,#002d53 13.4%,#00590b 16%,#259900 19.6%,#9fd600 23.8%,#e0f200 27%,#fffc00 29.1%,#ffd300 32.7%,#ffc300 36.9%,#ffd400 41.1%,#ff0 44.8%,#d4ed00 47.4%,#9dd500 50%,#239800 54.2%,#00590c 57.9%,#002d53 60.5%,#00148e 62%,#0001fc 64.7%,#0000e1 65.2%,#00000a 68.3%,#000 68.8%,#000 75.1%,#000007 75.7%,#0000f3 80.4%,#0001f8 80.9%,#00158a 85.1%,#034 88.7%,#005413 94.5%,#015c0a 99.7%)"></i><i style="left:284px;width:2.5px;background:linear-gradient(#000 0.3%,#000 5%,#000017 5.5%,#0000ef 8.6%,#0002f3 9.2%,#001786 11.8%,#00304b 13.4%,#015d0a 16%,#1d9400 19.1%,#a2d700 23.8%,#e2f200 27%,#fffc00 29.1%,#ffd400 32.7%,#ffc600 36.4%,#ffd100 40.1%,#fffc00 44.2%,#e2f200 46.3%,#a4d800 49.5%,#6ebe00 51.6%,#1e9600 54.2%,#036009 57.3%,#00570f 57.9%,#003444 59.9%,#001390 62%,#0000fd 64.7%,#0000e0 65.2%,#00000c 68.3%,#000 68.8%,#000 75.7%,#0000fc 80.9%,#001589 85.6%,#003245 89.3%,#005019 94.5%,#00580e 99.7%)"></i><i style="left:286px;width:2.5px;background:linear-gradient(#000 0.3%,#000004 5%,#0000fe 8.6%,#001392 11.3%,#002b56 12.8%,#00570f 15.4%,#1f9600 19.1%,#6fbf00 21.7%,#a5d800 23.8%,#e3f300 27%,#fffc00 29.1%,#ffd600 32.7%,#ffc900 36.4%,#ffd600 40.1%,#fdfe00 44.2%,#d3ec00 46.9%,#9ed600 49.5%,#1d9300 54.2%,#025e09 57.3%,#003246 59.9%,#001393 62%,#0000fe 64.7%,#00000c 68.3%,#000 68.8%,#000 75.7%,#00000b 76.2%,#0000bf 79.8%,#00e 80.9%,#0001fc 81.4%,#001393 85.6%,#003247 89.8%,#004b20 94.5%,#005413 99.7%)"></i><i style="left:288px;width:2.5px;background:linear-gradient(#000 0.3%,#000 4.5%,#000015 5%,#0000eb 8.1%,#0002f6 8.6%,#001589 11.3%,#002e4f 12.8%,#005a0a 15.4%,#249900 19.1%,#73c100 21.7%,#a8da00 23.8%,#e4f300 27%,#fffc00 29.1%,#ffd700 32.7%,#fc0 36.4%,#ffda00 40.1%,#ff0 43.7%,#d7ee00 46.3%,#a5d800 49%,#71c000 51%,#249900 53.7%,#015c0a 57.3%,#003149 59.9%,#001295 62%,#0000fe 64.7%,#00000c 68.3%,#000 68.8%,#000 76.2%,#009 79.3%,#0000f6 81.4%,#0002f6 81.9%,#001391 86.1%,#003149 90.3%,#004924 95%,#005019 99.7%)"></i><i style="left:290px;width:2.5px;background:linear-gradient(#000 0.3%,#000001 4.5%,#0000f9 8.1%,#0003ec 8.6%,#001296 10.7%,#003148 12.8%,#025d09 15.4%,#1d9300 18.6%,#77c200 21.7%,#aadb00 23.8%,#e5f400 27%,#fffc00 29.1%,#ffdc00 32.2%,#ffcf00 35.9%,#ffda00 39.5%,#fffd00 43.2%,#dbf000 45.8%,#a0d600 49%,#6cbd00 51%,#1f9600 53.7%,#005a0a 57.3%,#00304c 59.9%,#001298 62%,#0000fc 64.7%,#00000c 68.3%,#000 68.8%,#000 76.2%,#00000e 76.7%,#0000a4 79.8%,#0000fe 81.9%,#001390 86.6%,#00304b 90.8%,#00452a 95%,#004c1e 99.7%)"></i><i style="left:292px;width:2.5px;background:linear-gradient(#000 0.3%,#000 3.9%,#000012 4.5%,#0000e6 7.6%,#0001f9 8.1%,#00148e 10.7%,#002c53 12.3%,#00570e 14.9%,#1e9600 18.6%,#6cbd00 21.2%,#a1d700 23.3%,#ddf000 26.4%,#fffc00 29.1%,#ffde00 32.2%,#ffd200 35.9%,#ffdb00 39%,#fcfe00 43.2%,#ceea00 46.3%,#9bd400 49%,#1d9400 53.7%,#036109 56.8%,#00580d 57.3%,#002e4f 59.9%,#001687 61.5%,#0003ee 64.1%,#0000f9 64.7%,#00000b 68.3%,#000 68.8%,#000003 76.7%,#0000c5 80.9%,#0000f1 81.9%,#0001fa 82.5%,#00148f 87.2%,#002f4c 91.4%,#00422d 95.5%,#004924 99.7%)"></i><i style="left:294px;width:2.5px;background:linear-gradient(#000 0.3%,#000 3.9%,#0000f4 7.6%,#0003f0 8.1%,#001686 10.7%,#002f4d 12.3%,#005a0a 14.9%,#229800 18.6%,#6fbf00 21.2%,#a3d800 23.3%,#def100 26.4%,#fffc00 29.1%,#ffdf00 32.2%,#ffd500 35.9%,#ffdf00 39%,#feff00 42.7%,#d2ec00 45.8%,#a1d700 48.4%,#6fbf00 50.5%,#259900 53.1%,#025f09 56.8%,#003542 59.4%,#00158a 61.5%,#0003f0 64.1%,#0000f5 64.7%,#000009 68.3%,#000 68.8%,#000 76.7%,#001 77.2%,#0000a2 80.4%,#0000f9 82.5%,#0002f5 83%,#00148d 87.7%,#002e4e 91.9%,#003e33 95.5%,#004529 99.7%)"></i><i style="left:296px;width:2.5px;background:linear-gradient(#000 0.3%,#000 3.4%,#00000d 3.9%,#0000fe 7.6%,#001393 10.2%,#003246 12.3%,#025d09 14.9%,#1c9201 18.1%,#a5d800 23.3%,#def100 26.4%,#fffd00 29.1%,#ffe100 32.2%,#ffd800 35.3%,#ffe000 38.5%,#fffe00 42.1%,#def100 44.8%,#a7d900 47.9%,#6abc00 50.5%,#209700 53.1%,#015c0a 56.8%,#003345 59.4%,#00148d 61.5%,#0002f3 64.1%,#0000f1 64.7%,#000006 68.3%,#000 68.8%,#000 76.7%,#000006 77.2%,#0000ac 80.9%,#0000fe 83%,#0011a0 87.2%,#00285d 91.4%,#00393c 95%,#00422e 99.7%)"></i><i style="left:298px;width:2.5px;background:linear-gradient(#000 0.3%,#000 3.4%,#00001b 3.9%,#0000ec 7.1%,#0002f5 7.6%,#00148c 10.2%,#002d52 11.8%,#00570e 14.4%,#1d9400 18.1%,#75c200 21.2%,#a7d900 23.3%,#dff100 26.4%,#fffd00 29.1%,#ffe300 32.2%,#ffda00 35.3%,#ffe300 38.5%,#fcfe00 42.1%,#daef00 44.8%,#a3d700 47.9%,#72c000 50%,#1d9500 53.1%,#005a0a 56.8%,#003148 59.4%,#001391 61.5%,#0002f6 64.1%,#0000ed 64.7%,#000004 68.3%,#000 68.8%,#000 77.2%,#0000e1 82.5%,#0000f5 83%,#0001f9 83.5%,#00119e 87.7%,#00285e 91.9%,#003541 95%,#003f33 99.7%)"></i><i style="left:300px;width:2.5px;background:linear-gradient(#000 0.3%,#000 2.9%,#000006 3.4%,#0000f9 7.1%,#0003ed 7.6%,#001299 9.7%,#002f4c 11.8%,#005a0b 14.4%,#1e9600 18.1%,#6abc00 20.7%,#a8da00 23.3%,#dff100 26.4%,#fffe00 29.1%,#ffe400 32.2%,#fd0 35.3%,#ffe600 38.5%,#fefe00 41.6%,#ddf100 44.2%,#a8da00 47.4%,#7bc400 49.5%,#1c9201 53.1%,#036109 56.3%,#00580d 56.8%,#00304b 59.4%,#001394 61.5%,#0001f9 64.1%,#0000e9 64.7%,#000001 68.3%,#000 77.2%,#00000a 77.7%,#000095 80.9%,#0000fd 83.5%,#00119c 88.2%,#002466 91.9%,#003247 95%,#003b38 99.7%)"></i><i style="left:302px;width:2.5px;background:linear-gradient(#000 0.3%,#000 2.9%,#000014 3.4%,#0000e4 6.5%,#0001fb 7.1%,#001392 9.7%,#003246 11.8%,#015c0a 14.4%,#229800 18.1%,#6dbe00 20.7%,#aadb00 23.3%,#e0f200 26.4%,#fffe00 29.1%,#ffe900 31.7%,#ffdf00 34.8%,#ffe700 38%,#ff0 41.1%,#d9ef00 44.2%,#a4d800 47.4%,#69bc00 50%,#219800 52.6%,#025f09 56.3%,#00560f 56.8%,#002e4f 59.4%,#001297 61.5%,#0001fc 64.1%,#0000e4 64.7%,#000 68.3%,#000 77.7%,#0000b5 81.9%,#0000f1 83.5%,#0001fc 84%,#0010a4 88.2%,#00216d 91.9%,#003247 96.1%,#00383d 99.7%)"></i><i style="left:304px;width:2.5px;background:linear-gradient(#000 0.3%,#000 2.9%,#0000f0 6.5%,#0002f3 7.1%,#00148b 9.7%,#002d53 11.3%,#004e1c 13.4%,#025f09 14.4%,#1c9201 17.5%,#96d200 22.3%,#d9ef00 25.9%,#ff0 29.1%,#ffea00 31.7%,#ffe100 34.8%,#ffe700 37.4%,#fcfe00 41.1%,#d6ed00 44.2%,#a0d600 47.4%,#64b900 50%,#1e9500 52.6%,#015d0a 56.3%,#002d52 59.4%,#001688 61%,#0000fe 64.1%,#000 68.3%,#000 77.7%,#00000d 78.3%,#000094 81.4%,#0000f9 84%,#0001f7 84.6%,#00129a 89.3%,#00216f 92.4%,#002f4e 96.1%,#003542 99.7%)"></i><i style="left:306px;width:2.5px;background:linear-gradient(#000 0.3%,#000 2.4%,#00000c 2.9%,#0000fc 6.5%,#001298 9.2%,#002f4d 11.3%,#00590c 13.9%,#1d9400 17.5%,#98d300 22.3%,#e1f200 26.4%,#ff0 29.1%,#fffa00 29.6%,#ffe900 32.2%,#ffe400 34.8%,#ffea00 37.4%,#fffc00 40.1%,#f9fc00 41.1%,#d2ec00 44.2%,#9cd500 47.4%,#1d9300 52.6%,#005b0a 56.3%,#003345 58.9%,#00158b 61%,#0000fb 64.1%,#000019 67.8%,#000 68.3%,#000004 78.3%,#00009f 81.9%,#0000fe 84.6%,#000db3 88.2%,#001b7c 91.9%,#002c55 96.1%,#003247 99.7%)"></i><i style="left:308px;width:2.5px;background:linear-gradient(#000 0.3%,#000 2.4%,#00001a 2.9%,#0000e6 6%,#0001fa 6.5%,#001392 9.2%,#003148 11.3%,#005b0a 13.9%,#1e9600 17.5%,#68bb00 20.2%,#9ad400 22.3%,#e1f200 26.4%,#feff00 29.1%,#fffb00 29.6%,#ffea00 32.2%,#ffe600 34.8%,#fafd00 40.6%,#d6ed00 43.7%,#a2d700 46.9%,#69bb00 49.5%,#239900 52.1%,#00590c 56.3%,#003147 58.9%,#00148e 61%,#0003f0 63.6%,#0000f7 64.1%,#000015 67.8%,#000 68.3%,#000 78.3%,#0000d0 83.5%,#0000f5 84.6%,#0001fa 85.1%,#000db2 88.7%,#001a7d 92.4%,#00295c 96.1%,#002f4d 99.7%)"></i><i style="left:310px;width:2.5px;background:linear-gradient(#000 0.3%,#000004 2.4%,#0000f1 6%,#0002f2 6.5%,#00148c 9.2%,#003443 11.3%,#025d09 13.9%,#219800 17.5%,#90cf00 21.7%,#daef00 25.9%,#fffc00 29.6%,#ffe800 34.3%,#ffed00 36.9%,#fffe00 39.5%,#f7fc00 40.6%,#d2ec00 43.7%,#9fd600 46.9%,#65b900 49.5%,#1f9600 52.1%,#035f09 55.8%,#00570e 56.3%,#00304b 58.9%,#001391 61%,#0002f2 63.6%,#0000f3 64.1%,#000012 67.8%,#000 68.3%,#000 78.3%,#000008 78.8%,#00009e 82.5%,#0000fc 85.1%,#000eb0 89.3%,#001784 92.4%,#002662 96.1%,#002c54 99.7%)"></i><i style="left:312px;width:2.5px;background:linear-gradient(#000 0.3%,#000 1.8%,#000010 2.4%,#0000fc 6%,#001786 9.2%,#002e4f 10.7%,#00570e 13.4%,#259900 17.5%,#92d000 21.7%,#daef00 25.9%,#fffd00 29.6%,#ffea00 34.3%,#fffc00 39%,#f4fa00 40.6%,#cfea00 43.7%,#9bd400 46.9%,#1d9400 52.1%,#025d09 55.8%,#002f4e 58.9%,#001394 61%,#0002f5 63.6%,#0000ef 64.1%,#00000f 67.8%,#000 68.3%,#000 78.8%,#0000a8 83%,#0000f2 85.1%,#0000fd 85.6%,#000cb7 89.3%,#00158b 92.4%,#002369 96.1%,#002a5a 99.7%)"></i><i style="left:314px;width:2.5px;background:linear-gradient(#000 0.3%,#000 1.8%,#0000e7 5.5%,#0001fa 6%,#001393 8.6%,#00304a 10.7%,#00590b 13.4%,#1d9300 17%,#94d100 21.7%,#daef00 25.9%,#fffd00 29.6%,#ffec00 33.8%,#fff000 36.4%,#ff0 39%,#f1f900 40.6%,#cce900 43.7%,#a1d700 46.3%,#1c9201 52.1%,#015b0a 55.8%,#002d51 58.9%,#001297 61%,#0001f8 63.6%,#0000ea 64.1%,#00000b 67.8%,#000 68.3%,#000 78.8%,#00000c 79.3%,#00009d 83%,#0000f8 85.6%,#0001f8 86.1%,#000db6 89.8%,#00148b 92.9%,#00226c 96.6%,#002760 99.7%)"></i><i style="left:316px;width:2.5px;background:linear-gradient(#000 0.3%,#000007 1.8%,#0000f1 5.5%,#0002f3 6%,#00148d 8.6%,#003345 10.7%,#015b0a 13.4%,#1e9500 17%,#95d200 21.7%,#dbef00 25.9%,#fffe00 29.6%,#fe0 33.8%,#fffe00 38.5%,#eef800 40.6%,#d0eb00 43.2%,#9ed500 46.3%,#65ba00 49%,#219800 51.6%,#00590b 55.8%,#002c54 58.9%,#001688 60.5%,#0001fb 63.6%,#0000e6 64.1%,#000008 67.8%,#000 68.3%,#000002 79.3%,#000093 83%,#00f 86.1%,#000cbc 89.8%,#001392 92.9%,#001e76 96.1%,#002466 99.7%)"></i><i style="left:318px;width:2.5px;background:linear-gradient(#000 0.3%,#000 1.3%,#000013 1.8%,#0000fc 5.5%,#001688 8.6%,#002d51 10.2%,#025e09 13.4%,#1f9700 17%,#97d200 21.7%,#dbef00 25.9%,#f7fb00 28.5%,#fffc00 30.1%,#fff000 33.8%,#fffe00 38%,#ebf700 40.6%,#cce900 43.2%,#9ad400 46.3%,#61b800 49%,#1e9600 51.6%,#036009 55.2%,#00580d 55.8%,#003247 58.4%,#00148b 60.5%,#0000fe 63.6%,#000004 67.8%,#000 68.3%,#000 79.3%,#0000c2 84.6%,#0000f5 86.1%,#0001fb 86.6%,#000cbb 90.3%,#001392 93.5%,#001d78 96.6%,#00226b 99.7%)"></i><i style="left:320px;width:2.5px;background:linear-gradient(#000 0.3%,#000 1.3%,#0000e6 5%,#0001fa 5.5%,#001295 8.1%,#002f4c 10.2%,#00570e 12.8%,#229800 17%,#98d300 21.7%,#dbef00 25.9%,#fffd00 30.1%,#fff200 33.8%,#fffd00 37.4%,#e8f500 40.6%,#c9e800 43.2%,#96d200 46.3%,#1d9400 51.6%,#025e09 55.2%,#00304a 58.4%,#00148f 60.5%,#0000fb 63.6%,#000 67.8%,#000 79.3%,#000006 79.8%,#000093 83.5%,#0000fb 86.6%,#000cb9 90.8%,#001298 93.5%,#001a7e 96.6%,#002070 99.7%)"></i><i style="left:322px;width:2.5px;background:linear-gradient(#000 0.3%,#000009 1.3%,#0000f1 5%,#0002f4 5.5%,#00138f 8.1%,#003148 10.2%,#00590b 12.8%,#1c9201 16.5%,#99d300 21.7%,#dbef00 25.9%,#fffe00 30.1%,#fff400 33.8%,#feff00 37.4%,#e5f400 40.6%,#9cd500 45.8%,#65ba00 48.4%,#239900 51%,#015c0a 55.2%,#002f4e 58.4%,#001392 60.5%,#0003f1 63.1%,#0000f7 63.6%,#000 67.8%,#000 79.8%,#0000af 84.6%,#0000fd 87.2%,#000ac7 90.3%,#00119e 93.5%,#001883 96.6%,#001e75 99.7%)"></i><i style="left:324px;width:2.5px;background:linear-gradient(#000 0.3%,#000 0.8%,#000014 1.3%,#0000fb 5%,#0003ed 5.5%,#00158a 8.1%,#003444 10.2%,#015b0a 12.8%,#1d9400 16.5%,#9ad400 21.7%,#e1f200 26.4%,#fffd00 30.6%,#fff600 33.8%,#feff00 36.9%,#e2f300 40.6%,#99d300 45.8%,#61b800 48.4%,#1f9700 51%,#005a0a 55.2%,#002d51 58.4%,#001295 60.5%,#0002f4 63.1%,#0000f2 63.6%,#000019 67.3%,#000 67.8%,#000 79.8%,#000009 80.4%,#000093 84%,#0000f9 87.2%,#0001f9 87.7%,#000ac5 90.8%,#00119e 94%,#001688 96.6%,#001c7a 99.7%)"></i><i style="left:326px;width:2.5px;background:linear-gradient(#000 0.3%,#000 0.8%,#0000e5 4.5%,#0001fb 5%,#001297 7.6%,#002e4f 9.7%,#025e09 12.8%,#1e9500 16.5%,#62b800 19.1%,#9bd400 21.7%,#e0f200 26.4%,#fffe00 30.6%,#fff800 33.2%,#feff00 36.4%,#dff100 40.6%,#95d100 45.8%,#1d9400 51%,#00580d 55.2%,#003345 57.9%,#001687 59.9%,#0001f7 63.1%,#0000ed 63.6%,#000014 67.3%,#000 67.8%,#000 80.4%,#00009c 84.6%,#00f 87.7%,#0009ca 90.8%,#0010a3 94%,#00148c 96.6%,#001a7e 99.7%)"></i><i style="left:328px;width:2.5px;background:linear-gradient(#000 0.3%,#00000a 0.8%,#0000ef 4.5%,#0002f5 5%,#001392 7.6%,#00304b 9.7%,#00570e 12.3%,#036009 12.8%,#1f9600 16.5%,#64b900 19.1%,#9cd500 21.7%,#e0f200 26.4%,#fffe00 31.2%,#fefe00 35.9%,#dcf000 40.6%,#9ad400 45.3%,#1c9201 51%,#025e09 54.7%,#003148 57.9%,#00158b 59.9%,#0001fa 63.1%,#0000e8 63.6%,#000010 67.3%,#000 67.8%,#000 80.4%,#00000b 80.9%,#0000c7 86.1%,#0000f6 87.7%,#0001fb 88.2%,#000ac8 91.4%,#000fa8 94%,#00148d 97.1%,#001882 99.7%)"></i><i style="left:330px;width:2.5px;background:linear-gradient(#000 0.3%,#000015 0.8%,#0000f9 4.5%,#0003ef 5%,#00148d 7.6%,#003247 9.7%,#00590b 12.3%,#229800 16.5%,#93d100 21.2%,#bfe300 23.8%,#dff100 26.4%,#f5fb00 29.1%,#fffe00 31.7%,#fbfd00 35.9%,#d9ef00 40.6%,#97d200 45.3%,#61b700 47.9%,#209700 50.5%,#015c0a 54.7%,#00304c 57.9%,#00148e 59.9%,#0000fe 63.1%,#00000c 67.3%,#000 67.8%,#000001 80.9%,#00009c 85.1%,#0000fd 88.2%,#000eac 94%,#001392 97.1%,#001786 99.7%)"></i><i style="left:332px;width:2.5px;background:linear-gradient(#000 0.3%,#0000e3 3.9%,#0000fd 4.5%,#001688 7.6%,#002c53 9.2%,#005b0a 12.3%,#249900 16.5%,#94d100 21.2%,#cde900 24.9%,#f0f900 28.5%,#ff0 32.7%,#f3fa00 36.9%,#d0eb00 41.1%,#93d000 45.3%,#1d9500 50.5%,#005a0a 54.7%,#002e4f 57.9%,#001392 59.9%,#0000fb 63.1%,#000007 67.3%,#000 67.8%,#000 80.9%,#00000b 81.4%,#0000b5 86.1%,#0000f4 88.2%,#0000fc 88.7%,#0009ca 91.9%,#000fab 94.5%,#001589 99.7%)"></i><i style="left:334px;width:2.5px;background:linear-gradient(#000009 0.3%,#0000ec 3.9%,#0001f7 4.5%,#001295 7.1%,#002e4f 9.2%,#015d0a 12.3%,#1d9300 16%,#95d100 21.2%,#cce900 24.9%,#eff800 28.5%,#fdfe00 32.7%,#f8fc00 35.3%,#e6f400 38.5%,#c6e700 41.6%,#98d300 44.8%,#1c9301 50.5%,#00580d 54.7%,#034 57.3%,#001296 59.9%,#0002f2 62.6%,#0000f6 63.1%,#000002 67.3%,#000 67.8%,#000001 81.4%,#00009b 85.6%,#0000fb 88.7%,#000eaf 94.5%,#00148c 99.7%)"></i><i style="left:336px;width:2.5px;background:linear-gradient(#000014 0.3%,#0000f5 3.9%,#0002f1 4.5%,#001391 7.1%,#00304b 9.2%,#025e09 12.3%,#1d9400 16%,#8bcd00 20.7%,#cce900 24.9%,#eef800 28.5%,#fbfd00 32.7%,#eef800 36.9%,#c9e800 41.1%,#8bcc00 45.3%,#219700 50%,#025e09 54.2%,#003247 57.3%,#001688 59.4%,#0002f5 62.6%,#0000f0 63.1%,#000 67.3%,#000 81.4%,#00000b 81.9%,#0000b4 86.6%,#0000fe 89.3%,#000db4 94.5%,#001390 99.7%)"></i><i style="left:338px;width:2.5px;background:linear-gradient(#00001e 0.3%,#0000fd 3.9%,#00148c 7.1%,#003247 9.2%,#00580d 11.8%,#1e9500 16%,#8ccd00 20.7%,#cce900 24.9%,#ecf700 28.5%,#f9fc00 32.7%,#ebf700 36.9%,#c6e600 41.1%,#87ca00 45.3%,#1e9500 50%,#015c0a 54.2%,#00304a 57.3%,#00148c 59.4%,#0001f9 62.6%,#0000eb 63.1%,#000017 66.8%,#000 67.3%,#000 81.9%,#009 86.1%,#0000f9 89.3%,#0001fa 89.8%,#000db2 95%,#001393 99.7%)"></i><i style="left:340px;width:2.5px;background:linear-gradient(#000028 0.3%,#0000e7 3.4%,#0001fa 3.9%,#001687 7.1%,#002c54 8.6%,#00590b 11.8%,#1f9600 16%,#60b700 18.6%,#96d200 21.2%,#bee300 23.8%,#dbf000 26.4%,#f1f900 29.6%,#f7fb00 32.2%,#ecf700 36.4%,#c9e800 40.6%,#8dcd00 44.8%,#1d9300 50%,#00590b 54.2%,#002f4e 57.3%,#00138f 59.4%,#0000fd 62.6%,#0000e6 63.1%,#000012 66.8%,#000 67.3%,#000 81.9%,#000009 82.5%,#0000b2 87.2%,#00f 89.8%,#000db6 95%,#001296 99.7%)"></i><i style="left:342px;width:2.5px;background:linear-gradient(#000032 0.3%,#0000f0 3.4%,#0002f5 3.9%,#001295 6.5%,#002e50 8.6%,#015b0a 11.8%,#219700 16%,#8dce00 20.7%,#c4e600 24.3%,#eaf600 28.5%,#f4fa00 32.2%,#f0f900 34.8%,#def100 38%,#c5e600 40.6%,#9bd400 43.7%,#6abc00 46.3%,#229800 49.5%,#00580d 54.2%,#002d52 57.3%,#001393 59.4%,#0000fd 62.6%,#00000d 66.8%,#000 67.3%,#000 82.5%,#0000a9 87.2%,#0000f7 89.8%,#0001fb 90.3%,#000cba 95%,#001298 99.7%)"></i><i style="left:344px;width:2.5px;background:linear-gradient(#00003c 0.3%,#0000f9 3.4%,#0003ef 3.9%,#001390 6.5%,#002f4c 8.6%,#015d0a 11.8%,#239800 16%,#63b800 18.6%,#97d300 21.2%,#bee300 23.8%,#daef00 26.4%,#ebf600 29.1%,#f2fa00 31.7%,#e9f600 35.9%,#c8e700 40.1%,#8ece00 44.2%,#1e9600 49.5%,#025d09 53.7%,#003246 56.8%,#001786 58.9%,#0002f1 62%,#0000f8 62.6%,#000009 66.8%,#000 67.3%,#000 82.5%,#000007 83%,#00009f 87.2%,#0000fd 90.3%,#000cb8 95.5%,#00119b 99.7%)"></i><i style="left:346px;width:2.5px;background:linear-gradient(#000045 0.3%,#0000fe 3.4%,#00148c 6.5%,#003148 8.6%,#025e09 11.8%,#1c9301 15.4%,#98d300 21.2%,#bde300 23.8%,#d9ef00 26.4%,#eaf600 29.1%,#f0f900 31.7%,#e6f400 35.9%,#c5e600 40.1%,#8bcc00 44.2%,#1d9400 49.5%,#015b0a 53.7%,#003149 56.8%,#001589 58.9%,#0002f4 62%,#0000f2 62.6%,#000004 66.8%,#000 67.3%,#000 83%,#0000a7 87.7%,#0000f5 90.3%,#0000fd 90.8%,#000cbc 95.5%,#00119e 99.7%)"></i><i style="left:348px;width:2.5px;background:linear-gradient(#00004f 0.3%,#0000ec 2.9%,#0001f8 3.4%,#001687 6.5%,#003345 8.6%,#00580d 11.3%,#1d9400 15.4%,#65ba00 18.6%,#98d300 21.2%,#bde300 23.8%,#d8ee00 26.4%,#e8f500 29.1%,#eef800 31.7%,#eaf600 34.3%,#daef00 37.4%,#bce200 40.6%,#99d300 43.2%,#69bb00 45.8%,#229800 49%,#00590b 53.7%,#002f4d 56.8%,#00148d 58.9%,#0001f8 62%,#0000ed 62.6%,#000 66.8%,#000005 83.5%,#00009d 87.7%,#0000fa 90.8%,#0001f9 91.4%,#000cbb 96.1%,#0010a1 99.7%)"></i><i style="left:350px;width:2.5px;background:linear-gradient(#000059 0.3%,#0000f5 2.9%,#0002f2 3.4%,#001394 6%,#002e50 8.1%,#005a0a 11.3%,#1d9500 15.4%,#66ba00 18.6%,#98d300 21.2%,#bde300 23.8%,#d7ee00 26.4%,#e7f500 29.1%,#ecf700 31.7%,#e1f200 35.9%,#bfe300 40.1%,#83c900 44.2%,#1e9600 49%,#025f09 53.1%,#005118 54.2%,#002e50 56.8%,#001390 58.9%,#0001fb 62%,#0000e8 62.6%,#000 66.8%,#000 83.5%,#0000a5 88.2%,#0000fe 91.4%,#000ac4 95.5%,#0010a5 99.7%)"></i><i style="left:352px;width:2.5px;background:linear-gradient(#000063 0.3%,#0000fd 2.9%,#00138f 6%,#002f4c 8.1%,#015b0a 11.3%,#1e9600 15.4%,#68bb00 18.6%,#99d300 21.2%,#bce200 23.8%,#d6ed00 26.4%,#e5f400 29.1%,#eaf600 31.7%,#dff100 35.9%,#bbe200 40.1%,#7fc700 44.2%,#1d9400 49%,#015d0a 53.1%,#003345 56.3%,#001394 58.9%,#0000fe 62%,#000015 66.2%,#000 66.8%,#000003 84%,#0000ac 88.7%,#0000f8 91.4%,#0001fb 91.9%,#0009c8 95.5%,#000fa8 99.7%)"></i><i style="left:354px;width:2.5px;background:linear-gradient(#00006d 0.3%,#0000e9 2.4%,#0001fa 2.9%,#00158a 6%,#003148 8.1%,#025d09 11.3%,#209700 15.4%,#69bb00 18.6%,#99d300 21.2%,#bce200 23.8%,#d5ed00 26.4%,#e8f500 31.2%,#dff100 35.3%,#bee300 39.5%,#85c900 43.7%,#239800 48.4%,#005b0a 53.1%,#003148 56.3%,#001686 58.4%,#0000fb 62%,#001 66.2%,#000 66.8%,#000 84%,#00000c 84.6%,#0000a3 88.7%,#0000fd 91.9%,#000ac7 96.1%,#000fab 99.7%)"></i><i style="left:356px;width:2.5px;background:linear-gradient(#000078 0.3%,#0000f2 2.4%,#0002f4 2.9%,#001786 6%,#003345 8.1%,#00570e 10.7%,#035f09 11.3%,#229800 15.4%,#6abc00 18.6%,#9ad400 21.2%,#bce200 23.8%,#d4ed00 26.4%,#e6f400 31.2%,#e3f300 33.8%,#d2ec00 36.9%,#b5df00 40.1%,#93d000 42.7%,#64b900 45.3%,#1f9600 48.4%,#00590b 53.1%,#00304b 56.3%,#001589 58.4%,#0002f2 61.5%,#0000f7 62%,#00000e 66.2%,#000 66.8%,#000001 84.6%,#00a 89.3%,#0000e7 91.4%,#0000fd 92.4%,#0009cc 96.1%,#000eaf 99.7%)"></i><i style="left:358px;width:2.5px;background:linear-gradient(#000082 0.3%,#0000fc 2.4%,#001392 5.5%,#002e50 7.6%,#00590b 10.7%,#1c9301 14.9%,#92d000 20.7%,#b6e000 23.3%,#cfeb00 25.9%,#dff100 28.5%,#e4f400 31.2%,#daef00 35.3%,#b8e100 39.5%,#7dc600 43.7%,#1d9500 48.4%,#025f09 52.6%,#005117 53.7%,#002f4e 56.3%,#00148c 58.4%,#0002f4 61.5%,#0000f3 62%,#00000b 66.2%,#000 66.8%,#000 84.6%,#00000b 85.1%,#0000a1 89.3%,#0000fa 92.4%,#0001fa 92.9%,#0009cb 96.6%,#000db3 99.7%)"></i><i style="left:360px;width:2.5px;background:linear-gradient(#00008d 0.3%,#0000e8 1.8%,#0001fb 2.4%,#00148c 5.5%,#00304b 7.6%,#005b0a 10.7%,#1d9400 14.9%,#62b800 18.1%,#93d000 20.7%,#b6e000 23.3%,#cfea00 25.9%,#e2f300 31.2%,#def100 33.8%,#cdea00 36.9%,#94d100 42.1%,#1c9301 48.4%,#025d09 52.6%,#002d51 56.3%,#00148f 58.4%,#0001f7 61.5%,#0000f0 62%,#000009 66.2%,#000 66.8%,#000 85.1%,#000097 89.3%,#0000fe 92.9%,#0008cf 96.6%,#000cb7 99.7%)"></i><i style="left:362px;width:2.5px;background:linear-gradient(#000098 0.3%,#0000f2 1.8%,#0002f4 2.4%,#001687 5.5%,#003247 7.6%,#025d09 10.7%,#1e9500 14.9%,#64b900 18.1%,#93d100 20.7%,#cae800 25.4%,#e0f200 30.6%,#d1eb00 35.9%,#bde300 38.5%,#98d300 41.6%,#63b900 44.8%,#209700 47.9%,#015b0a 52.6%,#003345 55.8%,#001391 58.4%,#0001f8 61.5%,#0000ed 62%,#000007 66.2%,#000 66.8%,#000 85.1%,#000009 85.6%,#0000ae 90.3%,#0000e9 92.4%,#0000fd 93.5%,#0007d4 96.6%,#000cbb 99.7%)"></i><i style="left:364px;width:2.5px;background:linear-gradient(#0000a3 0.3%,#0000fc 1.8%,#001393 5%,#003443 7.6%,#00580d 10.2%,#035f09 10.7%,#1f9700 14.9%,#65ba00 18.1%,#94d100 20.7%,#c9e800 25.4%,#dff100 30.6%,#dbf000 33.2%,#cbe900 36.4%,#95d100 41.6%,#60b700 44.8%,#1e9500 47.9%,#005a0a 52.6%,#003247 55.8%,#001393 58.4%,#0001fa 61.5%,#0000eb 62%,#000007 66.2%,#000 66.8%,#000 85.6%,#000094 89.8%,#0000f9 93.5%,#0001fb 94%,#0007d4 97.1%,#000bc0 99.7%)"></i><i style="left:366px;width:2.5px;background:linear-gradient(#0000ae 0.3%,#0000ea 1.3%,#0001fa 1.8%,#00148d 5%,#002f4d 7.1%,#00590b 10.2%,#229800 14.9%,#5db500 17.5%,#95d100 20.7%,#c9e800 25.4%,#ddf000 30.6%,#d9ef00 33.2%,#c9e800 36.4%,#92d000 41.6%,#66ba00 44.2%,#1d9400 47.9%,#00590c 52.6%,#003149 55.8%,#001295 58.4%,#0001fb 61.5%,#0000e9 62%,#000006 66.2%,#000 66.8%,#000 85.6%,#000007 86.1%,#00a 90.8%,#0000fd 94%,#000ac5 99.7%)"></i><i style="left:368px;width:2.5px;background:linear-gradient(#0000ba 0.3%,#0000f4 1.3%,#0002f3 1.8%,#001688 5%,#003148 7.1%,#015c0a 10.2%,#1d9300 14.4%,#69bb00 18.1%,#96d200 20.7%,#c8e700 25.4%,#dbf000 30.6%,#cae800 35.9%,#96d200 41.1%,#63b800 44.2%,#229800 47.4%,#025e09 52.1%,#00304b 55.8%,#001687 57.9%,#0000fc 61.5%,#0000cd 62.6%,#000006 66.2%,#000 66.8%,#000 86.1%,#0000a0 90.8%,#00f 94.5%,#0006de 97.1%,#0009c9 99.7%)"></i><i style="left:370px;width:2.5px;background:linear-gradient(#0000c4 0.3%,#0000fe 1.3%,#001393 4.5%,#034 7.1%,#025e09 10.2%,#1d9400 14.4%,#60b700 17.5%,#96d200 20.7%,#c7e700 25.4%,#d9ef00 30.1%,#d6ed00 32.7%,#c7e700 35.9%,#93d000 41.1%,#5fb700 44.2%,#1f9600 47.4%,#015d0a 52.1%,#002f4d 55.8%,#001688 57.9%,#0000fd 61.5%,#000006 66.2%,#000 66.8%,#000 86.1%,#000005 86.6%,#0000a6 91.4%,#0000f7 94.5%,#0000fd 95%,#0009ce 99.7%)"></i><i style="left:372px;width:2.5px;background:linear-gradient(#0000cf 0.3%,#0000ec 0.8%,#0001f9 1.3%,#00148d 4.5%,#002f4e 6.5%,#00580c 9.7%,#1e9600 14.4%,#62b800 17.5%,#8fcf00 20.2%,#c3e500 24.9%,#d7ee00 30.1%,#c8e700 35.3%,#97d200 40.6%,#65ba00 43.7%,#1d9500 47.4%,#015c0a 52.1%,#002e4f 55.8%,#00158a 57.9%,#0000fe 61.5%,#000006 66.2%,#000 66.8%,#000 86.6%,#00009c 91.4%,#0000fa 95%,#0001fb 95.5%,#0008d3 99.7%)"></i><i style="left:374px;width:2.5px;background:linear-gradient(#0000da 0.3%,#0000f6 0.8%,#0002f2 1.3%,#001688 4.5%,#003149 6.5%,#005a0a 9.7%,#209700 14.4%,#59b400 17%,#90cf00 20.2%,#c2e500 24.9%,#d6ed00 30.1%,#c5e600 35.3%,#93d100 40.6%,#62b800 43.7%,#1d9300 47.4%,#005a0a 52.1%,#002d51 55.8%,#00148c 57.9%,#0000fe 61.5%,#000006 66.2%,#000 66.8%,#000 86.6%,#000002 87.2%,#00004e 89.3%,#0000b1 92.4%,#0000fc 95.5%,#0007d8 99.7%)"></i><i style="left:376px;width:2.5px;background:linear-gradient(#0000e4 0.3%,#0000fe 0.8%,#001393 3.9%,#003345 6.5%,#015c0a 9.7%,#239800 14.4%,#5bb400 17%,#90cf00 20.2%,#c2e500 24.9%,#d4ec00 30.1%,#c3e500 35.3%,#90cf00 40.6%,#5fb600 43.7%,#219700 46.9%,#00590b 52.1%,#003345 55.2%,#00148d 57.9%,#0000fd 61.5%,#000006 66.2%,#000 66.8%,#000 87.2%,#00000b 87.7%,#0000a7 92.4%,#0000fe 96.1%,#0006dc 99.7%)"></i><i style="left:378px;width:2.5px;background:linear-gradient(#00e 0.3%,#0001f7 0.8%,#00148e 3.9%,#002e4f 6%,#00570e 9.2%,#259a00 14.4%,#78c300 18.6%,#aadb00 22.3%,#cae800 26.4%,#d2ec00 30.6%,#bce200 35.9%,#8dcd00 40.6%,#5cb500 43.7%,#1e9600 46.9%,#025e09 51.6%,#003247 55.2%,#00138f 57.9%,#0002f1 61%,#0000fb 61.5%,#000005 66.2%,#000 66.8%,#000 87.7%,#00009d 92.4%,#0000f5 96.1%,#00f 96.6%,#0005e1 99.7%)"></i><i style="left:380px;width:2.5px;background:linear-gradient(#0000f8 0.3%,#0002f1 0.8%,#001589 3.9%,#00304b 6%,#00590c 9.2%,#1d9500 13.9%,#279b00 14.4%,#79c400 18.6%,#aadb00 22.3%,#c9e800 26.4%,#d0eb00 30.6%,#bae100 35.9%,#8acc00 40.6%,#1d9400 46.9%,#015d0a 51.6%,#003149 55.2%,#001391 57.9%,#0002f2 61%,#0000f8 61.5%,#000004 66.2%,#000 87.7%,#000008 88.2%,#000052 90.3%,#0000a2 92.9%,#0000f7 96.6%,#0000fe 97.1%,#0004e6 99.7%)"></i><i style="left:382px;width:2.5px;background:linear-gradient(#0000fd 0.3%,#001394 3.4%,#003246 6%,#005413 8.6%,#005b0a 9.2%,#1e9600 13.9%,#71c000 18.1%,#a4d800 21.7%,#c5e600 25.9%,#ceea00 30.1%,#bbe200 35.3%,#8ece00 40.1%,#5eb600 43.2%,#229800 46.3%,#015b0a 51.6%,#00304b 55.2%,#001393 57.9%,#0002f4 61%,#0000f6 61.5%,#000003 66.2%,#000 88.2%,#00008a 92.4%,#0000e5 96.1%,#0000fd 97.6%,#0004ea 99.7%)"></i><i style="left:384px;width:2.5px;background:linear-gradient(#0001f7 0.3%,#00138f 3.4%,#002d51 5.5%,#005611 8.6%,#015c0a 9.2%,#209700 13.9%,#72c000 18.1%,#a4d800 21.7%,#c4e600 25.9%,#cce900 30.1%,#b8e100 35.3%,#8acc00 40.1%,#5bb400 43.2%,#1f9600 46.3%,#005a0a 51.6%,#002f4e 55.2%,#001687 57.3%,#0002f6 61%,#0000f3 61.5%,#000001 66.2%,#000 88.2%,#000005 88.7%,#00004e 90.8%,#00009e 93.5%,#00d 96.1%,#0000fa 97.6%,#0000fd 98.2%,#0003ef 99.7%)"></i><i style="left:386px;width:2.5px;background:linear-gradient(#0002f1 0.3%,#00158a 3.4%,#002f4d 5.5%,#025e09 9.2%,#219800 13.9%,#61b700 17%,#92d000 20.2%,#bde300 24.9%,#cae800 29.6%,#b9e100 34.8%,#87cb00 40.1%,#60b700 42.7%,#1d9500 46.3%,#00580c 51.6%,#002d51 55.2%,#001589 57.3%,#0001f9 61%,#0000ef 61.5%,#000 66.2%,#000 88.7%,#000086 92.9%,#0000ca 95.5%,#0000fb 98.2%,#0002f3 99.7%)"></i><i style="left:388px;width:2.5px;background:linear-gradient(#0003ec 0.3%,#001786 3.4%,#003149 5.5%,#00580c 8.6%,#1c9301 13.4%,#8bcc00 19.6%,#b9e100 24.3%,#c9e800 29.1%,#bae100 34.3%,#8bcc00 39.5%,#5db500 42.7%,#229800 45.8%,#025d09 51%,#003246 54.7%,#00148c 57.3%,#0001fb 61%,#0000eb 61.5%,#000 66.2%,#000 88.7%,#000002 89.3%,#00007c 92.9%,#0000c2 95.5%,#0000fc 98.7%,#0001f8 99.7%)"></i><i style="left:390px;width:2.5px;background:linear-gradient(#0004e6 0.3%,#001391 2.9%,#003246 5.5%,#005a0a 8.6%,#1d9400 13.4%,#62b800 17%,#8acc00 19.6%,#b8e000 24.3%,#c7e700 29.1%,#b7e000 34.3%,#88cb00 39.5%,#59b400 42.7%,#1f9600 45.8%,#015c0a 51%,#003149 54.7%,#00138f 57.3%,#0000fe 61%,#000013 65.7%,#000 66.2%,#000 89.3%,#000009 89.8%,#000082 93.5%,#0000b9 95.5%,#0000ed 98.2%,#0000fd 99.2%,#0001fc 99.7%)"></i><i style="left:392px;width:2.5px;background:linear-gradient(#0005e1 0.3%,#00148d 2.9%,#002e50 5%,#015b0a 8.6%,#1d9400 13.4%,#63b800 17%,#8acc00 19.6%,#b7e000 24.3%,#c5e600 29.1%,#b5df00 34.3%,#84c900 39.5%,#56b200 42.7%,#1d9500 45.8%,#005a0a 51%,#002f4c 54.7%,#001392 57.3%,#0000fc 61%,#00000f 65.7%,#000 66.2%,#000 89.8%,#000058 92.4%,#0000a4 95%,#00d 97.6%,#0000fd 99.7%)"></i><i style="left:394px;width:2.5px;background:linear-gradient(#0006db 0.3%,#001688 2.9%,#002f4d 5%,#015d0a 8.6%,#1e9500 13.4%,#5ab400 16.5%,#8acc00 19.6%,#b5df00 24.3%,#c3e500 29.1%,#b2de00 34.3%,#81c800 39.5%,#1d9300 45.8%,#00580c 51%,#002e4f 54.7%,#001295 57.3%,#0002f3 60.5%,#0000f8 61%,#00000c 65.7%,#000 66.2%,#000 89.8%,#000005 90.3%,#00004e 92.4%,#0000a8 95.5%,#0000d5 97.6%,#0000f6 99.7%)"></i><i style="left:396px;width:2.5px;background:linear-gradient(#0007d6 0.3%,#001394 2.4%,#003149 5%,#025e09 8.6%,#1e9600 13.4%,#5bb400 16.5%,#8acc00 19.6%,#b4df00 24.3%,#c1e400 29.1%,#b0dd00 34.3%,#85c900 39%,#58b300 42.1%,#1f9700 45.3%,#025d09 50.5%,#003345 54.2%,#001589 56.8%,#0002f6 60.5%,#0000f4 61%,#000009 65.7%,#000 66.2%,#000 90.3%,#00009f 95.5%,#0000ce 97.6%,#0000f0 99.7%)"></i><i style="left:398px;width:2.5px;background:linear-gradient(#0008d1 0.3%,#00138f 2.4%,#003246 5%,#00590c 8.1%,#1f9700 13.4%,#5bb500 16.5%,#83c800 19.1%,#b0dd00 23.8%,#bfe400 29.1%,#addc00 34.3%,#82c800 39%,#55b100 42.1%,#1d9500 45.3%,#015b0a 50.5%,#003147 54.2%,#00148c 56.8%,#0001f8 60.5%,#0000f0 61%,#000005 65.7%,#000 66.2%,#000 90.8%,#000049 92.9%,#000096 95.5%,#0000c6 97.6%,#0000e9 99.7%)"></i><i style="left:400px;width:2.5px;background:linear-gradient(#0009cc 0.3%,#00148b 2.4%,#003443 5%,#005a0a 8.1%,#219700 13.4%,#5cb500 16.5%,#83c800 19.1%,#afdd00 23.8%,#bde300 28.5%,#aedc00 33.8%,#7fc600 39%,#1d9300 45.3%,#005a0a 50.5%,#00304a 54.2%,#00148f 56.8%,#0001fb 60.5%,#0000ec 61%,#000002 65.7%,#000 90.8%,#000007 91.4%,#00004f 93.5%,#00009a 96.1%,#0000c9 98.2%,#0000e2 99.7%)"></i><i style="left:402px;width:2.5px;background:linear-gradient(#000ac7 0.3%,#001687 2.4%,#002f4d 4.5%,#015c0a 8.1%,#229800 13.4%,#5cb500 16.5%,#82c800 19.1%,#aedc00 23.8%,#bbe200 28.5%,#abdb00 33.8%,#7bc500 39%,#1f9700 44.8%,#00580d 50.5%,#002f4d 54.2%,#001391 56.8%,#0000fe 60.5%,#000 65.7%,#000 91.4%,#000091 96.1%,#0000b6 97.6%,#0000dc 99.7%)"></i><i style="left:404px;width:2.5px;background:linear-gradient(#000bc2 0.3%,#001392 1.8%,#003149 4.5%,#015d0a 8.1%,#1d9300 12.8%,#7bc500 18.6%,#a9da00 23.3%,#b9e100 28.5%,#a9da00 33.8%,#7fc600 38.5%,#1d9500 44.8%,#015d0a 50%,#002e50 54.2%,#001394 56.8%,#0000fd 60.5%,#000 65.7%,#000001 91.9%,#00004a 94%,#008 96.1%,#0000b9 98.2%,#0000d5 99.7%)"></i><i style="left:406px;width:2.5px;background:linear-gradient(#000bbd 0.3%,#00148e 1.8%,#003246 4.5%,#025e09 8.1%,#1d9400 12.8%,#7bc400 18.6%,#a8da00 23.3%,#b7e000 28.5%,#a6d900 33.8%,#7cc500 38.5%,#1d9300 44.8%,#015b0a 50%,#003246 53.7%,#001589 56.3%,#0002f3 59.9%,#0000f9 60.5%,#000012 65.2%,#000 65.7%,#000 91.9%,#000007 92.4%,#00004f 94.5%,#00008c 96.6%,#0000ce 99.7%)"></i><i style="left:408px;width:2.5px;background:linear-gradient(#000cb8 0.3%,#00158a 1.8%,#003444 4.5%,#00590c 7.6%,#1d9400 12.8%,#7bc400 18.6%,#a7d900 23.3%,#b5df00 28.5%,#a4d800 33.8%,#79c300 38.5%,#1f9600 44.2%,#00590b 50%,#003149 53.7%,#00148c 56.3%,#0002f6 59.9%,#0000f4 60.5%,#00000e 65.2%,#000 65.7%,#000 92.4%,#000083 96.6%,#0000c7 99.7%)"></i><i style="left:410px;width:2.5px;background:linear-gradient(#000db4 0.3%,#002f4d 3.9%,#005a0a 7.6%,#1d9500 12.8%,#7ac400 18.6%,#a5d900 23.3%,#b3de00 28.5%,#a1d700 33.8%,#76c200 38.5%,#1d9500 44.2%,#00580d 50%,#00304c 53.7%,#00148f 56.3%,#0001f9 59.9%,#0000f0 60.5%,#00000a 65.2%,#000 65.7%,#000 92.9%,#000079 96.6%,#0000c0 99.7%)"></i><i style="left:412px;width:2.5px;background:linear-gradient(#000eaf 0.3%,#00304a 3.9%,#015b0a 7.6%,#1e9500 12.8%,#73c100 18.1%,#a1d700 22.8%,#b1de00 28%,#a2d700 33.2%,#72c000 38.5%,#229800 43.7%,#015c0a 49.5%,#002e4f 53.7%,#001392 56.3%,#0001fc 59.9%,#0000d3 61%,#000006 65.2%,#000 65.7%,#000 92.9%,#000007 93.5%,#00007e 97.1%,#0000b9 99.7%)"></i><i style="left:414px;width:2.5px;background:linear-gradient(#000fab 0.3%,#003247 3.9%,#015c0a 7.6%,#1e9600 12.8%,#73c000 18.1%,#a0d600 22.8%,#afdd00 28%,#a0d600 33.2%,#6fbf00 38.5%,#1e9600 43.7%,#005b0a 49.5%,#003245 53.1%,#001687 55.8%,#00f 59.9%,#000002 65.2%,#000 65.7%,#000 93.5%,#000074 97.1%,#0000b2 99.7%)"></i><i style="left:416px;width:2.5px;background:linear-gradient(#000fa7 0.3%,#034 3.9%,#025e09 7.6%,#1e9600 12.8%,#72c000 18.1%,#9ed600 22.8%,#addc00 28%,#9ad400 33.8%,#6cbd00 38.5%,#1d9500 43.7%,#00590b 49.5%,#003148 53.1%,#00158a 55.8%,#0002f2 59.4%,#0000fb 59.9%,#000 65.2%,#000 94%,#00005a 96.6%,#00a 99.7%)"></i><i style="left:418px;width:2.5px;background:linear-gradient(#0010a3 0.3%,#003542 3.9%,#00580c 7.1%,#025f09 7.6%,#1f9700 12.8%,#72c000 18.1%,#9dd500 22.8%,#abdb00 28%,#9bd400 33.2%,#70bf00 38%,#219800 43.2%,#025d09 49%,#00304b 53.1%,#00148d 55.8%,#0002f5 59.4%,#0000f6 59.9%,#000 65.2%,#000 94%,#000006 94.5%,#000060 97.1%,#0000a3 99.7%)"></i><i style="left:420px;width:2.5px;background:linear-gradient(#00119f 0.3%,#00304b 3.4%,#00590b 7.1%,#209700 12.8%,#71c000 18.1%,#9cd400 22.8%,#a9da00 28%,#98d300 33.2%,#6dbd00 38%,#1e9600 43.2%,#015c0a 49%,#002f4e 53.1%,#001390 55.8%,#0001f8 59.4%,#0000f1 59.9%,#00000f 64.7%,#000 65.2%,#000 94.5%,#005 97.1%,#00009b 99.7%)"></i><i style="left:422px;width:2.5px;background:linear-gradient(#00119b 0.3%,#003148 3.4%,#005a0a 7.1%,#209700 12.8%,#70bf00 18.1%,#9ad400 22.8%,#a7d900 28%,#96d200 33.2%,#6abc00 38%,#1d9400 43.2%,#005a0a 49%,#003345 52.6%,#001393 55.8%,#0001fc 59.4%,#0000ec 59.9%,#00000a 64.7%,#000 65.2%,#000 95%,#00004b 97.1%,#000093 99.7%)"></i><i style="left:424px;width:2.5px;background:linear-gradient(#001298 0.3%,#003246 3.4%,#015b0a 7.1%,#219700 12.8%,#70bf00 18.1%,#99d300 22.8%,#a5d800 28%,#96d200 32.7%,#66ba00 38%,#209700 42.7%,#00580c 49%,#003148 52.6%,#001688 55.2%,#00f 59.4%,#000006 64.7%,#000 65.2%,#000 95%,#000005 95.5%,#000050 97.6%,#00008b 99.7%)"></i><i style="left:426px;width:2.5px;background:linear-gradient(#001394 0.3%,#034 3.4%,#015c0a 7.1%,#219800 12.8%,#69bb00 17.5%,#94d100 22.3%,#a3d800 27.5%,#97d200 32.2%,#6abc00 37.4%,#1e9600 42.7%,#015c0a 48.4%,#00304b 52.6%,#00148c 55.2%,#0002f3 58.9%,#0000fa 59.4%,#000001 64.7%,#000 95.5%,#000082 99.7%)"></i><i style="left:428px;width:2.5px;background:linear-gradient(#001391 0.3%,#003542 3.4%,#025d09 7.1%,#219800 12.8%,#68bb00 17.5%,#96d200 22.8%,#a1d700 27.5%,#94d100 32.2%,#67ba00 37.4%,#1d9400 42.7%,#005b0a 48.4%,#002e4e 52.6%,#00138f 55.2%,#0002f6 58.9%,#0000f5 59.4%,#000 64.7%,#000 96.1%,#00004b 98.2%,#00007a 99.7%)"></i><i style="left:430px;width:1.5px;background:linear-gradient(#00148e 0.3%,#003641 3.4%,#025e09 7.1%,#229800 12.8%,#67bb00 17.5%,#95d100 22.8%,#a0d600 27.5%,#92d000 32.2%,#64b900 37.4%,#209700 42.1%,#00590b 48.4%,#002d51 52.6%,#001392 55.2%,#0001f9 58.9%,#0000f1 59.4%,#001 64.1%,#000 64.7%,#000 96.1%,#000009 96.6%,#000043 98.2%,#000073 99.7%)"></i></div><div style="left:115px;top:258px;width:3.6px;height:59.5px;background:#fff;"></div><div style="left:139.6px;top:326.5px;width:180px;height:3px;background:#fffff0;"></div><svg style="left:0;top:0" width="1099" height="628"><path d="M319.800 268.700L421.700 242.200" stroke="#f6e6a0" stroke-width="2" fill="none"/></svg><div style="left:566.5px;top:167px;width:8.5px;height:112.5px;background:linear-gradient(rgb(255,0,0) 4.7%,rgb(255,40,0) 7.7%,rgb(255,150,0) 15.2%,rgb(255,255,0) 24.2%,rgb(150,210,0) 33.6%,rgb(30,150,0) 43.7%,rgb(0,90,10) 54.3%,rgb(0,50,70) 62.6%,rgb(0,20,140) 69.9%,rgb(0,0,255) 81.6%,rgb(0,0,100) 92.2%,rgb(0,0,0) 99.4%);"></div><span class="t s" style="right:538px;top:271.32px;">84</span><div style="left:562px;top:275.82px;width:4.5px;height:1px;background:#333;"></div><span class="t s" style="right:538px;top:258.78px;">86</span><div style="left:562px;top:263.28px;width:4.5px;height:1px;background:#333;"></div><span class="t s" style="right:538px;top:246.24px;">88</span><div style="left:562px;top:250.74px;width:4.5px;height:1px;background:#333;"></div><span class="t s" style="right:538px;top:233.7px;">90</span><div style="left:562px;top:238.2px;width:4.5px;height:1px;background:#333;"></div><span class="t s" style="right:538px;top:221.16px;">92</span><div style="left:562px;top:225.66px;width:4.5px;height:1px;background:#333;"></div><span class="t s" style="right:538px;top:208.62px;">94</span><div style="left:562px;top:213.12px;width:4.5px;height:1px;background:#333;"></div><span class="t s" style="right:538px;top:196.08px;">96</span><div style="left:562px;top:200.58px;width:4.5px;height:1px;background:#333;"></div><span class="t s" style="right:538px;top:183.54px;">98</span><div style="left:562px;top:188.04px;width:4.5px;height:1px;background:#333;"></div><span class="t s" style="right:538px;top:171px;">100</span><div style="left:562px;top:175.5px;width:4.5px;height:1px;background:#333;"></div><svg style="left:113px;top:396px" width="431.500" height="150" viewBox="0 0 431.500 150"><rect width="431.500" height="150" fill="#000"/><path d="M25.7 0V150" stroke="#3c3c3c" stroke-width="0.9"/><path d="M51.4 0V150" stroke="#3c3c3c" stroke-width="0.9"/><path d="M77.1 0V150" stroke="#3c3c3c" stroke-width="0.9"/><path d="M102.8 0V150" stroke="#3c3c3c" stroke-width="0.9"/><path d="M128.5 0V150" stroke="#3c3c3c" stroke-width="0.9"/><path d="M154.2 0V150" stroke="#3c3c3c" stroke-width="0.9"/><path d="M179.9 0V150" stroke="#3c3c3c" stroke-width="0.9"/><path d="M205.6 0V150" stroke="#3c3c3c" stroke-width="0.9"/><path d="M231.3 0V150" stroke="#3c3c3c" stroke-width="0.9"/><path d="M257 0V150" stroke="#3c3c3c" stroke-width="0.9"/><path d="M282.7 0V150" stroke="#3c3c3c" stroke-width="0.9"/><path d="M308.4 0V150" stroke="#3c3c3c" stroke-width="0.9"/><path d="M334.1 0V150" stroke="#3c3c3c" stroke-width="0.9"/><path d="M359.8 0V150" stroke="#3c3c3c" stroke-width="0.9"/><path d="M385.5 0V150" stroke="#3c3c3c" stroke-width="0.9"/><path d="M411.2 0V150" stroke="#3c3c3c" stroke-width="0.9"/><path d="M0 7.5H431.500" stroke="#3c3c3c" stroke-width="0.9"/><path d="M0 45H431.500" stroke="#3c3c3c" stroke-width="0.9"/><path d="M0 82.5H431.500" stroke="#3c3c3c" stroke-width="0.9"/><path d="M0 120H431.500" stroke="#3c3c3c" stroke-width="0.9"/><path d="M29.0 150.0L32.0 140.9L35.0 132.5L38.0 124.7L41.0 117.4L44.0 110.3L47.0 103.6L50.0 97.4L53.0 92.0L56.0 87.0L58.9 82.6L61.9 78.6L64.9 75.0L67.9 71.7L70.9 68.6L73.9 65.8L76.9 63.4L79.9 61.3L82.9 59.3L85.9 57.6L88.9 56.1L91.9 54.8L94.9 53.8L97.9 52.9L100.9 52.1L103.9 51.4L106.9 51.0L109.9 50.7L112.9 50.4L115.9 50.1L118.8 49.9L121.8 49.8L124.8 49.7L127.8 49.7L130.8 49.9L133.8 50.1L136.8 50.3L139.8 50.6L142.8 50.9L145.8 51.3L148.8 51.8L151.8 52.4L154.8 53.1L157.8 53.8L160.8 54.5L163.8 55.2L166.8 55.9L169.8 56.5L172.8 57.1L175.8 57.7L178.7 58.3L181.7 59.0L184.7 59.7L187.7 60.4L190.7 61.1L193.7 61.9L196.7 62.8L199.7 63.7L202.7 64.6L205.7 65.5" stroke="#e9e04e" stroke-width="2" fill="none" stroke-linecap="round"/><path d="M206.400 52.300L257 52.800L308.500 55.600" stroke="#e9e04e" stroke-width="2" fill="none" stroke-linecap="round"/></svg><span class="t s" style="right:990px;top:398.5px;">110</span><div style="left:109.5px;top:403px;width:3.5px;height:1px;background:#333;"></div><span class="t s" style="right:990px;top:436px;">100</span><div style="left:109.5px;top:440.5px;width:3.5px;height:1px;background:#333;"></div><span class="t s" style="right:990px;top:473.5px;">90</span><div style="left:109.5px;top:478px;width:3.5px;height:1px;background:#333;"></div><span class="t s" style="right:990px;top:511px;">80</span><div style="left:109.5px;top:515.5px;width:3.5px;height:1px;background:#333;"></div><div style="left:582px;top:150px;width:129.5px;height:412.5px;background:#fff;border:1px solid #222;border-right-color:#999;border-bottom-color:#999;"></div><span class="t s" style="left:564.5px;width:100px;text-align:center;top:152px;">Parameter</span><span class="t s" style="left:628px;width:100px;text-align:center;top:152px;">Value</span><div style="left:583px;top:163.5px;width:127.5px;height:12.35px;background:#a9c1de;"></div><div style="left:583px;top:175.35px;width:127.5px;height:0.8px;background:#d4d4d4;"></div><span class="t s" style="left:585px;top:164.5px;font-weight:bold;color:#111;">Mechanical</span><div style="left:583px;top:187.7px;width:127.5px;height:0.8px;background:#d4d4d4;"></div><span class="t s" style="left:585px;top:176.85px;">X-Pos [m]</span><span class="t s" style="right:393px;top:176.85px;">0.20</span><div style="left:583px;top:200.05px;width:127.5px;height:0.8px;background:#d4d4d4;"></div><span class="t s" style="left:585px;top:189.2px;">Z-Pos [m]</span><span class="t s" style="right:393px;top:189.2px;">1.60</span><div style="left:583px;top:212.4px;width:127.5px;height:0.8px;background:#d4d4d4;"></div><div style="left:648px;top:201.55px;width:20.5px;height:9.85px;background:#e1e1e1;"></div><span class="t s" style="left:650px;top:201.55px;">READ</span><span class="t s" style="left:585px;top:201.55px;">Sensor [°] (±1.0°)</span><span class="t s" style="right:393px;top:201.55px;">-5.6</span><div style="left:583px;top:224.75px;width:127.5px;height:0.8px;background:#d4d4d4;"></div><span class="t s" style="left:585px;top:213.9px;">Pre-Angle [°]</span><span class="t s" style="right:393px;top:213.9px;">0.0</span><div style="left:583px;top:237.1px;width:127.5px;height:0.8px;background:#d4d4d4;"></div><span class="t s" style="left:585px;top:226.25px;">UpSideDown</span><div style="left:699.5px;top:227.75px;width:7px;height:7px;background:#fff;border:1px solid #333;"></div><div style="left:583px;top:237.6px;width:127.5px;height:12.35px;background:#a9c1de;"></div><div style="left:583px;top:249.45px;width:127.5px;height:0.8px;background:#d4d4d4;"></div><span class="t s" style="left:585px;top:238.6px;font-weight:bold;color:#111;">Simulation</span><div style="left:583px;top:261.8px;width:127.5px;height:0.8px;background:#d4d4d4;"></div><span class="t s" style="left:585px;top:250.95px;">Frequency [Hz]</span><span class="t s" style="right:393px;top:250.95px;">1000</span><div style="left:583px;top:262.3px;width:127.5px;height:12.35px;background:#a9c1de;"></div><div style="left:583px;top:274.15px;width:127.5px;height:0.8px;background:#d4d4d4;"></div><span class="t s" style="left:585px;top:263.3px;font-weight:bold;color:#111;">Beam 1</span><div style="left:583px;top:286.5px;width:127.5px;height:0.8px;background:#d4d4d4;"></div><div style="left:646.5px;top:274.65px;width:63.5px;height:11.85px;background:#2f8eea;"></div><span class="t s" style="left:585px;top:275.65px;">Angle [°]</span><span class="t s" style="right:393px;top:275.65px;color:#fff;">-10.5</span><div style="left:583px;top:298.85px;width:127.5px;height:0.8px;background:#d4d4d4;"></div><span class="t s" style="left:585px;top:288px;">Beam</span><div style="left:699.5px;top:289.5px;width:7px;height:7px;background:#fff;border:1px solid #333;"></div><svg style="left:700.5px;top:290.5px" width="5" height="5" viewBox="0 0 5 5"><path d="M.5 2.500L2 4L4.500 .5" stroke="#222" stroke-width="1" fill="none"/></svg><div style="left:583px;top:311.2px;width:127.5px;height:0.8px;background:#d4d4d4;"></div><span class="t s" style="left:585px;top:300.35px;">Beam [°]</span><span class="t s" style="right:393px;top:300.35px;">25</span><div style="left:583px;top:323.55px;width:127.5px;height:0.8px;background:#d4d4d4;"></div><span class="t s" style="left:585px;top:312.7px;">Highpass</span><div style="left:699.5px;top:314.2px;width:7px;height:7px;background:#fff;border:1px solid #333;"></div><div style="left:583px;top:335.9px;width:127.5px;height:0.8px;background:#d4d4d4;"></div><span class="t s" style="left:585px;top:325.05px;">Highpass [Hz]</span><span class="t s" style="right:393px;top:325.05px;">10</span><div style="left:583px;top:348.25px;width:127.5px;height:0.8px;background:#d4d4d4;"></div><span class="t s" style="left:585px;top:337.4px;">Side Lobes Optimize</span><div style="left:699.5px;top:338.9px;width:7px;height:7px;background:#fff;border:1px solid #333;"></div><svg style="left:700.5px;top:339.9px" width="5" height="5" viewBox="0 0 5 5"><path d="M.5 2.500L2 4L4.500 .5" stroke="#222" stroke-width="1" fill="none"/></svg><div style="left:583px;top:360.6px;width:127.5px;height:0.8px;background:#d4d4d4;"></div><span class="t s" style="left:585px;top:349.75px;">Center [%]</span><span class="t s" style="right:393px;top:349.75px;">50</span><div style="left:583px;top:372.95px;width:127.5px;height:0.8px;background:#d4d4d4;"></div><span class="t s" style="left:585px;top:362.1px;">Trim [dB]</span><span class="t s" style="right:393px;top:362.1px;">-3.5</span><div style="left:583px;top:373.45px;width:127.5px;height:12.35px;background:#a9c1de;"></div><div style="left:583px;top:385.3px;width:127.5px;height:0.8px;background:#d4d4d4;"></div><span class="t s" style="left:585px;top:374.45px;font-weight:bold;color:#111;">Beam 2</span><div style="left:699.5px;top:375.95px;width:7px;height:7px;background:#fff;border:1px solid #333;"></div><svg style="left:700.5px;top:376.95px" width="5" height="5" viewBox="0 0 5 5"><path d="M.5 2.500L2 4L4.500 .5" stroke="#222" stroke-width="1" fill="none"/></svg><div style="left:583px;top:397.65px;width:127.5px;height:0.8px;background:#d4d4d4;"></div><span class="t s" style="left:585px;top:386.8px;">Angle [°]</span><span class="t s" style="right:393px;top:386.8px;">8.5</span><div style="left:583px;top:410px;width:127.5px;height:0.8px;background:#d4d4d4;"></div><span class="t s" style="left:585px;top:399.15px;">Beam</span><div style="left:699.5px;top:400.65px;width:7px;height:7px;background:#fff;border:1px solid #333;"></div><svg style="left:700.5px;top:401.65px" width="5" height="5" viewBox="0 0 5 5"><path d="M.5 2.500L2 4L4.500 .5" stroke="#222" stroke-width="1" fill="none"/></svg><div style="left:583px;top:422.35px;width:127.5px;height:0.8px;background:#d4d4d4;"></div><span class="t s" style="left:585px;top:411.5px;">Beam [°]</span><span class="t s" style="right:393px;top:411.5px;">10</span><div style="left:583px;top:434.7px;width:127.5px;height:0.8px;background:#d4d4d4;"></div><span class="t s" style="left:585px;top:423.85px;">Highpass</span><div style="left:699.5px;top:425.35px;width:7px;height:7px;background:#fff;border:1px solid #333;"></div><div style="left:583px;top:447.05px;width:127.5px;height:0.8px;background:#d4d4d4;"></div><span class="t s" style="left:585px;top:436.2px;">Highpass [Hz]</span><span class="t s" style="right:393px;top:436.2px;">10</span><div style="left:583px;top:459.4px;width:127.5px;height:0.8px;background:#d4d4d4;"></div><span class="t s" style="left:585px;top:448.55px;">Side Lobes Optimize</span><div style="left:699.5px;top:450.05px;width:7px;height:7px;background:#fff;border:1px solid #333;"></div><svg style="left:700.5px;top:451.05px" width="5" height="5" viewBox="0 0 5 5"><path d="M.5 2.500L2 4L4.500 .5" stroke="#222" stroke-width="1" fill="none"/></svg><div style="left:583px;top:471.75px;width:127.5px;height:0.8px;background:#d4d4d4;"></div><span class="t s" style="left:585px;top:460.9px;">Center [%]</span><span class="t s" style="right:393px;top:460.9px;">50</span><div style="left:583px;top:484.1px;width:127.5px;height:0.8px;background:#d4d4d4;"></div><span class="t s" style="left:585px;top:473.25px;">Trim [dB]</span><span class="t s" style="right:393px;top:473.25px;">0.0</span><div style="left:583px;top:163px;width:127.5px;height:0.8px;background:#d4d4d4;"></div><div style="left:646px;top:151px;width:0.8px;height:333.5px;background:#d4d4d4;"></div><div style="left:11.5px;top:570.5px;width:88px;height:15.5px;background:linear-gradient(#e6eef8,#d6e2f0);border:1px solid #8496aa;border-radius:2px;"></div><div style="left:14px;top:574px;width:8.5px;height:8.5px;border:1.5px solid #c93fd0;background:#eaa6ee;"></div><span class="t" style="left:25.5px;top:573.5px;color:#a4adb8;">Us...</span><div style="left:42px;top:573.5px;width:17.5px;height:10px;border:1px solid #b4c2d2;background:linear-gradient(#eef3f9,#d6e1ee);border-radius:2px;"></div><div style="left:47.5px;top:576.5px;width:6.5px;height:4.5px;border:1px solid #8a94a2;background:#f4f6f8;"></div><div style="left:61px;top:573.5px;width:17.5px;height:10px;border:1px solid #b4c2d2;background:linear-gradient(#eef3f9,#d6e1ee);border-radius:2px;"></div><div style="left:66.5px;top:576.5px;width:6.5px;height:4.5px;border:1px solid #8a94a2;background:#f4f6f8;"></div><div style="left:80px;top:573.5px;width:17.5px;height:10px;border:1px solid #b4c2d2;background:linear-gradient(#eef3f9,#d6e1ee);border-radius:2px;"></div><div style="left:85.5px;top:576.5px;width:6.5px;height:4.5px;border:1px solid #8a94a2;background:#f4f6f8;"></div><div style="left:100.5px;top:570.5px;width:88px;height:15.5px;background:linear-gradient(#e6eef8,#d6e2f0);border:1px solid #8496aa;border-radius:2px;"></div><div style="left:103px;top:574px;width:8.5px;height:8.5px;border:1.5px solid #3f9ad6;background:#bfe3f7;"></div><span class="t" style="left:114.5px;top:573.5px;color:#a4adb8;">De...</span><div style="left:131px;top:573.5px;width:17.5px;height:10px;border:1px solid #b4c2d2;background:linear-gradient(#eef3f9,#d6e1ee);border-radius:2px;"></div><div style="left:136.5px;top:576.5px;width:6.5px;height:4.5px;border:1px solid #8a94a2;background:#f4f6f8;"></div><div style="left:150px;top:573.5px;width:17.5px;height:10px;border:1px solid #b4c2d2;background:linear-gradient(#eef3f9,#d6e1ee);border-radius:2px;"></div><div style="left:155.5px;top:576.5px;width:6.5px;height:4.5px;border:1px solid #8a94a2;background:#f4f6f8;"></div><div style="left:169px;top:573.5px;width:17.5px;height:10px;border:1px solid #b4c2d2;background:linear-gradient(#eef3f9,#d6e1ee);border-radius:2px;"></div><div style="left:174.5px;top:576.5px;width:6.5px;height:4.5px;border:1px solid #8a94a2;background:#f4f6f8;"></div><div style="left:190.5px;top:570.5px;width:88px;height:15.5px;background:linear-gradient(#e6eef8,#d6e2f0);border:1px solid #8496aa;border-radius:2px;"></div><div style="left:193px;top:574px;width:8.5px;height:8.5px;border:1.5px solid #e040a0;background:#f4a9dc;"></div><span class="t" style="left:204.5px;top:573.5px;color:#a4adb8;">Inp...</span><div style="left:221px;top:573.5px;width:17.5px;height:10px;border:1px solid #b4c2d2;background:linear-gradient(#eef3f9,#d6e1ee);border-radius:2px;"></div><div style="left:226.5px;top:576.5px;width:6.5px;height:4.5px;border:1px solid #8a94a2;background:#f4f6f8;"></div><div style="left:240px;top:573.5px;width:17.5px;height:10px;border:1px solid #b4c2d2;background:linear-gradient(#eef3f9,#d6e1ee);border-radius:2px;"></div><div style="left:245.5px;top:576.5px;width:6.5px;height:4.5px;border:1px solid #8a94a2;background:#f4f6f8;"></div><div style="left:259px;top:573.5px;width:17.5px;height:10px;border:1px solid #b4c2d2;background:linear-gradient(#eef3f9,#d6e1ee);border-radius:2px;"></div><div style="left:264.5px;top:576.5px;width:6.5px;height:4.5px;border:1px solid #8a94a2;background:#f4f6f8;"></div><div style="left:10px;top:585.5px;width:1074px;height:14.5px;background:#f2f2f2;"></div><div style="left:12px;top:589.5px;width:22px;height:8.5px;background:#8fd14f;"></div><span class="t" style="left:-27px;width:100px;text-align:center;top:589px;color:#1c4a0c;font-weight:bold;font-size:6.1px;">Online</span><div style="left:37.5px;top:589.5px;width:36px;height:8.5px;background:#8fd14f;"></div><span class="t" style="left:5.5px;width:100px;text-align:center;top:589px;color:#1c4a0c;font-weight:bold;font-size:6.1px;">Fohhn-Net</span><div style="left:87px;top:589.5px;width:90.5px;height:8.5px;background:#5b9bd5;"></div><span class="t" style="left:82.25px;width:100px;text-align:center;top:589px;color:#0e2f5a;font-weight:bold;font-size:6.1px;">Search device / network scan</span><div style="left:190px;top:589.5px;width:60.5px;height:8.5px;background:#8fd14f;"></div><span class="t" style="left:170.25px;width:100px;text-align:center;top:589px;color:#1c4a0c;font-weight:bold;font-size:6.1px;">1 / 1 devices online</span><div style="left:264px;top:589.5px;width:49.5px;height:8.5px;background:#8fd14f;"></div><span class="t" style="left:238.75px;width:100px;text-align:center;top:589px;color:#1c4a0c;font-weight:bold;font-size:6.1px;">1 / 1 devices ok</span><span class="t" style="left:327px;top:588.8px;color:#111;font-size:6px;font-weight:bold;letter-spacing:-0.2px;">FAMSA ENABLED</span><div style="left:10px;top:600px;width:1074px;height:21.5px;background:#000;"></div><div style="left:230px;top:600px;width:26.5px;height:21.5px;background:#333;"></div><div style="left:176px;top:620px;width:23px;height:1.5px;background:#9cc8f0;"></div><svg style="left:0;top:600px" width="1099" height="22" viewBox="0 0 1099 22">
<g fill="#fff"><rect x="19" y="6" width="4" height="4"/><rect x="24" y="6" width="4.500" height="4"/><rect x="19" y="11" width="4" height="4.500"/><rect x="24" y="11" width="4.500" height="4.500"/></g>
<rect x="46.500" y="6.500" width="7" height="8" rx="1" fill="none" stroke="#fff" stroke-width="1.300"/><path d="M44 8v5M56 8v5" stroke="#fff" stroke-width="1"/>
<path d="M73 11.500h10.500c.3-4-2.200-6-5-6c-3 0-5.500 2.500-5.500 5.800c0 3.200 2.500 5.200 5.500 5.200c1.800 0 3.200-.5 4.500-1.500" fill="none" stroke="#2a8ae0" stroke-width="2.200"/>
<path d="M99 6h5l1 1.500h7V16H99z" fill="#f5d36a"/><rect x="100.500" y="9.500" width="10" height="5" fill="#7fc4ea"/><rect x="100.500" y="12.500" width="10" height="2" fill="#5ab552"/>
<ellipse cx="133" cy="11.500" rx="6" ry="4.800" fill="none" stroke="#d8d8d0" stroke-width="2" transform="rotate(-25 133 11.500)"/><circle cx="138" cy="7" r="1.800" fill="#e8e0c0"/><circle cx="131.500" cy="12" r="1.500" fill="#e8e8e8"/>
<circle cx="159.500" cy="10.500" r="6.300" fill="#58b828"/><circle cx="159.500" cy="10.500" r="3.500" fill="#8ee04a"/><text x="159.500" y="12.500" font-size="6" fill="#114400" text-anchor="middle" font-family="Liberation Sans,sans-serif" font-weight="bold">?</text><rect x="155" y="17" width="9" height="1.200" fill="#c03020"/>
<rect x="180" y="4" width="14.500" height="14.500" fill="#f0961e"/><path d="M184.500 7l6 4.200l-6 4.200z" fill="#fff"/>
<rect x="208" y="5.500" width="13" height="11.500" fill="#1a2a3a" stroke="#c8d0d8" stroke-width="1.200"/><rect x="208" y="5.500" width="13" height="2" fill="#c8d0d8"/>
<rect x="237.500" y="5" width="11.500" height="12.500" fill="#111" stroke="#ddd" stroke-width="1"/><rect x="240" y="7.500" width="5.500" height="7.500" fill="#eee"/><rect x="242" y="9.500" width="3.500" height="3" fill="#111"/>
<circle cx="270.500" cy="11" r="6.500" fill="#e8402c"/><path d="M270.500 11L264.800 14.200A6.500 6.500 0 0 0 273.800 16.600z" fill="#38a852"/><path d="M270.500 11L273.800 16.600A6.500 6.500 0 0 0 277 11z" fill="#f8c020"/><path d="M270.500 11h6.500a6.500 6.500 0 0 0-.9-3.200z" fill="#f8c020"/><circle cx="270.500" cy="11" r="3" fill="#fff"/><circle cx="270.500" cy="11" r="2.300" fill="#3a7de8"/>
<rect x="290.500" y="5" width="12.500" height="12.500" rx="1" fill="#d8482a"/><rect x="293" y="7.500" width="7.500" height="7.500" fill="#f6d8cc"/><text x="296.800" y="13.800" font-size="6.500" fill="#c03818" text-anchor="middle" font-family="Liberation Sans,sans-serif" font-weight="bold">P</text>
<path d="M989.500 12.500l3.200-3.200l3.200 3.200" fill="none" stroke="#fff" stroke-width="1.200"/>
<rect x="1002" y="7" width="7" height="5.500" fill="none" stroke="#fff" stroke-width="1.100"/><path d="M1003.500 15h4M1005.500 12.500v2.500M1000.500 9v5" stroke="#fff" stroke-width="1"/>
<path d="M1015 9.500h2l2.500-2.500v8l-2.500-2.500h-2z" fill="#fff"/><path d="M1021 8.500q1.500 2.500 0 5M1023 7.500q2.200 3.500 0 7" fill="none" stroke="#fff" stroke-width=".9"/>
<path d="M1028.500 6.500h8.500v7h-5l-2 2v-2h-1.500z" fill="none" stroke="#fff" stroke-width="1.100"/><path d="M1030.500 9h4.500M1030.500 11h3" stroke="#fff" stroke-width=".7"/>
</svg><span class="t" style="left:1010px;width:100px;text-align:center;top:601.5px;color:#fff;font-size:6px;">11:40</span><span class="t" style="left:1010px;width:100px;text-align:center;top:610.5px;color:#fff;font-size:6px;">13.09.2018</span><div style="left:791px;top:596px;width:280px;height:7px;background:#fbfbfb;"></div></body></html>
